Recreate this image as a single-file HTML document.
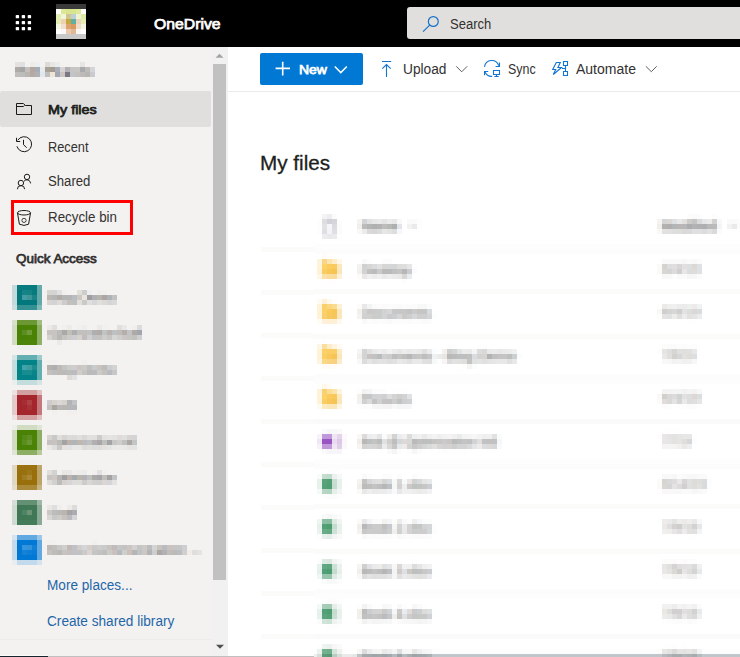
<!DOCTYPE html>
<html lang="en">
<head>
<meta charset="utf-8">
<title>My files - OneDrive</title>
<style>
html,body{margin:0;padding:0;}
body{width:740px;height:657px;overflow:hidden;background:#fff;position:relative;font-family:"Liberation Sans",sans-serif;font-size:14px;color:#323130;}
.abs{position:absolute;}
.sb{-webkit-text-stroke:.75px currentColor;}
.t{position:absolute;white-space:nowrap;line-height:16px;transform-origin:0 50%;}
#topbar{left:0;top:0;width:740px;height:47px;background:#000;}
#search{left:407px;top:7px;width:340px;height:32px;background:#e1dfdd;border-radius:3px;}
#side{left:0;top:47px;width:228px;height:610px;background:#f3f2f1;}
#track{left:211px;top:47px;width:17px;height:610px;background:#f1f1f1;}
#thumb{left:213px;top:64px;width:13px;height:516px;background:#c1c1c1;}
#sel{left:0;top:91px;width:211px;height:36px;background:#e1dfdd;border-radius:2px;}
#redbox{left:11px;top:200px;width:116px;height:29px;border:3px solid #ff0000;}
#newbtn{left:260px;top:53px;width:103px;height:32px;background:#0078d4;border-radius:2px;}
#cmdline{left:228px;top:91px;width:512px;height:1px;background:#edebe9;}
#sideline{left:0;top:639px;width:211px;height:1px;background:#edebe9;}
#botline{left:48px;top:656px;width:266px;height:1px;background:#c0c0c0;}
#botdark{left:0;top:655px;width:48px;height:1px;background:#14252e;border-top:1px solid #fbfbfa;box-sizing:content-box;}
svg{position:absolute;left:0;top:0;overflow:visible;}
</style>
</head>
<body>
<div id="topbar" class="abs"></div>
<div id="search" class="abs"></div>
<div id="side" class="abs"></div>
<div id="track" class="abs"></div>
<div id="thumb" class="abs"></div>
<div id="sel" class="abs"></div>
<div id="sideline" class="abs"></div>
<div id="cmdline" class="abs"></div>
<div id="newbtn" class="abs"></div>
<div id="redbox" class="abs"></div>

<!--TEXT-->
<div class="t sb" id="t_od" style="left:154.3px;top:15.8px;font-size:15px;color:#fff;transform:scaleX(1.05)">OneDrive</div>
<div class="t" id="t_search" style="left:450px;top:16.2px;color:#323130;transform:scaleX(.93)">Search</div>
<div class="t sb" id="t_new" style="left:298.5px;top:61.7px;font-size:13.2px;color:#fff;transform:scaleX(1.06)">New</div>
<div class="t" id="t_upload" style="left:402.5px;top:61px;transform:scaleX(.98)">Upload</div>
<div class="t" id="t_sync" style="left:507.5px;top:61px;transform:scaleX(.887)">Sync</div>
<div class="t" id="t_auto" style="left:576px;top:61px;">Automate</div>
<div class="t sb" id="t_myf" style="left:48px;top:101.7px;font-size:13.2px;color:#201f1e;transform:scaleX(1.09)">My files</div>
<div class="t" id="t_recent" style="left:47.5px;top:138.5px;transform:scaleX(.913)">Recent</div>
<div class="t" id="t_shared" style="left:47.8px;top:173px;transform:scaleX(.94)">Shared</div>
<div class="t" id="t_recycle" style="left:47.5px;top:208.5px;transform:scaleX(.953)">Recycle bin</div>
<div class="t sb" id="t_qa" style="left:16.3px;top:251.2px;font-size:13.2px;transform:scaleX(1.02)">Quick Access</div>
<div class="t" id="t_more" style="left:47px;top:577px;color:#1f66a8;transform:scaleX(.972)">More places...</div>
<div class="t" id="t_create" style="left:47.2px;top:613px;color:#1f66a8;transform:scaleX(.974)">Create shared library</div>
<div class="t" id="t_head" style="left:259.6px;top:151px;font-size:20px;line-height:24px;color:#201f1e;transform:scaleX(1.035);-webkit-text-stroke:.3px #201f1e">My files</div>
<!--/TEXT-->

<!--ICONS-->
<svg width="740" height="657" viewBox="0 0 740 657" fill="none" stroke-linecap="butt">
<g fill="#fff">
<rect x="15.7" y="14.9" width="3.4" height="3.4" rx=".9"/><rect x="21.7" y="14.9" width="3.4" height="3.4" rx=".9"/><rect x="27.7" y="14.9" width="3.4" height="3.4" rx=".9"/>
<rect x="15.7" y="20.9" width="3.4" height="3.4" rx=".9"/><rect x="21.7" y="20.9" width="3.4" height="3.4" rx=".9"/><rect x="27.7" y="20.9" width="3.4" height="3.4" rx=".9"/>
<rect x="15.7" y="26.9" width="3.4" height="3.4" rx=".9"/><rect x="21.7" y="26.9" width="3.4" height="3.4" rx=".9"/><rect x="27.7" y="26.9" width="3.4" height="3.4" rx=".9"/>
</g>
<g stroke="#1170c6" stroke-width="1.15"><circle cx="433.3" cy="21.5" r="4.95"/><path d="M429.7 25.1L423 31.6"/></g>
<g stroke="#fff" stroke-width="1.6"><path d="M275.6 68.4H290M282.7 61.7V75.5"/><path d="M334.8 66.5L340.8 72.6L346.8 66.5" stroke-width="1.5"/></g>
<g stroke="#1374d2" stroke-width="1.1">
<path d="M382 61.5H391.2M386.5 64.6V77M382.3 68.7L386.5 64.5L390.7 68.7"/>
<path d="M484.5 66.8A7.3 7.3 0 0 1 498.7 65.7M499.5 62.6V66.5H495.6M484.5 75.2V71.5H488.2M485 72A7.3 7.3 0 0 0 492.2 76.4M493.5 70.5H499.5V74.5H493.5ZM496.5 74.5V76.5M494.3 76.5H498.7"/>
<path d="M556.3 62.5H560.3L557.9 67.5H561.5L553.3 74.5L555.7 69.5H552.7ZM563.5 61.5H567.5V65.5H563.5ZM563.5 71.5H567.5V75.5H563.5ZM565.5 65.5V71.5M562 68.5H565.5"/>
</g>
<g stroke="#605e5c" stroke-width="1"><path d="M456.2 66.3L461.7 71.8L467.2 66.3"/><path d="M645.9 66.3L651.3 71.7L656.7 66.3"/></g>
<g stroke="#1b1a19" stroke-width="1">
<path d="M16.5 103.5H23.4L25.4 105.5H31.5V114.5H16.5ZM16.5 106.5H23.4L24.6 105.4"/>
<path d="M17.7 140.3A7.5 7.5 0 1 1 16.9 146.3M16.5 137.8V141.5H20.2M23.5 139.8V144.7L26.7 147.7"/>
<circle cx="27" cy="176.9" r="2.7"/><circle cx="20.9" cy="183" r="2.7"/><path d="M17.4 189.2A3.6 3.6 0 0 1 24.6 189.2M24 181.2A3.7 3.7 0 0 1 30.6 183.4"/>
<ellipse cx="24" cy="212.75" rx="6.5" ry="2.25"/><path d="M17.5 213L19.4 224.2Q24 226.6 28.6 224.2L30.5 213"/><circle cx="24" cy="220.4" r="2.1" stroke-opacity=".8"/>
</g>
<path d="M215.5 57.8L219.5 53.8L223.5 57.8Z" fill="#a3a3a3"/>
<path d="M216 644.8L220 648.8L224 644.8Z" fill="#505050"/>
</svg>
<!--/ICONS-->

<!--MOSAIC-->
<svg width="740" height="657" viewBox="0 0 740 657" shape-rendering="crispEdges">
<path fill="#c4dada" d="M12 285h5v5h-5z"/>
<path fill="#097b7f" d="M17 285h5v5h-5z"/>
<path fill="#097b7f" d="M22 285h5v5h-5z"/>
<path fill="#097b7f" d="M27 285h5v5h-5z"/>
<path fill="#097b7f" d="M32 285h5v5h-5z"/>
<path fill="#66aaac" d="M37 285h5v5h-5z"/>
<path fill="#c3dada" d="M12 290h5v5h-5z"/>
<path fill="#03787c" d="M17 290h5v5h-5z"/>
<path fill="#168387" d="M22 290h5v5h-5z"/>
<path fill="#158286" d="M27 290h5v5h-5z"/>
<path fill="#077a7d" d="M32 290h5v5h-5z"/>
<path fill="#63a9ab" d="M37 290h5v5h-5z"/>
<path fill="#d8d5d1" d="M47 290h5v5h-5z"/>
<path fill="#d3d4d4" d="M52 290h5v5h-5z"/>
<path fill="#e1e0e0" d="M57 290h5v5h-5z"/>
<path fill="#f1f0ef" d="M62 290h5v5h-5z"/>
<path fill="#e2deda" d="M77 290h5v5h-5z"/>
<path fill="#cecdcd" d="M82 290h5v5h-5z"/>
<path fill="#edeeee" d="M87 290h5v5h-5z"/>
<path fill="#f1efee" d="M97 290h5v5h-5z"/>
<path fill="#f0efee" d="M102 290h5v5h-5z"/>
<path fill="#c3dada" d="M12 295h5v5h-5z"/>
<path fill="#04787d" d="M17 295h5v5h-5z"/>
<path fill="#429ca2" d="M22 295h5v5h-5z"/>
<path fill="#3c9698" d="M27 295h5v5h-5z"/>
<path fill="#1d8485" d="M32 295h5v5h-5z"/>
<path fill="#63a9ab" d="M37 295h5v5h-5z"/>
<path fill="#bcb9b5" d="M47 295h5v5h-5z"/>
<path fill="#b6b5b5" d="M52 295h5v5h-5z"/>
<path fill="#b1aca5" d="M57 295h5v5h-5z"/>
<path fill="#b5b5b4" d="M62 295h5v5h-5z"/>
<path fill="#b3b6b7" d="M67 295h5v5h-5z"/>
<path fill="#bbbcbf" d="M72 295h5v5h-5z"/>
<path fill="#ccc7c4" d="M77 295h5v5h-5z"/>
<path fill="#e7e5de" d="M82 295h5v5h-5z"/>
<path fill="#9f9d9f" d="M87 295h5v5h-5z"/>
<path fill="#aeb0b3" d="M92 295h5v5h-5z"/>
<path fill="#b7b3ad" d="M97 295h5v5h-5z"/>
<path fill="#aba6a4" d="M102 295h5v5h-5z"/>
<path fill="#adb3b7" d="M107 295h5v5h-5z"/>
<path fill="#c0c1c1" d="M112 295h5v5h-5z"/>
<path fill="#c3dada" d="M12 300h5v5h-5z"/>
<path fill="#03787c" d="M17 300h5v5h-5z"/>
<path fill="#03787c" d="M22 300h5v5h-5z"/>
<path fill="#03787c" d="M27 300h5v5h-5z"/>
<path fill="#03787c" d="M32 300h5v5h-5z"/>
<path fill="#63a9ab" d="M37 300h5v5h-5z"/>
<path fill="#d8d5d1" d="M47 300h5v5h-5z"/>
<path fill="#d2d3d4" d="M52 300h5v5h-5z"/>
<path fill="#dddad7" d="M57 300h5v5h-5z"/>
<path fill="#cdcccd" d="M62 300h5v5h-5z"/>
<path fill="#c3bfb9" d="M67 300h5v5h-5z"/>
<path fill="#bcc0c3" d="M72 300h5v5h-5z"/>
<path fill="#e2deda" d="M77 300h5v5h-5z"/>
<path fill="#cacac9" d="M82 300h5v5h-5z"/>
<path fill="#e1dfde" d="M87 300h5v5h-5z"/>
<path fill="#d6d7d8" d="M92 300h5v5h-5z"/>
<path fill="#e0dfdc" d="M97 300h5v5h-5z"/>
<path fill="#ddd9d7" d="M102 300h5v5h-5z"/>
<path fill="#d5d5d6" d="M107 300h5v5h-5z"/>
<path fill="#d9d9da" d="M112 300h5v5h-5z"/>
<path fill="#ccdede" d="M12 305h5v5h-5z"/>
<path fill="#339093" d="M17 305h5v5h-5z"/>
<path fill="#339093" d="M22 305h5v5h-5z"/>
<path fill="#339093" d="M27 305h5v5h-5z"/>
<path fill="#339093" d="M32 305h5v5h-5z"/>
<path fill="#80b7b9" d="M37 305h5v5h-5z"/>
<path fill="#d8e0cb" d="M12 320h5v5h-5z"/>
<path fill="#6b9835" d="M17 320h5v5h-5z"/>
<path fill="#6b9834" d="M22 320h5v5h-5z"/>
<path fill="#6b9834" d="M27 320h5v5h-5z"/>
<path fill="#6b9834" d="M32 320h5v5h-5z"/>
<path fill="#a2bc80" d="M37 320h5v5h-5z"/>
<path fill="#d1dcc2" d="M12 325h5v5h-5z"/>
<path fill="#498205" d="M17 325h5v5h-5z"/>
<path fill="#498206" d="M22 325h5v5h-5z"/>
<path fill="#4a8306" d="M27 325h5v5h-5z"/>
<path fill="#498205" d="M32 325h5v5h-5z"/>
<path fill="#8daf63" d="M37 325h5v5h-5z"/>
<path fill="#ece9e6" d="M47 325h5v5h-5z"/>
<path fill="#dfdfe0" d="M52 325h5v5h-5z"/>
<path fill="#f0efee" d="M62 325h5v5h-5z"/>
<path fill="#ebebea" d="M67 325h5v5h-5z"/>
<path fill="#f2f0ee" d="M77 325h5v5h-5z"/>
<path fill="#ededed" d="M82 325h5v5h-5z"/>
<path fill="#eceae8" d="M97 325h5v5h-5z"/>
<path fill="#f0f0f0" d="M102 325h5v5h-5z"/>
<path fill="#e1dedb" d="M117 325h5v5h-5z"/>
<path fill="#e8e8e8" d="M122 325h5v5h-5z"/>
<path fill="#f1efec" d="M132 325h5v5h-5z"/>
<path fill="#dcdbdb" d="M137 325h5v5h-5z"/>
<path fill="#d1dcc2" d="M12 330h5v5h-5z"/>
<path fill="#498205" d="M17 330h5v5h-5z"/>
<path fill="#598f24" d="M22 330h5v5h-5z"/>
<path fill="#719b34" d="M27 330h5v5h-5z"/>
<path fill="#498205" d="M32 330h5v5h-5z"/>
<path fill="#8daf63" d="M37 330h5v5h-5z"/>
<path fill="#c5c4c0" d="M47 330h5v5h-5z"/>
<path fill="#cac3bf" d="M52 330h5v5h-5z"/>
<path fill="#bbbcba" d="M57 330h5v5h-5z"/>
<path fill="#aba8a8" d="M62 330h5v5h-5z"/>
<path fill="#c2bfb7" d="M67 330h5v5h-5z"/>
<path fill="#aeafb3" d="M72 330h5v5h-5z"/>
<path fill="#c2c0ba" d="M77 330h5v5h-5z"/>
<path fill="#c2bfbf" d="M82 330h5v5h-5z"/>
<path fill="#c2c3c1" d="M87 330h5v5h-5z"/>
<path fill="#aeafb0" d="M92 330h5v5h-5z"/>
<path fill="#b1aba8" d="M97 330h5v5h-5z"/>
<path fill="#bec3c4" d="M102 330h5v5h-5z"/>
<path fill="#b9b4b0" d="M107 330h5v5h-5z"/>
<path fill="#bdc1c3" d="M112 330h5v5h-5z"/>
<path fill="#c0bdb8" d="M117 330h5v5h-5z"/>
<path fill="#b5afac" d="M122 330h5v5h-5z"/>
<path fill="#c2c3c2" d="M127 330h5v5h-5z"/>
<path fill="#b0aaa5" d="M132 330h5v5h-5z"/>
<path fill="#a0a7ae" d="M137 330h5v5h-5z"/>
<path fill="#d1dcc2" d="M12 335h5v5h-5z"/>
<path fill="#498205" d="M17 335h5v5h-5z"/>
<path fill="#498206" d="M22 335h5v5h-5z"/>
<path fill="#4a8306" d="M27 335h5v5h-5z"/>
<path fill="#498205" d="M32 335h5v5h-5z"/>
<path fill="#8daf63" d="M37 335h5v5h-5z"/>
<path fill="#d5d1cd" d="M47 335h5v5h-5z"/>
<path fill="#c6c5c5" d="M52 335h5v5h-5z"/>
<path fill="#bbb8b4" d="M57 335h5v5h-5z"/>
<path fill="#c6c3c3" d="M62 335h5v5h-5z"/>
<path fill="#cdcbc5" d="M67 335h5v5h-5z"/>
<path fill="#cccdd2" d="M72 335h5v5h-5z"/>
<path fill="#d6d3cd" d="M77 335h5v5h-5z"/>
<path fill="#bfbdbf" d="M82 335h5v5h-5z"/>
<path fill="#d1cfcd" d="M87 335h5v5h-5z"/>
<path fill="#c1c2c3" d="M92 335h5v5h-5z"/>
<path fill="#c6c1bf" d="M97 335h5v5h-5z"/>
<path fill="#cbcdcc" d="M102 335h5v5h-5z"/>
<path fill="#c7c5c3" d="M107 335h5v5h-5z"/>
<path fill="#d5d6d6" d="M112 335h5v5h-5z"/>
<path fill="#d1cecc" d="M117 335h5v5h-5z"/>
<path fill="#cac6c4" d="M122 335h5v5h-5z"/>
<path fill="#c4c6c6" d="M127 335h5v5h-5z"/>
<path fill="#c4c0bc" d="M132 335h5v5h-5z"/>
<path fill="#ccd0d3" d="M137 335h5v5h-5z"/>
<path fill="#d2dcc3" d="M12 340h5v5h-5z"/>
<path fill="#4d850b" d="M17 340h5v5h-5z"/>
<path fill="#4d850a" d="M22 340h5v5h-5z"/>
<path fill="#4d850a" d="M27 340h5v5h-5z"/>
<path fill="#4d850a" d="M32 340h5v5h-5z"/>
<path fill="#8fb067" d="M37 340h5v5h-5z"/>
<path fill="#ebeae9" d="M57 340h5v5h-5z"/>
<path fill="#efefec" d="M17 345h5v5h-5z"/>
<path fill="#efefec" d="M22 345h5v5h-5z"/>
<path fill="#efefec" d="M27 345h5v5h-5z"/>
<path fill="#efefec" d="M32 345h5v5h-5z"/>
<path fill="#f1f0ee" d="M37 345h5v5h-5z"/>
<path fill="#d6e5e4" d="M12 355h5v5h-5z"/>
<path fill="#63afb1" d="M17 355h5v5h-5z"/>
<path fill="#63afb1" d="M22 355h5v5h-5z"/>
<path fill="#63afb1" d="M27 355h5v5h-5z"/>
<path fill="#63afb1" d="M32 355h5v5h-5z"/>
<path fill="#9dcacb" d="M37 355h5v5h-5z"/>
<path fill="#c3dcdc" d="M12 360h5v5h-5z"/>
<path fill="#038387" d="M17 360h5v5h-5z"/>
<path fill="#038387" d="M22 360h5v5h-5z"/>
<path fill="#038387" d="M27 360h5v5h-5z"/>
<path fill="#038387" d="M32 360h5v5h-5z"/>
<path fill="#63afb1" d="M37 360h5v5h-5z"/>
<path fill="#f1f0ee" d="M47 360h5v5h-5z"/>
<path fill="#f1f0ef" d="M52 360h5v5h-5z"/>
<path fill="#f0efee" d="M82 360h5v5h-5z"/>
<path fill="#c3dcdc" d="M12 365h5v5h-5z"/>
<path fill="#048388" d="M17 365h5v5h-5z"/>
<path fill="#42a4a9" d="M22 365h5v5h-5z"/>
<path fill="#3a9ea1" d="M27 365h5v5h-5z"/>
<path fill="#1c8d8f" d="M32 365h5v5h-5z"/>
<path fill="#63afb1" d="M37 365h5v5h-5z"/>
<path fill="#b7b2ac" d="M47 365h5v5h-5z"/>
<path fill="#aeafb1" d="M52 365h5v5h-5z"/>
<path fill="#bdbab6" d="M57 365h5v5h-5z"/>
<path fill="#c5c4c5" d="M62 365h5v5h-5z"/>
<path fill="#ccccca" d="M67 365h5v5h-5z"/>
<path fill="#cdcdd0" d="M72 365h5v5h-5z"/>
<path fill="#ccc5c1" d="M77 365h5v5h-5z"/>
<path fill="#cacac6" d="M82 365h5v5h-5z"/>
<path fill="#bfbfc1" d="M87 365h5v5h-5z"/>
<path fill="#c9cacb" d="M92 365h5v5h-5z"/>
<path fill="#c7c4bf" d="M97 365h5v5h-5z"/>
<path fill="#bebcbb" d="M102 365h5v5h-5z"/>
<path fill="#cacccd" d="M107 365h5v5h-5z"/>
<path fill="#d1d2d2" d="M112 365h5v5h-5z"/>
<path fill="#c3dcdc" d="M12 370h5v5h-5z"/>
<path fill="#038387" d="M17 370h5v5h-5z"/>
<path fill="#168d91" d="M22 370h5v5h-5z"/>
<path fill="#178d91" d="M27 370h5v5h-5z"/>
<path fill="#088588" d="M32 370h5v5h-5z"/>
<path fill="#63afb1" d="M37 370h5v5h-5z"/>
<path fill="#c5c1bd" d="M47 370h5v5h-5z"/>
<path fill="#bdbdbd" d="M52 370h5v5h-5z"/>
<path fill="#bfbab5" d="M57 370h5v5h-5z"/>
<path fill="#bbbaba" d="M62 370h5v5h-5z"/>
<path fill="#bcbdbc" d="M67 370h5v5h-5z"/>
<path fill="#bbbcbf" d="M72 370h5v5h-5z"/>
<path fill="#d2cdc9" d="M77 370h5v5h-5z"/>
<path fill="#c5c4c0" d="M82 370h5v5h-5z"/>
<path fill="#bbb9b9" d="M87 370h5v5h-5z"/>
<path fill="#b9bbbe" d="M92 370h5v5h-5z"/>
<path fill="#cdcbc7" d="M97 370h5v5h-5z"/>
<path fill="#c7c1be" d="M102 370h5v5h-5z"/>
<path fill="#b7bbbf" d="M107 370h5v5h-5z"/>
<path fill="#c6c7c8" d="M112 370h5v5h-5z"/>
<path fill="#c3dcdc" d="M12 375h5v5h-5z"/>
<path fill="#038387" d="M17 375h5v5h-5z"/>
<path fill="#038387" d="M22 375h5v5h-5z"/>
<path fill="#038387" d="M27 375h5v5h-5z"/>
<path fill="#038387" d="M32 375h5v5h-5z"/>
<path fill="#63afb1" d="M37 375h5v5h-5z"/>
<path fill="#dedbd7" d="M67 375h5v5h-5z"/>
<path fill="#e0e2e3" d="M72 375h5v5h-5z"/>
<path fill="#e9eeed" d="M12 380h5v5h-5z"/>
<path fill="#c3dcdc" d="M17 380h5v5h-5z"/>
<path fill="#c3dcdc" d="M22 380h5v5h-5z"/>
<path fill="#c3dcdc" d="M27 380h5v5h-5z"/>
<path fill="#c3dcdc" d="M32 380h5v5h-5z"/>
<path fill="#d6e5e4" d="M37 380h5v5h-5z"/>
<path fill="#ede2e1" d="M12 390h5v5h-5z"/>
<path fill="#d3a0a2" d="M17 390h5v5h-5z"/>
<path fill="#d3a0a2" d="M22 390h5v5h-5z"/>
<path fill="#d3a0a2" d="M27 390h5v5h-5z"/>
<path fill="#d3a0a2" d="M32 390h5v5h-5z"/>
<path fill="#e0c1c2" d="M37 390h5v5h-5z"/>
<path fill="#e3c9c9" d="M12 395h5v5h-5z"/>
<path fill="#a4262c" d="M17 395h5v5h-5z"/>
<path fill="#a4262c" d="M22 395h5v5h-5z"/>
<path fill="#a4262c" d="M27 395h5v5h-5z"/>
<path fill="#a4262c" d="M32 395h5v5h-5z"/>
<path fill="#c4787b" d="M37 395h5v5h-5z"/>
<path fill="#e3c9c9" d="M12 400h5v5h-5z"/>
<path fill="#a4262c" d="M17 400h5v5h-5z"/>
<path fill="#a62d35" d="M22 400h5v5h-5z"/>
<path fill="#af4042" d="M27 400h5v5h-5z"/>
<path fill="#a4262c" d="M32 400h5v5h-5z"/>
<path fill="#c4787b" d="M37 400h5v5h-5z"/>
<path fill="#cdcbcb" d="M47 400h5v5h-5z"/>
<path fill="#d6d3ce" d="M52 400h5v5h-5z"/>
<path fill="#d9d8d7" d="M57 400h5v5h-5z"/>
<path fill="#d6d2cd" d="M62 400h5v5h-5z"/>
<path fill="#b4b3b3" d="M67 400h5v5h-5z"/>
<path fill="#c0c3c7" d="M72 400h5v5h-5z"/>
<path fill="#e3c9c9" d="M12 405h5v5h-5z"/>
<path fill="#a4262c" d="M17 405h5v5h-5z"/>
<path fill="#a4272e" d="M22 405h5v5h-5z"/>
<path fill="#a93236" d="M27 405h5v5h-5z"/>
<path fill="#a4262c" d="M32 405h5v5h-5z"/>
<path fill="#c4787b" d="M37 405h5v5h-5z"/>
<path fill="#c2c1bd" d="M47 405h5v5h-5z"/>
<path fill="#aba5a0" d="M52 405h5v5h-5z"/>
<path fill="#b9b8b8" d="M57 405h5v5h-5z"/>
<path fill="#b9b6af" d="M62 405h5v5h-5z"/>
<path fill="#b5b6ba" d="M67 405h5v5h-5z"/>
<path fill="#b5b6b7" d="M72 405h5v5h-5z"/>
<path fill="#e3c9c9" d="M12 410h5v5h-5z"/>
<path fill="#a4262c" d="M17 410h5v5h-5z"/>
<path fill="#a4262c" d="M22 410h5v5h-5z"/>
<path fill="#a4262c" d="M27 410h5v5h-5z"/>
<path fill="#a4262c" d="M32 410h5v5h-5z"/>
<path fill="#c4787b" d="M37 410h5v5h-5z"/>
<path fill="#f1f0ef" d="M52 410h5v5h-5z"/>
<path fill="#f1f0ef" d="M67 410h5v5h-5z"/>
<path fill="#f1f0ef" d="M72 410h5v5h-5z"/>
<path fill="#ede2e1" d="M12 415h5v5h-5z"/>
<path fill="#d3a0a2" d="M17 415h5v5h-5z"/>
<path fill="#d3a0a2" d="M22 415h5v5h-5z"/>
<path fill="#d3a0a2" d="M27 415h5v5h-5z"/>
<path fill="#d3a0a2" d="M32 415h5v5h-5z"/>
<path fill="#e0c1c2" d="M37 415h5v5h-5z"/>
<path fill="#eceee7" d="M12 425h5v5h-5z"/>
<path fill="#d1dcc2" d="M17 425h5v5h-5z"/>
<path fill="#d1dcc2" d="M22 425h5v5h-5z"/>
<path fill="#d1dcc2" d="M27 425h5v5h-5z"/>
<path fill="#d1dcc2" d="M32 425h5v5h-5z"/>
<path fill="#dee5d5" d="M37 425h5v5h-5z"/>
<path fill="#d1dcc2" d="M12 430h5v5h-5z"/>
<path fill="#498205" d="M17 430h5v5h-5z"/>
<path fill="#498205" d="M22 430h5v5h-5z"/>
<path fill="#498205" d="M27 430h5v5h-5z"/>
<path fill="#498205" d="M32 430h5v5h-5z"/>
<path fill="#8daf64" d="M37 430h5v5h-5z"/>
<path fill="#d1dcc2" d="M12 435h5v5h-5z"/>
<path fill="#498205" d="M17 435h5v5h-5z"/>
<path fill="#548b18" d="M22 435h5v5h-5z"/>
<path fill="#5e9021" d="M27 435h5v5h-5z"/>
<path fill="#4b8306" d="M32 435h5v5h-5z"/>
<path fill="#8daf63" d="M37 435h5v5h-5z"/>
<path fill="#d7d4d0" d="M47 435h5v5h-5z"/>
<path fill="#c8c8c9" d="M52 435h5v5h-5z"/>
<path fill="#e0dedb" d="M57 435h5v5h-5z"/>
<path fill="#d5d4d3" d="M62 435h5v5h-5z"/>
<path fill="#dcdbda" d="M67 435h5v5h-5z"/>
<path fill="#dbdad9" d="M72 435h5v5h-5z"/>
<path fill="#e1dedb" d="M77 435h5v5h-5z"/>
<path fill="#d8d8d8" d="M82 435h5v5h-5z"/>
<path fill="#e0e0df" d="M87 435h5v5h-5z"/>
<path fill="#e0dfde" d="M92 435h5v5h-5z"/>
<path fill="#cdcbcc" d="M97 435h5v5h-5z"/>
<path fill="#e3e1df" d="M102 435h5v5h-5z"/>
<path fill="#e4e4e3" d="M107 435h5v5h-5z"/>
<path fill="#e2e2e2" d="M112 435h5v5h-5z"/>
<path fill="#e0dbda" d="M117 435h5v5h-5z"/>
<path fill="#dfdfde" d="M122 435h5v5h-5z"/>
<path fill="#d7d4d3" d="M127 435h5v5h-5z"/>
<path fill="#d2d4d5" d="M132 435h5v5h-5z"/>
<path fill="#d1dcc2" d="M12 440h5v5h-5z"/>
<path fill="#498205" d="M17 440h5v5h-5z"/>
<path fill="#5a8e1f" d="M22 440h5v5h-5z"/>
<path fill="#699830" d="M27 440h5v5h-5z"/>
<path fill="#4c8306" d="M32 440h5v5h-5z"/>
<path fill="#8daf63" d="M37 440h5v5h-5z"/>
<path fill="#c3c2c0" d="M47 440h5v5h-5z"/>
<path fill="#c8c3bf" d="M52 440h5v5h-5z"/>
<path fill="#babab8" d="M57 440h5v5h-5z"/>
<path fill="#a4a3a4" d="M62 440h5v5h-5z"/>
<path fill="#bab2ab" d="M67 440h5v5h-5z"/>
<path fill="#aeb5bb" d="M72 440h5v5h-5z"/>
<path fill="#bfb7ae" d="M77 440h5v5h-5z"/>
<path fill="#b9bbbf" d="M82 440h5v5h-5z"/>
<path fill="#c1c0c1" d="M87 440h5v5h-5z"/>
<path fill="#afb0af" d="M92 440h5v5h-5z"/>
<path fill="#aaa6a8" d="M97 440h5v5h-5z"/>
<path fill="#bfc1bf" d="M102 440h5v5h-5z"/>
<path fill="#a5a4a5" d="M107 440h5v5h-5z"/>
<path fill="#c6c7c7" d="M112 440h5v5h-5z"/>
<path fill="#d2ccca" d="M117 440h5v5h-5z"/>
<path fill="#bec2c1" d="M122 440h5v5h-5z"/>
<path fill="#aca6a4" d="M127 440h5v5h-5z"/>
<path fill="#c2c5c6" d="M132 440h5v5h-5z"/>
<path fill="#d1dcc2" d="M12 445h5v5h-5z"/>
<path fill="#498205" d="M17 445h5v5h-5z"/>
<path fill="#498205" d="M22 445h5v5h-5z"/>
<path fill="#498205" d="M27 445h5v5h-5z"/>
<path fill="#498205" d="M32 445h5v5h-5z"/>
<path fill="#8daf63" d="M37 445h5v5h-5z"/>
<path fill="#eae7e4" d="M47 445h5v5h-5z"/>
<path fill="#dddede" d="M52 445h5v5h-5z"/>
<path fill="#cac7c5" d="M57 445h5v5h-5z"/>
<path fill="#e3e2e0" d="M62 445h5v5h-5z"/>
<path fill="#e3e2e2" d="M67 445h5v5h-5z"/>
<path fill="#e6e7e7" d="M72 445h5v5h-5z"/>
<path fill="#e9e7e4" d="M77 445h5v5h-5z"/>
<path fill="#dddcdb" d="M82 445h5v5h-5z"/>
<path fill="#e0dfde" d="M87 445h5v5h-5z"/>
<path fill="#ddddde" d="M92 445h5v5h-5z"/>
<path fill="#dfdddc" d="M97 445h5v5h-5z"/>
<path fill="#e4e1df" d="M102 445h5v5h-5z"/>
<path fill="#e4e5e5" d="M107 445h5v5h-5z"/>
<path fill="#eaeae9" d="M112 445h5v5h-5z"/>
<path fill="#eceae9" d="M117 445h5v5h-5z"/>
<path fill="#e9e9e8" d="M122 445h5v5h-5z"/>
<path fill="#e6e3e0" d="M127 445h5v5h-5z"/>
<path fill="#e3e4e4" d="M132 445h5v5h-5z"/>
<path fill="#dee5d5" d="M12 450h5v5h-5z"/>
<path fill="#8daf64" d="M17 450h5v5h-5z"/>
<path fill="#8daf63" d="M22 450h5v5h-5z"/>
<path fill="#8daf63" d="M27 450h5v5h-5z"/>
<path fill="#8daf63" d="M32 450h5v5h-5z"/>
<path fill="#b6ca9c" d="M37 450h5v5h-5z"/>
<path fill="#f1efec" d="M17 460h5v5h-5z"/>
<path fill="#f1efec" d="M22 460h5v5h-5z"/>
<path fill="#f1efec" d="M27 460h5v5h-5z"/>
<path fill="#f1efec" d="M32 460h5v5h-5z"/>
<path fill="#f2f0ee" d="M37 460h5v5h-5z"/>
<path fill="#e1d8c4" d="M12 465h5v5h-5z"/>
<path fill="#9a7210" d="M17 465h5v5h-5z"/>
<path fill="#9a7210" d="M22 465h5v5h-5z"/>
<path fill="#9a7210" d="M27 465h5v5h-5z"/>
<path fill="#9a7210" d="M32 465h5v5h-5z"/>
<path fill="#bea56a" d="M37 465h5v5h-5z"/>
<path fill="#e1d8c3" d="M12 470h5v5h-5z"/>
<path fill="#986f0b" d="M17 470h5v5h-5z"/>
<path fill="#997110" d="M22 470h5v5h-5z"/>
<path fill="#9e7717" d="M27 470h5v5h-5z"/>
<path fill="#986f0b" d="M32 470h5v5h-5z"/>
<path fill="#bca367" d="M37 470h5v5h-5z"/>
<path fill="#e1ddda" d="M47 470h5v5h-5z"/>
<path fill="#d1d3d3" d="M52 470h5v5h-5z"/>
<path fill="#f1f0ee" d="M57 470h5v5h-5z"/>
<path fill="#e9e7e6" d="M62 470h5v5h-5z"/>
<path fill="#e9e8e7" d="M67 470h5v5h-5z"/>
<path fill="#f0efee" d="M72 470h5v5h-5z"/>
<path fill="#efedea" d="M77 470h5v5h-5z"/>
<path fill="#eaebec" d="M82 470h5v5h-5z"/>
<path fill="#f0efed" d="M92 470h5v5h-5z"/>
<path fill="#e2e0e0" d="M97 470h5v5h-5z"/>
<path fill="#f0f0ef" d="M102 470h5v5h-5z"/>
<path fill="#e1d8c3" d="M12 475h5v5h-5z"/>
<path fill="#986f0b" d="M17 475h5v5h-5z"/>
<path fill="#a07d25" d="M22 475h5v5h-5z"/>
<path fill="#aa8730" d="M27 475h5v5h-5z"/>
<path fill="#986f0b" d="M32 475h5v5h-5z"/>
<path fill="#bca367" d="M37 475h5v5h-5z"/>
<path fill="#c6c5c3" d="M47 475h5v5h-5z"/>
<path fill="#cec7c3" d="M52 475h5v5h-5z"/>
<path fill="#b6b5b3" d="M57 475h5v5h-5z"/>
<path fill="#a1a0a0" d="M62 475h5v5h-5z"/>
<path fill="#bab2ab" d="M67 475h5v5h-5z"/>
<path fill="#a6abb0" d="M72 475h5v5h-5z"/>
<path fill="#bab5ac" d="M77 475h5v5h-5z"/>
<path fill="#b3b2b4" d="M82 475h5v5h-5z"/>
<path fill="#bfbfbf" d="M87 475h5v5h-5z"/>
<path fill="#aaaaa7" d="M92 475h5v5h-5z"/>
<path fill="#a6a4a8" d="M97 475h5v5h-5z"/>
<path fill="#bebebb" d="M102 475h5v5h-5z"/>
<path fill="#a4a3a4" d="M107 475h5v5h-5z"/>
<path fill="#c1c3c5" d="M112 475h5v5h-5z"/>
<path fill="#e1d8c3" d="M12 480h5v5h-5z"/>
<path fill="#986f0b" d="M17 480h5v5h-5z"/>
<path fill="#986f0b" d="M22 480h5v5h-5z"/>
<path fill="#986f0b" d="M27 480h5v5h-5z"/>
<path fill="#986f0b" d="M32 480h5v5h-5z"/>
<path fill="#bca367" d="M37 480h5v5h-5z"/>
<path fill="#dfdbd7" d="M47 480h5v5h-5z"/>
<path fill="#cfd0d0" d="M52 480h5v5h-5z"/>
<path fill="#bfbbb8" d="M57 480h5v5h-5z"/>
<path fill="#d3d2d1" d="M62 480h5v5h-5z"/>
<path fill="#d8d5d4" d="M67 480h5v5h-5z"/>
<path fill="#dadcde" d="M72 480h5v5h-5z"/>
<path fill="#dfdcd7" d="M77 480h5v5h-5z"/>
<path fill="#cccccc" d="M82 480h5v5h-5z"/>
<path fill="#d8d7d5" d="M87 480h5v5h-5z"/>
<path fill="#d0d0cf" d="M92 480h5v5h-5z"/>
<path fill="#d0cecf" d="M97 480h5v5h-5z"/>
<path fill="#d9d6d3" d="M102 480h5v5h-5z"/>
<path fill="#d4d5d7" d="M107 480h5v5h-5z"/>
<path fill="#e3e2e1" d="M112 480h5v5h-5z"/>
<path fill="#e4ddcc" d="M12 485h5v5h-5z"/>
<path fill="#aa8939" d="M17 485h5v5h-5z"/>
<path fill="#aa8939" d="M22 485h5v5h-5z"/>
<path fill="#aa8939" d="M27 485h5v5h-5z"/>
<path fill="#aa8939" d="M32 485h5v5h-5z"/>
<path fill="#c7b383" d="M37 485h5v5h-5z"/>
<path fill="#d6ded8" d="M12 500h5v5h-5z"/>
<path fill="#649075" d="M17 500h5v5h-5z"/>
<path fill="#649074" d="M22 500h5v5h-5z"/>
<path fill="#649074" d="M27 500h5v5h-5z"/>
<path fill="#649074" d="M32 500h5v5h-5z"/>
<path fill="#9db7a6" d="M37 500h5v5h-5z"/>
<path fill="#cfdad2" d="M12 505h5v5h-5z"/>
<path fill="#407855" d="M17 505h5v5h-5z"/>
<path fill="#407855" d="M22 505h5v5h-5z"/>
<path fill="#417956" d="M27 505h5v5h-5z"/>
<path fill="#407855" d="M32 505h5v5h-5z"/>
<path fill="#88a993" d="M37 505h5v5h-5z"/>
<path fill="#e9e6e4" d="M47 505h5v5h-5z"/>
<path fill="#dddedf" d="M52 505h5v5h-5z"/>
<path fill="#efeeed" d="M57 505h5v5h-5z"/>
<path fill="#edeae7" d="M67 505h5v5h-5z"/>
<path fill="#dcdcdb" d="M72 505h5v5h-5z"/>
<path fill="#cfdad2" d="M12 510h5v5h-5z"/>
<path fill="#407855" d="M17 510h5v5h-5z"/>
<path fill="#4d8467" d="M22 510h5v5h-5z"/>
<path fill="#6c9474" d="M27 510h5v5h-5z"/>
<path fill="#407855" d="M32 510h5v5h-5z"/>
<path fill="#88a993" d="M37 510h5v5h-5z"/>
<path fill="#cbc7c3" d="M47 510h5v5h-5z"/>
<path fill="#bbbcbd" d="M52 510h5v5h-5z"/>
<path fill="#bab9b6" d="M57 510h5v5h-5z"/>
<path fill="#bcb5ae" d="M62 510h5v5h-5z"/>
<path fill="#a6a4a6" d="M67 510h5v5h-5z"/>
<path fill="#abacaf" d="M72 510h5v5h-5z"/>
<path fill="#cfdad2" d="M12 515h5v5h-5z"/>
<path fill="#407855" d="M17 515h5v5h-5z"/>
<path fill="#407855" d="M22 515h5v5h-5z"/>
<path fill="#417956" d="M27 515h5v5h-5z"/>
<path fill="#407855" d="M32 515h5v5h-5z"/>
<path fill="#88a993" d="M37 515h5v5h-5z"/>
<path fill="#d9d7d4" d="M47 515h5v5h-5z"/>
<path fill="#c9c8c8" d="M52 515h5v5h-5z"/>
<path fill="#cdccc8" d="M57 515h5v5h-5z"/>
<path fill="#c5c2bf" d="M62 515h5v5h-5z"/>
<path fill="#bcbabe" d="M67 515h5v5h-5z"/>
<path fill="#d4d3d5" d="M72 515h5v5h-5z"/>
<path fill="#d0dad2" d="M12 520h5v5h-5z"/>
<path fill="#447b59" d="M17 520h5v5h-5z"/>
<path fill="#447b59" d="M22 520h5v5h-5z"/>
<path fill="#447b59" d="M27 520h5v5h-5z"/>
<path fill="#447b59" d="M32 520h5v5h-5z"/>
<path fill="#8aaa96" d="M37 520h5v5h-5z"/>
<path fill="#efefed" d="M17 525h5v5h-5z"/>
<path fill="#efefed" d="M22 525h5v5h-5z"/>
<path fill="#efefed" d="M27 525h5v5h-5z"/>
<path fill="#efefed" d="M32 525h5v5h-5z"/>
<path fill="#f0f0ef" d="M37 525h5v5h-5z"/>
<path fill="#d6e3ee" d="M12 535h5v5h-5z"/>
<path fill="#61a9e0" d="M17 535h5v5h-5z"/>
<path fill="#61a9e0" d="M22 535h5v5h-5z"/>
<path fill="#61a9e0" d="M27 535h5v5h-5z"/>
<path fill="#61a9e0" d="M32 535h5v5h-5z"/>
<path fill="#9cc6e7" d="M37 535h5v5h-5z"/>
<path fill="#c2daeb" d="M12 540h5v5h-5z"/>
<path fill="#0078d4" d="M17 540h5v5h-5z"/>
<path fill="#0078d4" d="M22 540h5v5h-5z"/>
<path fill="#0078d4" d="M27 540h5v5h-5z"/>
<path fill="#0078d4" d="M32 540h5v5h-5z"/>
<path fill="#61a9e0" d="M37 540h5v5h-5z"/>
<path fill="#f1f0ee" d="M47 540h5v5h-5z"/>
<path fill="#f1f0ef" d="M52 540h5v5h-5z"/>
<path fill="#f0efee" d="M92 540h5v5h-5z"/>
<path fill="#c2daeb" d="M12 545h5v5h-5z"/>
<path fill="#0178d4" d="M17 545h5v5h-5z"/>
<path fill="#3395de" d="M22 545h5v5h-5z"/>
<path fill="#3392dc" d="M27 545h5v5h-5z"/>
<path fill="#1080d6" d="M32 545h5v5h-5z"/>
<path fill="#61a9e0" d="M37 545h5v5h-5z"/>
<path fill="#bdbbb8" d="M47 545h5v5h-5z"/>
<path fill="#c3bebc" d="M52 545h5v5h-5z"/>
<path fill="#c6c9c9" d="M57 545h5v5h-5z"/>
<path fill="#d0cfcb" d="M62 545h5v5h-5z"/>
<path fill="#bdbab8" d="M67 545h5v5h-5z"/>
<path fill="#c0c1c4" d="M72 545h5v5h-5z"/>
<path fill="#d0cecc" d="M77 545h5v5h-5z"/>
<path fill="#d4d5d6" d="M82 545h5v5h-5z"/>
<path fill="#d3ceca" d="M87 545h5v5h-5z"/>
<path fill="#c9c9c8" d="M92 545h5v5h-5z"/>
<path fill="#cdcdcd" d="M97 545h5v5h-5z"/>
<path fill="#c9caca" d="M102 545h5v5h-5z"/>
<path fill="#c7c4bf" d="M107 545h5v5h-5z"/>
<path fill="#c0bcbb" d="M112 545h5v5h-5z"/>
<path fill="#c5c6c7" d="M117 545h5v5h-5z"/>
<path fill="#c3c2c1" d="M122 545h5v5h-5z"/>
<path fill="#cbc6c3" d="M127 545h5v5h-5z"/>
<path fill="#d3d1d2" d="M132 545h5v5h-5z"/>
<path fill="#c3c5c6" d="M137 545h5v5h-5z"/>
<path fill="#cdcac5" d="M142 545h5v5h-5z"/>
<path fill="#bcbdbe" d="M147 545h5v5h-5z"/>
<path fill="#d3d5d5" d="M152 545h5v5h-5z"/>
<path fill="#c8c3bf" d="M157 545h5v5h-5z"/>
<path fill="#babbbc" d="M162 545h5v5h-5z"/>
<path fill="#c6c3c0" d="M167 545h5v5h-5z"/>
<path fill="#c7c5c2" d="M172 545h5v5h-5z"/>
<path fill="#c5c6c7" d="M177 545h5v5h-5z"/>
<path fill="#cdcecf" d="M182 545h5v5h-5z"/>
<path fill="#c2daeb" d="M12 550h5v5h-5z"/>
<path fill="#0078d4" d="M17 550h5v5h-5z"/>
<path fill="#1382d7" d="M22 550h5v5h-5z"/>
<path fill="#0d7fd6" d="M27 550h5v5h-5z"/>
<path fill="#077bd5" d="M32 550h5v5h-5z"/>
<path fill="#61a9e0" d="M37 550h5v5h-5z"/>
<path fill="#c5c2bf" d="M47 550h5v5h-5z"/>
<path fill="#bfbdbc" d="M52 550h5v5h-5z"/>
<path fill="#bab9b6" d="M57 550h5v5h-5z"/>
<path fill="#c4c4c0" d="M62 550h5v5h-5z"/>
<path fill="#c5bfbe" d="M67 550h5v5h-5z"/>
<path fill="#c1c2c7" d="M72 550h5v5h-5z"/>
<path fill="#c3c3c1" d="M77 550h5v5h-5z"/>
<path fill="#cacacc" d="M82 550h5v5h-5z"/>
<path fill="#dad5d1" d="M87 550h5v5h-5z"/>
<path fill="#c6c5c5" d="M92 550h5v5h-5z"/>
<path fill="#c3c2c2" d="M97 550h5v5h-5z"/>
<path fill="#bebfbf" d="M102 550h5v5h-5z"/>
<path fill="#cccbc8" d="M107 550h5v5h-5z"/>
<path fill="#cac1bf" d="M112 550h5v5h-5z"/>
<path fill="#b6bac0" d="M117 550h5v5h-5z"/>
<path fill="#cececc" d="M122 550h5v5h-5z"/>
<path fill="#c9c1ba" d="M127 550h5v5h-5z"/>
<path fill="#b7b4b4" d="M132 550h5v5h-5z"/>
<path fill="#bdc4c7" d="M137 550h5v5h-5z"/>
<path fill="#ccc8c1" d="M142 550h5v5h-5z"/>
<path fill="#b3b4b5" d="M147 550h5v5h-5z"/>
<path fill="#cecdc9" d="M152 550h5v5h-5z"/>
<path fill="#aca7a3" d="M157 550h5v5h-5z"/>
<path fill="#afb3b7" d="M162 550h5v5h-5z"/>
<path fill="#c1bdb8" d="M167 550h5v5h-5z"/>
<path fill="#bdbbb9" d="M172 550h5v5h-5z"/>
<path fill="#babec1" d="M177 550h5v5h-5z"/>
<path fill="#d0cece" d="M182 550h5v5h-5z"/>
<path fill="#f0ede9" d="M187 550h5v5h-5z"/>
<path fill="#dfdedf" d="M192 550h5v5h-5z"/>
<path fill="#e3e3e3" d="M197 550h5v5h-5z"/>
<path fill="#c2daeb" d="M12 555h5v5h-5z"/>
<path fill="#0078d4" d="M17 555h5v5h-5z"/>
<path fill="#0078d4" d="M22 555h5v5h-5z"/>
<path fill="#0078d4" d="M27 555h5v5h-5z"/>
<path fill="#0078d4" d="M32 555h5v5h-5z"/>
<path fill="#61a9e0" d="M37 555h5v5h-5z"/>
<path fill="#e9edf0" d="M12 560h5v5h-5z"/>
<path fill="#c2daeb" d="M17 560h5v5h-5z"/>
<path fill="#c2daeb" d="M22 560h5v5h-5z"/>
<path fill="#c2daeb" d="M27 560h5v5h-5z"/>
<path fill="#c2daeb" d="M32 560h5v5h-5z"/>
<path fill="#d6e3ee" d="M37 560h5v5h-5z"/>
<path fill="#f3f3f5" d="M322 214h5v5h-5z"/>
<path fill="#eeeef0" d="M327 214h5v5h-5z"/>
<path fill="#fbfbfb" d="M332 214h5v5h-5z"/>
<path fill="#fcfcfc" d="M687 214h5v5h-5z"/>
<path fill="#fbfbfb" d="M692 214h5v5h-5z"/>
<path fill="#fcfcfd" d="M697 214h5v5h-5z"/>
<path fill="#fdfdfd" d="M712 214h5v5h-5z"/>
<path fill="#fdfdfd" d="M317 219h5v5h-5z"/>
<path fill="#dedee2" d="M322 219h5v5h-5z"/>
<path fill="#d2d1d8" d="M327 219h5v5h-5z"/>
<path fill="#d6d5db" d="M332 219h5v5h-5z"/>
<path fill="#fdfdfd" d="M337 219h5v5h-5z"/>
<path fill="#f6f3f0" d="M357 219h5v5h-5z"/>
<path fill="#d2d3d5" d="M362 219h5v5h-5z"/>
<path fill="#e1e1e2" d="M367 219h5v5h-5z"/>
<path fill="#e7e7e7" d="M372 219h5v5h-5z"/>
<path fill="#ebeaea" d="M377 219h5v5h-5z"/>
<path fill="#e5e4e5" d="M382 219h5v5h-5z"/>
<path fill="#eaebeb" d="M387 219h5v5h-5z"/>
<path fill="#e7e7e7" d="M392 219h5v5h-5z"/>
<path fill="#f7f8fa" d="M397 219h5v5h-5z"/>
<path fill="#fafafa" d="M407 219h5v5h-5z"/>
<path fill="#fafafa" d="M412 219h5v5h-5z"/>
<path fill="#fdfdfd" d="M417 219h5v5h-5z"/>
<path fill="#f6f3f1" d="M657 219h5v5h-5z"/>
<path fill="#d3d4d6" d="M662 219h5v5h-5z"/>
<path fill="#d9d6d4" d="M667 219h5v5h-5z"/>
<path fill="#dfe0e2" d="M672 219h5v5h-5z"/>
<path fill="#e9e9ea" d="M677 219h5v5h-5z"/>
<path fill="#e2dfdd" d="M682 219h5v5h-5z"/>
<path fill="#cbcbcc" d="M687 219h5v5h-5z"/>
<path fill="#c5c4c3" d="M692 219h5v5h-5z"/>
<path fill="#d8dadd" d="M697 219h5v5h-5z"/>
<path fill="#e5e6e6" d="M702 219h5v5h-5z"/>
<path fill="#ebeae9" d="M707 219h5v5h-5z"/>
<path fill="#d2d1d0" d="M712 219h5v5h-5z"/>
<path fill="#f6f8fa" d="M717 219h5v5h-5z"/>
<path fill="#fafafa" d="M727 219h5v5h-5z"/>
<path fill="#fafafa" d="M732 219h5v5h-5z"/>
<path fill="#fcfcfc" d="M737 219h5v5h-5z"/>
<path fill="#fdfdfd" d="M317 224h5v5h-5z"/>
<path fill="#e2e2e5" d="M322 224h5v5h-5z"/>
<path fill="#f6f5f7" d="M327 224h5v5h-5z"/>
<path fill="#dcdce0" d="M332 224h5v5h-5z"/>
<path fill="#fbfbfc" d="M337 224h5v5h-5z"/>
<path fill="#f2eeeb" d="M357 224h5v5h-5z"/>
<path fill="#bcbabb" d="M362 224h5v5h-5z"/>
<path fill="#b3b4b5" d="M367 224h5v5h-5z"/>
<path fill="#b1b0ae" d="M372 224h5v5h-5z"/>
<path fill="#b3b3b5" d="M377 224h5v5h-5z"/>
<path fill="#bebdbd" d="M382 224h5v5h-5z"/>
<path fill="#b7b7b4" d="M387 224h5v5h-5z"/>
<path fill="#adb0b1" d="M392 224h5v5h-5z"/>
<path fill="#e2e6eb" d="M397 224h5v5h-5z"/>
<path fill="#f2f2f2" d="M407 224h5v5h-5z"/>
<path fill="#eaeaea" d="M412 224h5v5h-5z"/>
<path fill="#fdfdfd" d="M417 224h5v5h-5z"/>
<path fill="#f2eeea" d="M657 224h5v5h-5z"/>
<path fill="#b2b1b1" d="M662 224h5v5h-5z"/>
<path fill="#b0afad" d="M667 224h5v5h-5z"/>
<path fill="#b3b5b7" d="M672 224h5v5h-5z"/>
<path fill="#b9b6b5" d="M677 224h5v5h-5z"/>
<path fill="#b7b6b8" d="M682 224h5v5h-5z"/>
<path fill="#adacad" d="M687 224h5v5h-5z"/>
<path fill="#b2b1b3" d="M692 224h5v5h-5z"/>
<path fill="#b1afb0" d="M697 224h5v5h-5z"/>
<path fill="#aeafb0" d="M702 224h5v5h-5z"/>
<path fill="#b9b9b9" d="M707 224h5v5h-5z"/>
<path fill="#bababb" d="M712 224h5v5h-5z"/>
<path fill="#f2f5f8" d="M717 224h5v5h-5z"/>
<path fill="#f2f2f2" d="M727 224h5v5h-5z"/>
<path fill="#eaeaea" d="M732 224h5v5h-5z"/>
<path fill="#fbfbfb" d="M737 224h5v5h-5z"/>
<path fill="#fdfdfd" d="M317 229h5v5h-5z"/>
<path fill="#dfdfe3" d="M322 229h5v5h-5z"/>
<path fill="#f4f3f5" d="M327 229h5v5h-5z"/>
<path fill="#dfdfe3" d="M332 229h5v5h-5z"/>
<path fill="#fbfbfc" d="M337 229h5v5h-5z"/>
<path fill="#faf8f7" d="M357 229h5v5h-5z"/>
<path fill="#ebebeb" d="M362 229h5v5h-5z"/>
<path fill="#dad9d8" d="M367 229h5v5h-5z"/>
<path fill="#d6d7d6" d="M372 229h5v5h-5z"/>
<path fill="#dadbdc" d="M377 229h5v5h-5z"/>
<path fill="#e7e7e6" d="M382 229h5v5h-5z"/>
<path fill="#e3e3e2" d="M387 229h5v5h-5z"/>
<path fill="#dcdddd" d="M392 229h5v5h-5z"/>
<path fill="#f5f7f8" d="M397 229h5v5h-5z"/>
<path fill="#fefefe" d="M412 229h5v5h-5z"/>
<path fill="#faf8f7" d="M657 229h5v5h-5z"/>
<path fill="#e3e2e1" d="M662 229h5v5h-5z"/>
<path fill="#e0e1e0" d="M667 229h5v5h-5z"/>
<path fill="#dededd" d="M672 229h5v5h-5z"/>
<path fill="#dcdddd" d="M677 229h5v5h-5z"/>
<path fill="#dad8d8" d="M682 229h5v5h-5z"/>
<path fill="#d9dada" d="M687 229h5v5h-5z"/>
<path fill="#e1e0e1" d="M692 229h5v5h-5z"/>
<path fill="#e0e0e0" d="M697 229h5v5h-5z"/>
<path fill="#dbdcdd" d="M702 229h5v5h-5z"/>
<path fill="#e2e2e0" d="M707 229h5v5h-5z"/>
<path fill="#d8dadb" d="M712 229h5v5h-5z"/>
<path fill="#fafbfc" d="M717 229h5v5h-5z"/>
<path fill="#fefefe" d="M732 229h5v5h-5z"/>
<path fill="#ececef" d="M322 234h5v5h-5z"/>
<path fill="#e9e8eb" d="M327 234h5v5h-5z"/>
<path fill="#ebeaed" d="M332 234h5v5h-5z"/>
<path fill="#fefefe" d="M337 234h5v5h-5z"/>
<path fill="#fdfdfd" d="M314 244h3v5h-3z"/>
<path fill="#fdfdfd" d="M317 244h5v5h-5z"/>
<path fill="#fdfdfd" d="M322 244h5v5h-5z"/>
<path fill="#fdfdfd" d="M327 244h5v5h-5z"/>
<path fill="#fdfdfd" d="M332 244h5v5h-5z"/>
<path fill="#fdfdfd" d="M337 244h5v5h-5z"/>
<path fill="#fdfdfd" d="M342 244h5v5h-5z"/>
<path fill="#fdfdfd" d="M347 244h5v5h-5z"/>
<path fill="#fdfdfd" d="M352 244h5v5h-5z"/>
<path fill="#fdfdfd" d="M357 244h5v5h-5z"/>
<path fill="#fdfdfd" d="M362 244h5v5h-5z"/>
<path fill="#fdfdfd" d="M367 244h5v5h-5z"/>
<path fill="#fdfdfd" d="M372 244h5v5h-5z"/>
<path fill="#fdfdfd" d="M377 244h5v5h-5z"/>
<path fill="#fdfdfd" d="M382 244h5v5h-5z"/>
<path fill="#fdfdfd" d="M387 244h5v5h-5z"/>
<path fill="#fdfdfd" d="M392 244h5v5h-5z"/>
<path fill="#fdfdfd" d="M397 244h5v5h-5z"/>
<path fill="#fdfdfd" d="M402 244h5v5h-5z"/>
<path fill="#fdfdfd" d="M407 244h5v5h-5z"/>
<path fill="#fdfdfd" d="M412 244h5v5h-5z"/>
<path fill="#fdfdfd" d="M417 244h5v5h-5z"/>
<path fill="#fdfdfd" d="M422 244h5v5h-5z"/>
<path fill="#fdfdfd" d="M427 244h5v5h-5z"/>
<path fill="#fdfdfd" d="M432 244h5v5h-5z"/>
<path fill="#fdfdfd" d="M437 244h5v5h-5z"/>
<path fill="#fdfdfd" d="M442 244h5v5h-5z"/>
<path fill="#fdfdfd" d="M447 244h5v5h-5z"/>
<path fill="#fdfdfd" d="M452 244h5v5h-5z"/>
<path fill="#fdfdfd" d="M457 244h5v5h-5z"/>
<path fill="#fdfdfd" d="M462 244h5v5h-5z"/>
<path fill="#fdfdfd" d="M467 244h5v5h-5z"/>
<path fill="#fdfdfd" d="M472 244h5v5h-5z"/>
<path fill="#fdfdfd" d="M477 244h5v5h-5z"/>
<path fill="#fdfdfd" d="M482 244h5v5h-5z"/>
<path fill="#fdfdfd" d="M487 244h5v5h-5z"/>
<path fill="#fdfdfd" d="M492 244h5v5h-5z"/>
<path fill="#fdfdfd" d="M497 244h5v5h-5z"/>
<path fill="#fdfdfd" d="M502 244h5v5h-5z"/>
<path fill="#fdfdfd" d="M507 244h5v5h-5z"/>
<path fill="#fdfdfd" d="M512 244h5v5h-5z"/>
<path fill="#fdfdfd" d="M517 244h5v5h-5z"/>
<path fill="#fdfdfd" d="M522 244h5v5h-5z"/>
<path fill="#fdfdfd" d="M527 244h5v5h-5z"/>
<path fill="#fdfdfd" d="M532 244h5v5h-5z"/>
<path fill="#fdfdfd" d="M537 244h5v5h-5z"/>
<path fill="#fdfdfd" d="M542 244h5v5h-5z"/>
<path fill="#fdfdfd" d="M547 244h5v5h-5z"/>
<path fill="#fdfdfd" d="M552 244h5v5h-5z"/>
<path fill="#fdfdfd" d="M557 244h5v5h-5z"/>
<path fill="#fdfdfd" d="M562 244h5v5h-5z"/>
<path fill="#fdfdfd" d="M567 244h5v5h-5z"/>
<path fill="#fdfdfd" d="M572 244h5v5h-5z"/>
<path fill="#fdfdfd" d="M577 244h5v5h-5z"/>
<path fill="#fdfdfd" d="M582 244h5v5h-5z"/>
<path fill="#fdfdfd" d="M587 244h5v5h-5z"/>
<path fill="#fdfdfd" d="M592 244h5v5h-5z"/>
<path fill="#fdfdfd" d="M597 244h5v5h-5z"/>
<path fill="#fdfdfd" d="M602 244h5v5h-5z"/>
<path fill="#fdfdfd" d="M607 244h5v5h-5z"/>
<path fill="#fdfdfd" d="M612 244h5v5h-5z"/>
<path fill="#fdfdfd" d="M617 244h5v5h-5z"/>
<path fill="#fdfdfd" d="M622 244h5v5h-5z"/>
<path fill="#fdfdfd" d="M627 244h5v5h-5z"/>
<path fill="#fdfdfd" d="M632 244h5v5h-5z"/>
<path fill="#fdfdfd" d="M637 244h5v5h-5z"/>
<path fill="#fdfdfd" d="M642 244h5v5h-5z"/>
<path fill="#fdfdfd" d="M647 244h5v5h-5z"/>
<path fill="#fdfdfd" d="M652 244h5v5h-5z"/>
<path fill="#fdfdfd" d="M657 244h5v5h-5z"/>
<path fill="#fdfdfd" d="M662 244h5v5h-5z"/>
<path fill="#fdfdfd" d="M667 244h5v5h-5z"/>
<path fill="#fdfdfd" d="M672 244h5v5h-5z"/>
<path fill="#fdfdfd" d="M677 244h5v5h-5z"/>
<path fill="#fdfdfd" d="M682 244h5v5h-5z"/>
<path fill="#fdfdfd" d="M687 244h5v5h-5z"/>
<path fill="#fdfdfd" d="M692 244h5v5h-5z"/>
<path fill="#fdfdfd" d="M697 244h5v5h-5z"/>
<path fill="#fdfdfd" d="M702 244h5v5h-5z"/>
<path fill="#fdfdfd" d="M707 244h5v5h-5z"/>
<path fill="#fdfdfd" d="M712 244h5v5h-5z"/>
<path fill="#fdfdfd" d="M717 244h5v5h-5z"/>
<path fill="#fdfdfd" d="M722 244h5v5h-5z"/>
<path fill="#fdfdfd" d="M727 244h5v5h-5z"/>
<path fill="#fdfdfd" d="M732 244h5v5h-5z"/>
<path fill="#fdfdfd" d="M737 244h5v5h-5z"/>
<path fill="#fcfcfc" d="M314 249h3v5h-3z"/>
<path fill="#fcfcfc" d="M317 249h5v5h-5z"/>
<path fill="#fcfcfc" d="M322 249h5v5h-5z"/>
<path fill="#fcfcfc" d="M327 249h5v5h-5z"/>
<path fill="#fcfcfc" d="M332 249h5v5h-5z"/>
<path fill="#fcfcfc" d="M337 249h5v5h-5z"/>
<path fill="#fcfcfc" d="M342 249h5v5h-5z"/>
<path fill="#fcfcfc" d="M347 249h5v5h-5z"/>
<path fill="#fcfcfc" d="M352 249h5v5h-5z"/>
<path fill="#fcfcfc" d="M357 249h5v5h-5z"/>
<path fill="#fcfcfc" d="M362 249h5v5h-5z"/>
<path fill="#fcfcfc" d="M367 249h5v5h-5z"/>
<path fill="#fcfcfc" d="M372 249h5v5h-5z"/>
<path fill="#fcfcfc" d="M377 249h5v5h-5z"/>
<path fill="#fcfcfc" d="M382 249h5v5h-5z"/>
<path fill="#fcfcfc" d="M387 249h5v5h-5z"/>
<path fill="#fcfcfc" d="M392 249h5v5h-5z"/>
<path fill="#fcfcfc" d="M397 249h5v5h-5z"/>
<path fill="#fcfcfc" d="M402 249h5v5h-5z"/>
<path fill="#fcfcfc" d="M407 249h5v5h-5z"/>
<path fill="#fcfcfc" d="M412 249h5v5h-5z"/>
<path fill="#fcfcfc" d="M417 249h5v5h-5z"/>
<path fill="#fcfcfc" d="M422 249h5v5h-5z"/>
<path fill="#fcfcfc" d="M427 249h5v5h-5z"/>
<path fill="#fcfcfc" d="M432 249h5v5h-5z"/>
<path fill="#fcfcfc" d="M437 249h5v5h-5z"/>
<path fill="#fcfcfc" d="M442 249h5v5h-5z"/>
<path fill="#fcfcfc" d="M447 249h5v5h-5z"/>
<path fill="#fcfcfc" d="M452 249h5v5h-5z"/>
<path fill="#fcfcfc" d="M457 249h5v5h-5z"/>
<path fill="#fcfcfc" d="M462 249h5v5h-5z"/>
<path fill="#fcfcfc" d="M467 249h5v5h-5z"/>
<path fill="#fcfcfc" d="M472 249h5v5h-5z"/>
<path fill="#fcfcfc" d="M477 249h5v5h-5z"/>
<path fill="#fcfcfc" d="M482 249h5v5h-5z"/>
<path fill="#fcfcfc" d="M487 249h5v5h-5z"/>
<path fill="#fcfcfc" d="M492 249h5v5h-5z"/>
<path fill="#fcfcfc" d="M497 249h5v5h-5z"/>
<path fill="#fcfcfc" d="M502 249h5v5h-5z"/>
<path fill="#fcfcfc" d="M507 249h5v5h-5z"/>
<path fill="#fcfcfc" d="M512 249h5v5h-5z"/>
<path fill="#fcfcfc" d="M517 249h5v5h-5z"/>
<path fill="#fcfcfc" d="M522 249h5v5h-5z"/>
<path fill="#fcfcfc" d="M527 249h5v5h-5z"/>
<path fill="#fcfcfc" d="M532 249h5v5h-5z"/>
<path fill="#fcfcfc" d="M537 249h5v5h-5z"/>
<path fill="#fcfcfc" d="M542 249h5v5h-5z"/>
<path fill="#fcfcfc" d="M547 249h5v5h-5z"/>
<path fill="#fcfcfc" d="M552 249h5v5h-5z"/>
<path fill="#fcfcfc" d="M557 249h5v5h-5z"/>
<path fill="#fcfcfc" d="M562 249h5v5h-5z"/>
<path fill="#fcfcfc" d="M567 249h5v5h-5z"/>
<path fill="#fcfcfc" d="M572 249h5v5h-5z"/>
<path fill="#fcfcfc" d="M577 249h5v5h-5z"/>
<path fill="#fcfcfc" d="M582 249h5v5h-5z"/>
<path fill="#fcfcfc" d="M587 249h5v5h-5z"/>
<path fill="#fcfcfc" d="M592 249h5v5h-5z"/>
<path fill="#fcfcfc" d="M597 249h5v5h-5z"/>
<path fill="#fcfcfc" d="M602 249h5v5h-5z"/>
<path fill="#fcfcfc" d="M607 249h5v5h-5z"/>
<path fill="#fcfcfc" d="M612 249h5v5h-5z"/>
<path fill="#fcfcfc" d="M617 249h5v5h-5z"/>
<path fill="#fcfcfc" d="M622 249h5v5h-5z"/>
<path fill="#fcfcfc" d="M627 249h5v5h-5z"/>
<path fill="#fcfcfc" d="M632 249h5v5h-5z"/>
<path fill="#fcfcfc" d="M637 249h5v5h-5z"/>
<path fill="#fcfcfc" d="M642 249h5v5h-5z"/>
<path fill="#fcfcfc" d="M647 249h5v5h-5z"/>
<path fill="#fcfcfc" d="M652 249h5v5h-5z"/>
<path fill="#fcfcfc" d="M657 249h5v5h-5z"/>
<path fill="#fcfcfc" d="M662 249h5v5h-5z"/>
<path fill="#fcfcfc" d="M667 249h5v5h-5z"/>
<path fill="#fcfcfc" d="M672 249h5v5h-5z"/>
<path fill="#fcfcfc" d="M677 249h5v5h-5z"/>
<path fill="#fcfcfc" d="M682 249h5v5h-5z"/>
<path fill="#fcfcfc" d="M687 249h5v5h-5z"/>
<path fill="#fcfcfc" d="M692 249h5v5h-5z"/>
<path fill="#fcfcfc" d="M697 249h5v5h-5z"/>
<path fill="#fcfcfc" d="M702 249h5v5h-5z"/>
<path fill="#fcfcfc" d="M707 249h5v5h-5z"/>
<path fill="#fcfcfc" d="M712 249h5v5h-5z"/>
<path fill="#fcfcfc" d="M717 249h5v5h-5z"/>
<path fill="#fcfcfc" d="M722 249h5v5h-5z"/>
<path fill="#fcfcfc" d="M727 249h5v5h-5z"/>
<path fill="#fcfcfc" d="M732 249h5v5h-5z"/>
<path fill="#fcfcfc" d="M737 249h5v5h-5z"/>
<path fill="#fffcf7" d="M322 254h5v5h-5z"/>
<path fill="#fffefc" d="M327 254h5v5h-5z"/>
<path fill="#fdf4df" d="M317 259h5v5h-5z"/>
<path fill="#f9d687" d="M322 259h5v5h-5z"/>
<path fill="#fbe4af" d="M327 259h5v5h-5z"/>
<path fill="#fdedc8" d="M332 259h5v5h-5z"/>
<path fill="#fef7ea" d="M337 259h5v5h-5z"/>
<path fill="#faf9fa" d="M362 259h5v5h-5z"/>
<path fill="#fdfdfd" d="M367 259h5v5h-5z"/>
<path fill="#fcfcfb" d="M382 259h5v5h-5z"/>
<path fill="#fcfcfd" d="M387 259h5v5h-5z"/>
<path fill="#f9f9f8" d="M662 259h5v5h-5z"/>
<path fill="#f9f9f9" d="M667 259h5v5h-5z"/>
<path fill="#f9f9f9" d="M672 259h5v5h-5z"/>
<path fill="#faf9f9" d="M677 259h5v5h-5z"/>
<path fill="#f7f7f7" d="M682 259h5v5h-5z"/>
<path fill="#f9fafa" d="M687 259h5v5h-5z"/>
<path fill="#f9f8f8" d="M692 259h5v5h-5z"/>
<path fill="#fbfbfc" d="M697 259h5v5h-5z"/>
<path fill="#fef4d8" d="M317 264h5v5h-5z"/>
<path fill="#fcd267" d="M322 264h5v5h-5z"/>
<path fill="#facc5e" d="M327 264h5v5h-5z"/>
<path fill="#f8ca5f" d="M332 264h5v5h-5z"/>
<path fill="#fce8bd" d="M337 264h5v5h-5z"/>
<path fill="#f5f3f0" d="M357 264h5v5h-5z"/>
<path fill="#d0d1d1" d="M362 264h5v5h-5z"/>
<path fill="#d6d6d6" d="M367 264h5v5h-5z"/>
<path fill="#dbdbdc" d="M372 264h5v5h-5z"/>
<path fill="#e2e1e1" d="M377 264h5v5h-5z"/>
<path fill="#d7d6d5" d="M382 264h5v5h-5z"/>
<path fill="#d5d6d7" d="M387 264h5v5h-5z"/>
<path fill="#d4d5d5" d="M392 264h5v5h-5z"/>
<path fill="#ddddde" d="M397 264h5v5h-5z"/>
<path fill="#dededd" d="M402 264h5v5h-5z"/>
<path fill="#e4e6e8" d="M407 264h5v5h-5z"/>
<path fill="#fefefe" d="M412 264h5v5h-5z"/>
<path fill="#fcfaf8" d="M657 264h5v5h-5z"/>
<path fill="#d5d3d0" d="M662 264h5v5h-5z"/>
<path fill="#dddddd" d="M667 264h5v5h-5z"/>
<path fill="#e0dfde" d="M672 264h5v5h-5z"/>
<path fill="#d6d7d6" d="M677 264h5v5h-5z"/>
<path fill="#e1e0df" d="M682 264h5v5h-5z"/>
<path fill="#dddede" d="M687 264h5v5h-5z"/>
<path fill="#dbd8d6" d="M692 264h5v5h-5z"/>
<path fill="#dfe2e4" d="M697 264h5v5h-5z"/>
<path fill="#fef2d7" d="M317 269h5v5h-5z"/>
<path fill="#facd63" d="M322 269h5v5h-5z"/>
<path fill="#f8c757" d="M327 269h5v5h-5z"/>
<path fill="#f6c355" d="M332 269h5v5h-5z"/>
<path fill="#fbe6b9" d="M337 269h5v5h-5z"/>
<path fill="#f3f0ed" d="M357 269h5v5h-5z"/>
<path fill="#d1d3d3" d="M362 269h5v5h-5z"/>
<path fill="#c2bfbd" d="M367 269h5v5h-5z"/>
<path fill="#babcbe" d="M372 269h5v5h-5z"/>
<path fill="#cbcaca" d="M377 269h5v5h-5z"/>
<path fill="#bbbab9" d="M382 269h5v5h-5z"/>
<path fill="#b8babc" d="M387 269h5v5h-5z"/>
<path fill="#bfc0bf" d="M392 269h5v5h-5z"/>
<path fill="#c4c4c4" d="M397 269h5v5h-5z"/>
<path fill="#b8b7b8" d="M402 269h5v5h-5z"/>
<path fill="#cacdd0" d="M407 269h5v5h-5z"/>
<path fill="#fafbfd" d="M412 269h5v5h-5z"/>
<path fill="#fbfaf8" d="M657 269h5v5h-5z"/>
<path fill="#d9d7d4" d="M662 269h5v5h-5z"/>
<path fill="#d3d4d3" d="M667 269h5v5h-5z"/>
<path fill="#dedcda" d="M672 269h5v5h-5z"/>
<path fill="#cfcfcf" d="M677 269h5v5h-5z"/>
<path fill="#e6e7e6" d="M682 269h5v5h-5z"/>
<path fill="#dbdcdc" d="M687 269h5v5h-5z"/>
<path fill="#dedcd9" d="M692 269h5v5h-5z"/>
<path fill="#dfe1e3" d="M697 269h5v5h-5z"/>
<path fill="#fef7e8" d="M317 274h5v5h-5z"/>
<path fill="#fbe1a4" d="M322 274h5v5h-5z"/>
<path fill="#fadc9d" d="M327 274h5v5h-5z"/>
<path fill="#f9db9d" d="M332 274h5v5h-5z"/>
<path fill="#fdf0d8" d="M337 274h5v5h-5z"/>
<path fill="#fcfbf9" d="M357 274h5v5h-5z"/>
<path fill="#e8e8e7" d="M362 274h5v5h-5z"/>
<path fill="#eff0f0" d="M367 274h5v5h-5z"/>
<path fill="#ececec" d="M372 274h5v5h-5z"/>
<path fill="#f0efef" d="M377 274h5v5h-5z"/>
<path fill="#eaeaeb" d="M382 274h5v5h-5z"/>
<path fill="#eeeeee" d="M387 274h5v5h-5z"/>
<path fill="#ebebeb" d="M392 274h5v5h-5z"/>
<path fill="#e9e9e9" d="M397 274h5v5h-5z"/>
<path fill="#d8d7d6" d="M402 274h5v5h-5z"/>
<path fill="#e9ecee" d="M407 274h5v5h-5z"/>
<path fill="#f9f8f8" d="M662 274h5v5h-5z"/>
<path fill="#f8f9f9" d="M667 274h5v5h-5z"/>
<path fill="#fdfdfd" d="M672 274h5v5h-5z"/>
<path fill="#f9f9f9" d="M677 274h5v5h-5z"/>
<path fill="#fafafa" d="M682 274h5v5h-5z"/>
<path fill="#f6f6f6" d="M687 274h5v5h-5z"/>
<path fill="#f8f7f7" d="M692 274h5v5h-5z"/>
<path fill="#fbfbfc" d="M697 274h5v5h-5z"/>
<path fill="#fffefd" d="M327 279h5v5h-5z"/>
<path fill="#fffefd" d="M332 279h5v5h-5z"/>
<path fill="#fdfdfd" d="M402 279h5v5h-5z"/>
<path fill="#fbfbfa" d="M314 289h3v5h-3z"/>
<path fill="#fbfbfa" d="M317 289h5v5h-5z"/>
<path fill="#fbfbfa" d="M322 289h5v5h-5z"/>
<path fill="#fbfbfa" d="M327 289h5v5h-5z"/>
<path fill="#fbfbfa" d="M332 289h5v5h-5z"/>
<path fill="#fbfbfa" d="M337 289h5v5h-5z"/>
<path fill="#fbfbfa" d="M342 289h5v5h-5z"/>
<path fill="#fbfbfa" d="M347 289h5v5h-5z"/>
<path fill="#fbfbfa" d="M352 289h5v5h-5z"/>
<path fill="#fbfbfa" d="M357 289h5v5h-5z"/>
<path fill="#fbfbfa" d="M362 289h5v5h-5z"/>
<path fill="#fbfbfa" d="M367 289h5v5h-5z"/>
<path fill="#fbfbfa" d="M372 289h5v5h-5z"/>
<path fill="#fbfbfa" d="M377 289h5v5h-5z"/>
<path fill="#fbfbfa" d="M382 289h5v5h-5z"/>
<path fill="#fbfbfa" d="M387 289h5v5h-5z"/>
<path fill="#fbfbfa" d="M392 289h5v5h-5z"/>
<path fill="#fbfbfa" d="M397 289h5v5h-5z"/>
<path fill="#fbfbfa" d="M402 289h5v5h-5z"/>
<path fill="#fbfbfa" d="M407 289h5v5h-5z"/>
<path fill="#fbfbfa" d="M412 289h5v5h-5z"/>
<path fill="#fbfbfa" d="M417 289h5v5h-5z"/>
<path fill="#fbfbfa" d="M422 289h5v5h-5z"/>
<path fill="#fbfbfa" d="M427 289h5v5h-5z"/>
<path fill="#fbfbfa" d="M432 289h5v5h-5z"/>
<path fill="#fbfbfa" d="M437 289h5v5h-5z"/>
<path fill="#fbfbfa" d="M442 289h5v5h-5z"/>
<path fill="#fbfbfa" d="M447 289h5v5h-5z"/>
<path fill="#fbfbfa" d="M452 289h5v5h-5z"/>
<path fill="#fbfbfa" d="M457 289h5v5h-5z"/>
<path fill="#fbfbfa" d="M462 289h5v5h-5z"/>
<path fill="#fbfbfa" d="M467 289h5v5h-5z"/>
<path fill="#fbfbfa" d="M472 289h5v5h-5z"/>
<path fill="#fbfbfa" d="M477 289h5v5h-5z"/>
<path fill="#fbfbfa" d="M482 289h5v5h-5z"/>
<path fill="#fbfbfa" d="M487 289h5v5h-5z"/>
<path fill="#fbfbfa" d="M492 289h5v5h-5z"/>
<path fill="#fbfbfa" d="M497 289h5v5h-5z"/>
<path fill="#fbfbfa" d="M502 289h5v5h-5z"/>
<path fill="#fbfbfa" d="M507 289h5v5h-5z"/>
<path fill="#fbfbfa" d="M512 289h5v5h-5z"/>
<path fill="#fbfbfa" d="M517 289h5v5h-5z"/>
<path fill="#fbfbfa" d="M522 289h5v5h-5z"/>
<path fill="#fbfbfa" d="M527 289h5v5h-5z"/>
<path fill="#fbfbfa" d="M532 289h5v5h-5z"/>
<path fill="#fbfbfa" d="M537 289h5v5h-5z"/>
<path fill="#fbfbfa" d="M542 289h5v5h-5z"/>
<path fill="#fbfbfa" d="M547 289h5v5h-5z"/>
<path fill="#fbfbfa" d="M552 289h5v5h-5z"/>
<path fill="#fbfbfa" d="M557 289h5v5h-5z"/>
<path fill="#fbfbfa" d="M562 289h5v5h-5z"/>
<path fill="#fbfbfa" d="M567 289h5v5h-5z"/>
<path fill="#fbfbfa" d="M572 289h5v5h-5z"/>
<path fill="#fbfbfa" d="M577 289h5v5h-5z"/>
<path fill="#fbfbfa" d="M582 289h5v5h-5z"/>
<path fill="#fbfbfa" d="M587 289h5v5h-5z"/>
<path fill="#fbfbfa" d="M592 289h5v5h-5z"/>
<path fill="#fbfbfa" d="M597 289h5v5h-5z"/>
<path fill="#fbfbfa" d="M602 289h5v5h-5z"/>
<path fill="#fbfbfa" d="M607 289h5v5h-5z"/>
<path fill="#fbfbfa" d="M612 289h5v5h-5z"/>
<path fill="#fbfbfa" d="M617 289h5v5h-5z"/>
<path fill="#fbfbfa" d="M622 289h5v5h-5z"/>
<path fill="#fbfbfa" d="M627 289h5v5h-5z"/>
<path fill="#fbfbfa" d="M632 289h5v5h-5z"/>
<path fill="#fbfbfa" d="M637 289h5v5h-5z"/>
<path fill="#fbfbfa" d="M642 289h5v5h-5z"/>
<path fill="#fbfbfa" d="M647 289h5v5h-5z"/>
<path fill="#fbfbfa" d="M652 289h5v5h-5z"/>
<path fill="#fbfbfa" d="M657 289h5v5h-5z"/>
<path fill="#fbfbfa" d="M662 289h5v5h-5z"/>
<path fill="#fbfbfa" d="M667 289h5v5h-5z"/>
<path fill="#fbfbfa" d="M672 289h5v5h-5z"/>
<path fill="#fbfbfa" d="M677 289h5v5h-5z"/>
<path fill="#fbfbfa" d="M682 289h5v5h-5z"/>
<path fill="#fbfbfa" d="M687 289h5v5h-5z"/>
<path fill="#fbfbfa" d="M692 289h5v5h-5z"/>
<path fill="#fbfbfa" d="M697 289h5v5h-5z"/>
<path fill="#fbfbfa" d="M702 289h5v5h-5z"/>
<path fill="#fbfbfa" d="M707 289h5v5h-5z"/>
<path fill="#fbfbfa" d="M712 289h5v5h-5z"/>
<path fill="#fbfbfa" d="M717 289h5v5h-5z"/>
<path fill="#fbfbfa" d="M722 289h5v5h-5z"/>
<path fill="#fbfbfa" d="M727 289h5v5h-5z"/>
<path fill="#fbfbfa" d="M732 289h5v5h-5z"/>
<path fill="#fbfbfa" d="M737 289h5v5h-5z"/>
<path fill="#fefbf4" d="M317 299h5v5h-5z"/>
<path fill="#fdf0d6" d="M322 299h5v5h-5z"/>
<path fill="#fef9ee" d="M327 299h5v5h-5z"/>
<path fill="#fffdfa" d="M332 299h5v5h-5z"/>
<path fill="#fef3d8" d="M317 304h5v5h-5z"/>
<path fill="#fad06b" d="M322 304h5v5h-5z"/>
<path fill="#fad680" d="M327 304h5v5h-5z"/>
<path fill="#fbdb91" d="M332 304h5v5h-5z"/>
<path fill="#fdf0d3" d="M337 304h5v5h-5z"/>
<path fill="#fcfbf9" d="M357 304h5v5h-5z"/>
<path fill="#e8e8e8" d="M362 304h5v5h-5z"/>
<path fill="#f2f3f4" d="M367 304h5v5h-5z"/>
<path fill="#fafafa" d="M372 304h5v5h-5z"/>
<path fill="#fcfcfc" d="M377 304h5v5h-5z"/>
<path fill="#fbfbfb" d="M382 304h5v5h-5z"/>
<path fill="#fcfcfc" d="M387 304h5v5h-5z"/>
<path fill="#fbfbfb" d="M392 304h5v5h-5z"/>
<path fill="#fafafa" d="M397 304h5v5h-5z"/>
<path fill="#fcfcfc" d="M402 304h5v5h-5z"/>
<path fill="#fafbfb" d="M407 304h5v5h-5z"/>
<path fill="#fbfbfb" d="M412 304h5v5h-5z"/>
<path fill="#f8f8f8" d="M417 304h5v5h-5z"/>
<path fill="#f7f8f8" d="M422 304h5v5h-5z"/>
<path fill="#fcfcfc" d="M427 304h5v5h-5z"/>
<path fill="#fefefd" d="M657 304h5v5h-5z"/>
<path fill="#eceae9" d="M662 304h5v5h-5z"/>
<path fill="#efefee" d="M667 304h5v5h-5z"/>
<path fill="#f0f0ef" d="M672 304h5v5h-5z"/>
<path fill="#ececec" d="M677 304h5v5h-5z"/>
<path fill="#ecebea" d="M682 304h5v5h-5z"/>
<path fill="#edeeee" d="M687 304h5v5h-5z"/>
<path fill="#ecebe9" d="M692 304h5v5h-5z"/>
<path fill="#f1f2f4" d="M697 304h5v5h-5z"/>
<path fill="#fef3d7" d="M317 309h5v5h-5z"/>
<path fill="#fbd166" d="M322 309h5v5h-5z"/>
<path fill="#f9ca5a" d="M327 309h5v5h-5z"/>
<path fill="#f8c658" d="M332 309h5v5h-5z"/>
<path fill="#fce7bb" d="M337 309h5v5h-5z"/>
<path fill="#f3f0ec" d="M357 309h5v5h-5z"/>
<path fill="#d1d3d3" d="M362 309h5v5h-5z"/>
<path fill="#c9c8c7" d="M367 309h5v5h-5z"/>
<path fill="#cacacb" d="M372 309h5v5h-5z"/>
<path fill="#cacbcb" d="M377 309h5v5h-5z"/>
<path fill="#d3d2d3" d="M382 309h5v5h-5z"/>
<path fill="#d7d7d7" d="M387 309h5v5h-5z"/>
<path fill="#c6c7c8" d="M392 309h5v5h-5z"/>
<path fill="#c7c7c7" d="M397 309h5v5h-5z"/>
<path fill="#c9c7c6" d="M402 309h5v5h-5z"/>
<path fill="#c2c3c4" d="M407 309h5v5h-5z"/>
<path fill="#cacaca" d="M412 309h5v5h-5z"/>
<path fill="#c6c5c4" d="M417 309h5v5h-5z"/>
<path fill="#c4c5c6" d="M422 309h5v5h-5z"/>
<path fill="#d9dcdf" d="M427 309h5v5h-5z"/>
<path fill="#fdfefe" d="M432 309h5v5h-5z"/>
<path fill="#faf8f6" d="M657 309h5v5h-5z"/>
<path fill="#d1cfcc" d="M662 309h5v5h-5z"/>
<path fill="#d4d4d4" d="M667 309h5v5h-5z"/>
<path fill="#d9d7d5" d="M672 309h5v5h-5z"/>
<path fill="#cecfcf" d="M677 309h5v5h-5z"/>
<path fill="#e2e2e2" d="M682 309h5v5h-5z"/>
<path fill="#dcdede" d="M687 309h5v5h-5z"/>
<path fill="#dad7d4" d="M692 309h5v5h-5z"/>
<path fill="#d9dcde" d="M697 309h5v5h-5z"/>
<path fill="#fef3d9" d="M317 314h5v5h-5z"/>
<path fill="#f9ce6a" d="M322 314h5v5h-5z"/>
<path fill="#f7c85e" d="M327 314h5v5h-5z"/>
<path fill="#f6c55d" d="M332 314h5v5h-5z"/>
<path fill="#fbe7bd" d="M337 314h5v5h-5z"/>
<path fill="#f5f3ef" d="M357 314h5v5h-5z"/>
<path fill="#cfd0cf" d="M362 314h5v5h-5z"/>
<path fill="#d0d0cf" d="M367 314h5v5h-5z"/>
<path fill="#cccccb" d="M372 314h5v5h-5z"/>
<path fill="#cacbcb" d="M377 314h5v5h-5z"/>
<path fill="#d3d3d3" d="M382 314h5v5h-5z"/>
<path fill="#cbcaca" d="M387 314h5v5h-5z"/>
<path fill="#cbced0" d="M392 314h5v5h-5z"/>
<path fill="#d7d6d7" d="M397 314h5v5h-5z"/>
<path fill="#cbc9c8" d="M402 314h5v5h-5z"/>
<path fill="#cdcecf" d="M407 314h5v5h-5z"/>
<path fill="#d7d7d8" d="M412 314h5v5h-5z"/>
<path fill="#cfcece" d="M417 314h5v5h-5z"/>
<path fill="#cecece" d="M422 314h5v5h-5z"/>
<path fill="#d3d5d8" d="M427 314h5v5h-5z"/>
<path fill="#fcfdfe" d="M432 314h5v5h-5z"/>
<path fill="#fdfdfb" d="M657 314h5v5h-5z"/>
<path fill="#e5e3e1" d="M662 314h5v5h-5z"/>
<path fill="#e0e1e1" d="M667 314h5v5h-5z"/>
<path fill="#edeceb" d="M672 314h5v5h-5z"/>
<path fill="#dfdfde" d="M677 314h5v5h-5z"/>
<path fill="#edecec" d="M682 314h5v5h-5z"/>
<path fill="#e0e1e0" d="M687 314h5v5h-5z"/>
<path fill="#e5e4e2" d="M692 314h5v5h-5z"/>
<path fill="#ebecee" d="M697 314h5v5h-5z"/>
<path fill="#fffcf6" d="M317 319h5v5h-5z"/>
<path fill="#fdf2d9" d="M322 319h5v5h-5z"/>
<path fill="#fdf0d6" d="M327 319h5v5h-5z"/>
<path fill="#fdf0d6" d="M332 319h5v5h-5z"/>
<path fill="#fef9ef" d="M337 319h5v5h-5z"/>
<path fill="#f9f9f9" d="M362 319h5v5h-5z"/>
<path fill="#fcfcfc" d="M367 319h5v5h-5z"/>
<path fill="#fbfbfb" d="M372 319h5v5h-5z"/>
<path fill="#fcfcfc" d="M377 319h5v5h-5z"/>
<path fill="#fbfbfb" d="M382 319h5v5h-5z"/>
<path fill="#fafafa" d="M387 319h5v5h-5z"/>
<path fill="#fbfcfc" d="M392 319h5v5h-5z"/>
<path fill="#fcfcfc" d="M397 319h5v5h-5z"/>
<path fill="#fcfcfc" d="M402 319h5v5h-5z"/>
<path fill="#fbfbfb" d="M407 319h5v5h-5z"/>
<path fill="#fcfcfc" d="M412 319h5v5h-5z"/>
<path fill="#fcfcfc" d="M417 319h5v5h-5z"/>
<path fill="#fafafa" d="M422 319h5v5h-5z"/>
<path fill="#fbfbfc" d="M427 319h5v5h-5z"/>
<path fill="#fefefe" d="M687 319h5v5h-5z"/>
<path fill="#fefefe" d="M692 319h5v5h-5z"/>
<path fill="#fbfbfa" d="M314 334h3v5h-3z"/>
<path fill="#fbfbfa" d="M317 334h5v5h-5z"/>
<path fill="#fbfbfa" d="M322 334h5v5h-5z"/>
<path fill="#fbfbfa" d="M327 334h5v5h-5z"/>
<path fill="#fbfbfa" d="M332 334h5v5h-5z"/>
<path fill="#fbfbfa" d="M337 334h5v5h-5z"/>
<path fill="#fbfbfa" d="M342 334h5v5h-5z"/>
<path fill="#fbfbfa" d="M347 334h5v5h-5z"/>
<path fill="#fbfbfa" d="M352 334h5v5h-5z"/>
<path fill="#fbfbfa" d="M357 334h5v5h-5z"/>
<path fill="#fbfbfa" d="M362 334h5v5h-5z"/>
<path fill="#fbfbfa" d="M367 334h5v5h-5z"/>
<path fill="#fbfbfa" d="M372 334h5v5h-5z"/>
<path fill="#fbfbfa" d="M377 334h5v5h-5z"/>
<path fill="#fbfbfa" d="M382 334h5v5h-5z"/>
<path fill="#fbfbfa" d="M387 334h5v5h-5z"/>
<path fill="#fbfbfa" d="M392 334h5v5h-5z"/>
<path fill="#fbfbfa" d="M397 334h5v5h-5z"/>
<path fill="#fbfbfa" d="M402 334h5v5h-5z"/>
<path fill="#fbfbfa" d="M407 334h5v5h-5z"/>
<path fill="#fbfbfa" d="M412 334h5v5h-5z"/>
<path fill="#fbfbfa" d="M417 334h5v5h-5z"/>
<path fill="#fbfbfa" d="M422 334h5v5h-5z"/>
<path fill="#fbfbfa" d="M427 334h5v5h-5z"/>
<path fill="#fbfbfa" d="M432 334h5v5h-5z"/>
<path fill="#fbfbfa" d="M437 334h5v5h-5z"/>
<path fill="#fbfbfa" d="M442 334h5v5h-5z"/>
<path fill="#fbfbfa" d="M447 334h5v5h-5z"/>
<path fill="#fbfbfa" d="M452 334h5v5h-5z"/>
<path fill="#fbfbfa" d="M457 334h5v5h-5z"/>
<path fill="#fbfbfa" d="M462 334h5v5h-5z"/>
<path fill="#fbfbfa" d="M467 334h5v5h-5z"/>
<path fill="#fbfbfa" d="M472 334h5v5h-5z"/>
<path fill="#fbfbfa" d="M477 334h5v5h-5z"/>
<path fill="#fbfbfa" d="M482 334h5v5h-5z"/>
<path fill="#fbfbfa" d="M487 334h5v5h-5z"/>
<path fill="#fbfbfa" d="M492 334h5v5h-5z"/>
<path fill="#fbfbfa" d="M497 334h5v5h-5z"/>
<path fill="#fbfbfa" d="M502 334h5v5h-5z"/>
<path fill="#fbfbfa" d="M507 334h5v5h-5z"/>
<path fill="#fbfbfa" d="M512 334h5v5h-5z"/>
<path fill="#fbfbfa" d="M517 334h5v5h-5z"/>
<path fill="#fbfbfa" d="M522 334h5v5h-5z"/>
<path fill="#fbfbfa" d="M527 334h5v5h-5z"/>
<path fill="#fbfbfa" d="M532 334h5v5h-5z"/>
<path fill="#fbfbfa" d="M537 334h5v5h-5z"/>
<path fill="#fbfbfa" d="M542 334h5v5h-5z"/>
<path fill="#fbfbfa" d="M547 334h5v5h-5z"/>
<path fill="#fbfbfa" d="M552 334h5v5h-5z"/>
<path fill="#fbfbfa" d="M557 334h5v5h-5z"/>
<path fill="#fbfbfa" d="M562 334h5v5h-5z"/>
<path fill="#fbfbfa" d="M567 334h5v5h-5z"/>
<path fill="#fbfbfa" d="M572 334h5v5h-5z"/>
<path fill="#fbfbfa" d="M577 334h5v5h-5z"/>
<path fill="#fbfbfa" d="M582 334h5v5h-5z"/>
<path fill="#fbfbfa" d="M587 334h5v5h-5z"/>
<path fill="#fbfbfa" d="M592 334h5v5h-5z"/>
<path fill="#fbfbfa" d="M597 334h5v5h-5z"/>
<path fill="#fbfbfa" d="M602 334h5v5h-5z"/>
<path fill="#fbfbfa" d="M607 334h5v5h-5z"/>
<path fill="#fbfbfa" d="M612 334h5v5h-5z"/>
<path fill="#fbfbfa" d="M617 334h5v5h-5z"/>
<path fill="#fbfbfa" d="M622 334h5v5h-5z"/>
<path fill="#fbfbfa" d="M627 334h5v5h-5z"/>
<path fill="#fbfbfa" d="M632 334h5v5h-5z"/>
<path fill="#fbfbfa" d="M637 334h5v5h-5z"/>
<path fill="#fbfbfa" d="M642 334h5v5h-5z"/>
<path fill="#fbfbfa" d="M647 334h5v5h-5z"/>
<path fill="#fbfbfa" d="M652 334h5v5h-5z"/>
<path fill="#fbfbfa" d="M657 334h5v5h-5z"/>
<path fill="#fbfbfa" d="M662 334h5v5h-5z"/>
<path fill="#fbfbfa" d="M667 334h5v5h-5z"/>
<path fill="#fbfbfa" d="M672 334h5v5h-5z"/>
<path fill="#fbfbfa" d="M677 334h5v5h-5z"/>
<path fill="#fbfbfa" d="M682 334h5v5h-5z"/>
<path fill="#fbfbfa" d="M687 334h5v5h-5z"/>
<path fill="#fbfbfa" d="M692 334h5v5h-5z"/>
<path fill="#fbfbfa" d="M697 334h5v5h-5z"/>
<path fill="#fbfbfa" d="M702 334h5v5h-5z"/>
<path fill="#fbfbfa" d="M707 334h5v5h-5z"/>
<path fill="#fbfbfa" d="M712 334h5v5h-5z"/>
<path fill="#fbfbfa" d="M717 334h5v5h-5z"/>
<path fill="#fbfbfa" d="M722 334h5v5h-5z"/>
<path fill="#fbfbfa" d="M727 334h5v5h-5z"/>
<path fill="#fbfbfa" d="M732 334h5v5h-5z"/>
<path fill="#fbfbfa" d="M737 334h5v5h-5z"/>
<path fill="#fffefd" d="M322 339h5v5h-5z"/>
<path fill="#fef6e5" d="M317 344h5v5h-5z"/>
<path fill="#fadea0" d="M322 344h5v5h-5z"/>
<path fill="#fcecc9" d="M327 344h5v5h-5z"/>
<path fill="#fef5e0" d="M332 344h5v5h-5z"/>
<path fill="#fffbf3" d="M337 344h5v5h-5z"/>
<path fill="#fdfdfd" d="M362 344h5v5h-5z"/>
<path fill="#fdfdfd" d="M447 344h5v5h-5z"/>
<path fill="#fdfdfd" d="M452 344h5v5h-5z"/>
<path fill="#fefefe" d="M477 344h5v5h-5z"/>
<path fill="#fefefe" d="M482 344h5v5h-5z"/>
<path fill="#fcfcfb" d="M662 344h5v5h-5z"/>
<path fill="#fbfbfb" d="M667 344h5v5h-5z"/>
<path fill="#fbfbfb" d="M672 344h5v5h-5z"/>
<path fill="#fcfcfc" d="M677 344h5v5h-5z"/>
<path fill="#fcfcfc" d="M682 344h5v5h-5z"/>
<path fill="#fdfdfc" d="M687 344h5v5h-5z"/>
<path fill="#fdfdfe" d="M692 344h5v5h-5z"/>
<path fill="#fef3d7" d="M317 349h5v5h-5z"/>
<path fill="#fbd167" d="M322 349h5v5h-5z"/>
<path fill="#face64" d="M327 349h5v5h-5z"/>
<path fill="#f9ce69" d="M332 349h5v5h-5z"/>
<path fill="#fceac2" d="M337 349h5v5h-5z"/>
<path fill="#f7f5f2" d="M357 349h5v5h-5z"/>
<path fill="#d5d4d5" d="M362 349h5v5h-5z"/>
<path fill="#dfe0e1" d="M367 349h5v5h-5z"/>
<path fill="#eae9e9" d="M372 349h5v5h-5z"/>
<path fill="#eeeeee" d="M377 349h5v5h-5z"/>
<path fill="#ebebec" d="M382 349h5v5h-5z"/>
<path fill="#f1f2f2" d="M387 349h5v5h-5z"/>
<path fill="#ececeb" d="M392 349h5v5h-5z"/>
<path fill="#e7e7e7" d="M397 349h5v5h-5z"/>
<path fill="#eceded" d="M402 349h5v5h-5z"/>
<path fill="#e9e9e9" d="M407 349h5v5h-5z"/>
<path fill="#ececec" d="M412 349h5v5h-5z"/>
<path fill="#e9e9e9" d="M417 349h5v5h-5z"/>
<path fill="#e0e0e0" d="M422 349h5v5h-5z"/>
<path fill="#eaebeb" d="M427 349h5v5h-5z"/>
<path fill="#fbfcfd" d="M432 349h5v5h-5z"/>
<path fill="#fefefe" d="M437 349h5v5h-5z"/>
<path fill="#f3f1ee" d="M442 349h5v5h-5z"/>
<path fill="#cececd" d="M447 349h5v5h-5z"/>
<path fill="#d3d4d4" d="M452 349h5v5h-5z"/>
<path fill="#e1e3e4" d="M457 349h5v5h-5z"/>
<path fill="#ebecec" d="M462 349h5v5h-5z"/>
<path fill="#eaeae9" d="M467 349h5v5h-5z"/>
<path fill="#f3f4f5" d="M472 349h5v5h-5z"/>
<path fill="#dedbda" d="M477 349h5v5h-5z"/>
<path fill="#d9d9da" d="M482 349h5v5h-5z"/>
<path fill="#e8e9e9" d="M487 349h5v5h-5z"/>
<path fill="#ebebeb" d="M492 349h5v5h-5z"/>
<path fill="#e9e8e8" d="M497 349h5v5h-5z"/>
<path fill="#e9eaea" d="M502 349h5v5h-5z"/>
<path fill="#edecec" d="M507 349h5v5h-5z"/>
<path fill="#eff0f1" d="M512 349h5v5h-5z"/>
<path fill="#fefdfd" d="M657 349h5v5h-5z"/>
<path fill="#e7e5e2" d="M662 349h5v5h-5z"/>
<path fill="#dfdedd" d="M667 349h5v5h-5z"/>
<path fill="#d7d6d5" d="M672 349h5v5h-5z"/>
<path fill="#e0e0df" d="M677 349h5v5h-5z"/>
<path fill="#e0dfde" d="M682 349h5v5h-5z"/>
<path fill="#e1e0de" d="M687 349h5v5h-5z"/>
<path fill="#e5e7e9" d="M692 349h5v5h-5z"/>
<path fill="#fef3d7" d="M317 354h5v5h-5z"/>
<path fill="#face64" d="M322 354h5v5h-5z"/>
<path fill="#f8c858" d="M327 354h5v5h-5z"/>
<path fill="#f6c456" d="M332 354h5v5h-5z"/>
<path fill="#fbe6ba" d="M337 354h5v5h-5z"/>
<path fill="#f2efec" d="M357 354h5v5h-5z"/>
<path fill="#d2d3d5" d="M362 354h5v5h-5z"/>
<path fill="#c6c3c1" d="M367 354h5v5h-5z"/>
<path fill="#c1c3c3" d="M372 354h5v5h-5z"/>
<path fill="#b9bbbc" d="M377 354h5v5h-5z"/>
<path fill="#cfcfcf" d="M382 354h5v5h-5z"/>
<path fill="#cacbcb" d="M387 354h5v5h-5z"/>
<path fill="#bebebe" d="M392 354h5v5h-5z"/>
<path fill="#c4c4c3" d="M397 354h5v5h-5z"/>
<path fill="#bebebb" d="M402 354h5v5h-5z"/>
<path fill="#b6b7b8" d="M407 354h5v5h-5z"/>
<path fill="#c2c3c4" d="M412 354h5v5h-5z"/>
<path fill="#c7c6c4" d="M417 354h5v5h-5z"/>
<path fill="#bcbebf" d="M422 354h5v5h-5z"/>
<path fill="#c5c5c7" d="M427 354h5v5h-5z"/>
<path fill="#eef0f2" d="M432 354h5v5h-5z"/>
<path fill="#ebebeb" d="M437 354h5v5h-5z"/>
<path fill="#e9e6e1" d="M442 354h5v5h-5z"/>
<path fill="#b9b9b8" d="M447 354h5v5h-5z"/>
<path fill="#babbba" d="M452 354h5v5h-5z"/>
<path fill="#bcbfbf" d="M457 354h5v5h-5z"/>
<path fill="#bebebd" d="M462 354h5v5h-5z"/>
<path fill="#bfc0c1" d="M467 354h5v5h-5z"/>
<path fill="#d8dcdf" d="M472 354h5v5h-5z"/>
<path fill="#d3d1d1" d="M477 354h5v5h-5z"/>
<path fill="#d6d4d1" d="M482 354h5v5h-5z"/>
<path fill="#b4b3b4" d="M487 354h5v5h-5z"/>
<path fill="#c0c0c1" d="M492 354h5v5h-5z"/>
<path fill="#c4c3c2" d="M497 354h5v5h-5z"/>
<path fill="#c4c4c2" d="M502 354h5v5h-5z"/>
<path fill="#bdbfbf" d="M507 354h5v5h-5z"/>
<path fill="#cccfd2" d="M512 354h5v5h-5z"/>
<path fill="#fbfcfd" d="M517 354h5v5h-5z"/>
<path fill="#eae8e6" d="M662 354h5v5h-5z"/>
<path fill="#e1dfde" d="M667 354h5v5h-5z"/>
<path fill="#d2d1ce" d="M672 354h5v5h-5z"/>
<path fill="#d6d8d8" d="M677 354h5v5h-5z"/>
<path fill="#e0e0dd" d="M682 354h5v5h-5z"/>
<path fill="#deddda" d="M687 354h5v5h-5z"/>
<path fill="#dcdee0" d="M692 354h5v5h-5z"/>
<path fill="#fef5e1" d="M317 359h5v5h-5z"/>
<path fill="#fad88a" d="M322 359h5v5h-5z"/>
<path fill="#f8d381" d="M327 359h5v5h-5z"/>
<path fill="#f7d180" d="M332 359h5v5h-5z"/>
<path fill="#fceccc" d="M337 359h5v5h-5z"/>
<path fill="#f9f8f6" d="M357 359h5v5h-5z"/>
<path fill="#dddcdc" d="M362 359h5v5h-5z"/>
<path fill="#e4e5e5" d="M367 359h5v5h-5z"/>
<path fill="#e0dfdf" d="M372 359h5v5h-5z"/>
<path fill="#e3e3e3" d="M377 359h5v5h-5z"/>
<path fill="#e2e2e3" d="M382 359h5v5h-5z"/>
<path fill="#dfdede" d="M387 359h5v5h-5z"/>
<path fill="#e0e1e2" d="M392 359h5v5h-5z"/>
<path fill="#eae9e9" d="M397 359h5v5h-5z"/>
<path fill="#e6e6e4" d="M402 359h5v5h-5z"/>
<path fill="#dfe0e0" d="M407 359h5v5h-5z"/>
<path fill="#e8e9e9" d="M412 359h5v5h-5z"/>
<path fill="#e9e9e8" d="M417 359h5v5h-5z"/>
<path fill="#e0e0e0" d="M422 359h5v5h-5z"/>
<path fill="#dfdfdf" d="M427 359h5v5h-5z"/>
<path fill="#f6f8f9" d="M432 359h5v5h-5z"/>
<path fill="#fdfdfd" d="M437 359h5v5h-5z"/>
<path fill="#f7f5f3" d="M442 359h5v5h-5z"/>
<path fill="#dcdcdc" d="M447 359h5v5h-5z"/>
<path fill="#e1e2e2" d="M452 359h5v5h-5z"/>
<path fill="#e1e1e0" d="M457 359h5v5h-5z"/>
<path fill="#dededd" d="M462 359h5v5h-5z"/>
<path fill="#c4c3c1" d="M467 359h5v5h-5z"/>
<path fill="#dee2e5" d="M472 359h5v5h-5z"/>
<path fill="#e6e4e2" d="M477 359h5v5h-5z"/>
<path fill="#dfe0e1" d="M482 359h5v5h-5z"/>
<path fill="#e5e4e3" d="M487 359h5v5h-5z"/>
<path fill="#e5e6e6" d="M492 359h5v5h-5z"/>
<path fill="#e9e8e8" d="M497 359h5v5h-5z"/>
<path fill="#e8e8e7" d="M502 359h5v5h-5z"/>
<path fill="#e0e0df" d="M507 359h5v5h-5z"/>
<path fill="#e6e8ea" d="M512 359h5v5h-5z"/>
<path fill="#f9f8f8" d="M662 359h5v5h-5z"/>
<path fill="#f8f7f7" d="M667 359h5v5h-5z"/>
<path fill="#f2f2f0" d="M672 359h5v5h-5z"/>
<path fill="#f4f4f4" d="M677 359h5v5h-5z"/>
<path fill="#f1f0ef" d="M682 359h5v5h-5z"/>
<path fill="#f2f1f1" d="M687 359h5v5h-5z"/>
<path fill="#f6f7f8" d="M692 359h5v5h-5z"/>
<path fill="#fffcf8" d="M322 364h5v5h-5z"/>
<path fill="#fffcf7" d="M327 364h5v5h-5z"/>
<path fill="#fffcf7" d="M332 364h5v5h-5z"/>
<path fill="#fffefc" d="M337 364h5v5h-5z"/>
<path fill="#fefefd" d="M462 364h5v5h-5z"/>
<path fill="#f5f5f4" d="M467 364h5v5h-5z"/>
<path fill="#fbfcfc" d="M472 364h5v5h-5z"/>
<path fill="#fcfcfc" d="M314 374h3v5h-3z"/>
<path fill="#fcfcfc" d="M317 374h5v5h-5z"/>
<path fill="#fcfcfc" d="M322 374h5v5h-5z"/>
<path fill="#fcfcfc" d="M327 374h5v5h-5z"/>
<path fill="#fcfcfc" d="M332 374h5v5h-5z"/>
<path fill="#fcfcfc" d="M337 374h5v5h-5z"/>
<path fill="#fcfcfc" d="M342 374h5v5h-5z"/>
<path fill="#fcfcfc" d="M347 374h5v5h-5z"/>
<path fill="#fcfcfc" d="M352 374h5v5h-5z"/>
<path fill="#fcfcfc" d="M357 374h5v5h-5z"/>
<path fill="#fcfcfc" d="M362 374h5v5h-5z"/>
<path fill="#fcfcfc" d="M367 374h5v5h-5z"/>
<path fill="#fcfcfc" d="M372 374h5v5h-5z"/>
<path fill="#fcfcfc" d="M377 374h5v5h-5z"/>
<path fill="#fcfcfc" d="M382 374h5v5h-5z"/>
<path fill="#fcfcfc" d="M387 374h5v5h-5z"/>
<path fill="#fcfcfc" d="M392 374h5v5h-5z"/>
<path fill="#fcfcfc" d="M397 374h5v5h-5z"/>
<path fill="#fcfcfc" d="M402 374h5v5h-5z"/>
<path fill="#fcfcfc" d="M407 374h5v5h-5z"/>
<path fill="#fcfcfc" d="M412 374h5v5h-5z"/>
<path fill="#fcfcfc" d="M417 374h5v5h-5z"/>
<path fill="#fcfcfc" d="M422 374h5v5h-5z"/>
<path fill="#fcfcfc" d="M427 374h5v5h-5z"/>
<path fill="#fcfcfc" d="M432 374h5v5h-5z"/>
<path fill="#fcfcfc" d="M437 374h5v5h-5z"/>
<path fill="#fcfcfc" d="M442 374h5v5h-5z"/>
<path fill="#fcfcfc" d="M447 374h5v5h-5z"/>
<path fill="#fcfcfc" d="M452 374h5v5h-5z"/>
<path fill="#fcfcfc" d="M457 374h5v5h-5z"/>
<path fill="#fcfcfc" d="M462 374h5v5h-5z"/>
<path fill="#fcfcfc" d="M467 374h5v5h-5z"/>
<path fill="#fcfcfc" d="M472 374h5v5h-5z"/>
<path fill="#fcfcfc" d="M477 374h5v5h-5z"/>
<path fill="#fcfcfc" d="M482 374h5v5h-5z"/>
<path fill="#fcfcfc" d="M487 374h5v5h-5z"/>
<path fill="#fcfcfc" d="M492 374h5v5h-5z"/>
<path fill="#fcfcfc" d="M497 374h5v5h-5z"/>
<path fill="#fcfcfc" d="M502 374h5v5h-5z"/>
<path fill="#fcfcfc" d="M507 374h5v5h-5z"/>
<path fill="#fcfcfc" d="M512 374h5v5h-5z"/>
<path fill="#fcfcfc" d="M517 374h5v5h-5z"/>
<path fill="#fcfcfc" d="M522 374h5v5h-5z"/>
<path fill="#fcfcfc" d="M527 374h5v5h-5z"/>
<path fill="#fcfcfc" d="M532 374h5v5h-5z"/>
<path fill="#fcfcfc" d="M537 374h5v5h-5z"/>
<path fill="#fcfcfc" d="M542 374h5v5h-5z"/>
<path fill="#fcfcfc" d="M547 374h5v5h-5z"/>
<path fill="#fcfcfc" d="M552 374h5v5h-5z"/>
<path fill="#fcfcfc" d="M557 374h5v5h-5z"/>
<path fill="#fcfcfc" d="M562 374h5v5h-5z"/>
<path fill="#fcfcfc" d="M567 374h5v5h-5z"/>
<path fill="#fcfcfc" d="M572 374h5v5h-5z"/>
<path fill="#fcfcfc" d="M577 374h5v5h-5z"/>
<path fill="#fcfcfc" d="M582 374h5v5h-5z"/>
<path fill="#fcfcfc" d="M587 374h5v5h-5z"/>
<path fill="#fcfcfc" d="M592 374h5v5h-5z"/>
<path fill="#fcfcfc" d="M597 374h5v5h-5z"/>
<path fill="#fcfcfc" d="M602 374h5v5h-5z"/>
<path fill="#fcfcfc" d="M607 374h5v5h-5z"/>
<path fill="#fcfcfc" d="M612 374h5v5h-5z"/>
<path fill="#fcfcfc" d="M617 374h5v5h-5z"/>
<path fill="#fcfcfc" d="M622 374h5v5h-5z"/>
<path fill="#fcfcfc" d="M627 374h5v5h-5z"/>
<path fill="#fcfcfc" d="M632 374h5v5h-5z"/>
<path fill="#fcfcfc" d="M637 374h5v5h-5z"/>
<path fill="#fcfcfc" d="M642 374h5v5h-5z"/>
<path fill="#fcfcfc" d="M647 374h5v5h-5z"/>
<path fill="#fcfcfc" d="M652 374h5v5h-5z"/>
<path fill="#fcfcfc" d="M657 374h5v5h-5z"/>
<path fill="#fcfcfc" d="M662 374h5v5h-5z"/>
<path fill="#fcfcfc" d="M667 374h5v5h-5z"/>
<path fill="#fcfcfc" d="M672 374h5v5h-5z"/>
<path fill="#fcfcfc" d="M677 374h5v5h-5z"/>
<path fill="#fcfcfc" d="M682 374h5v5h-5z"/>
<path fill="#fcfcfc" d="M687 374h5v5h-5z"/>
<path fill="#fcfcfc" d="M692 374h5v5h-5z"/>
<path fill="#fcfcfc" d="M697 374h5v5h-5z"/>
<path fill="#fcfcfc" d="M702 374h5v5h-5z"/>
<path fill="#fcfcfc" d="M707 374h5v5h-5z"/>
<path fill="#fcfcfc" d="M712 374h5v5h-5z"/>
<path fill="#fcfcfc" d="M717 374h5v5h-5z"/>
<path fill="#fcfcfc" d="M722 374h5v5h-5z"/>
<path fill="#fcfcfc" d="M727 374h5v5h-5z"/>
<path fill="#fcfcfc" d="M732 374h5v5h-5z"/>
<path fill="#fcfcfc" d="M737 374h5v5h-5z"/>
<path fill="#fdfdfd" d="M314 379h3v5h-3z"/>
<path fill="#fdfdfd" d="M317 379h5v5h-5z"/>
<path fill="#fdfdfd" d="M322 379h5v5h-5z"/>
<path fill="#fdfdfd" d="M327 379h5v5h-5z"/>
<path fill="#fdfdfd" d="M332 379h5v5h-5z"/>
<path fill="#fdfdfd" d="M337 379h5v5h-5z"/>
<path fill="#fdfdfd" d="M342 379h5v5h-5z"/>
<path fill="#fdfdfd" d="M347 379h5v5h-5z"/>
<path fill="#fdfdfd" d="M352 379h5v5h-5z"/>
<path fill="#fdfdfd" d="M357 379h5v5h-5z"/>
<path fill="#fdfdfd" d="M362 379h5v5h-5z"/>
<path fill="#fdfdfd" d="M367 379h5v5h-5z"/>
<path fill="#fdfdfd" d="M372 379h5v5h-5z"/>
<path fill="#fdfdfd" d="M377 379h5v5h-5z"/>
<path fill="#fdfdfd" d="M382 379h5v5h-5z"/>
<path fill="#fdfdfd" d="M387 379h5v5h-5z"/>
<path fill="#fdfdfd" d="M392 379h5v5h-5z"/>
<path fill="#fdfdfd" d="M397 379h5v5h-5z"/>
<path fill="#fdfdfd" d="M402 379h5v5h-5z"/>
<path fill="#fdfdfd" d="M407 379h5v5h-5z"/>
<path fill="#fdfdfd" d="M412 379h5v5h-5z"/>
<path fill="#fdfdfd" d="M417 379h5v5h-5z"/>
<path fill="#fdfdfd" d="M422 379h5v5h-5z"/>
<path fill="#fdfdfd" d="M427 379h5v5h-5z"/>
<path fill="#fdfdfd" d="M432 379h5v5h-5z"/>
<path fill="#fdfdfd" d="M437 379h5v5h-5z"/>
<path fill="#fdfdfd" d="M442 379h5v5h-5z"/>
<path fill="#fdfdfd" d="M447 379h5v5h-5z"/>
<path fill="#fdfdfd" d="M452 379h5v5h-5z"/>
<path fill="#fdfdfd" d="M457 379h5v5h-5z"/>
<path fill="#fdfdfd" d="M462 379h5v5h-5z"/>
<path fill="#fdfdfd" d="M467 379h5v5h-5z"/>
<path fill="#fdfdfd" d="M472 379h5v5h-5z"/>
<path fill="#fdfdfd" d="M477 379h5v5h-5z"/>
<path fill="#fdfdfd" d="M482 379h5v5h-5z"/>
<path fill="#fdfdfd" d="M487 379h5v5h-5z"/>
<path fill="#fdfdfd" d="M492 379h5v5h-5z"/>
<path fill="#fdfdfd" d="M497 379h5v5h-5z"/>
<path fill="#fdfdfd" d="M502 379h5v5h-5z"/>
<path fill="#fdfdfd" d="M507 379h5v5h-5z"/>
<path fill="#fdfdfd" d="M512 379h5v5h-5z"/>
<path fill="#fdfdfd" d="M517 379h5v5h-5z"/>
<path fill="#fdfdfd" d="M522 379h5v5h-5z"/>
<path fill="#fdfdfd" d="M527 379h5v5h-5z"/>
<path fill="#fdfdfd" d="M532 379h5v5h-5z"/>
<path fill="#fdfdfd" d="M537 379h5v5h-5z"/>
<path fill="#fdfdfd" d="M542 379h5v5h-5z"/>
<path fill="#fdfdfd" d="M547 379h5v5h-5z"/>
<path fill="#fdfdfd" d="M552 379h5v5h-5z"/>
<path fill="#fdfdfd" d="M557 379h5v5h-5z"/>
<path fill="#fdfdfd" d="M562 379h5v5h-5z"/>
<path fill="#fdfdfd" d="M567 379h5v5h-5z"/>
<path fill="#fdfdfd" d="M572 379h5v5h-5z"/>
<path fill="#fdfdfd" d="M577 379h5v5h-5z"/>
<path fill="#fdfdfd" d="M582 379h5v5h-5z"/>
<path fill="#fdfdfd" d="M587 379h5v5h-5z"/>
<path fill="#fdfdfd" d="M592 379h5v5h-5z"/>
<path fill="#fdfdfd" d="M597 379h5v5h-5z"/>
<path fill="#fdfdfd" d="M602 379h5v5h-5z"/>
<path fill="#fdfdfd" d="M607 379h5v5h-5z"/>
<path fill="#fdfdfd" d="M612 379h5v5h-5z"/>
<path fill="#fdfdfd" d="M617 379h5v5h-5z"/>
<path fill="#fdfdfd" d="M622 379h5v5h-5z"/>
<path fill="#fdfdfd" d="M627 379h5v5h-5z"/>
<path fill="#fdfdfd" d="M632 379h5v5h-5z"/>
<path fill="#fdfdfd" d="M637 379h5v5h-5z"/>
<path fill="#fdfdfd" d="M642 379h5v5h-5z"/>
<path fill="#fdfdfd" d="M647 379h5v5h-5z"/>
<path fill="#fdfdfd" d="M652 379h5v5h-5z"/>
<path fill="#fdfdfd" d="M657 379h5v5h-5z"/>
<path fill="#fdfdfd" d="M662 379h5v5h-5z"/>
<path fill="#fdfdfd" d="M667 379h5v5h-5z"/>
<path fill="#fdfdfd" d="M672 379h5v5h-5z"/>
<path fill="#fdfdfd" d="M677 379h5v5h-5z"/>
<path fill="#fdfdfd" d="M682 379h5v5h-5z"/>
<path fill="#fdfdfd" d="M687 379h5v5h-5z"/>
<path fill="#fdfdfd" d="M692 379h5v5h-5z"/>
<path fill="#fdfdfd" d="M697 379h5v5h-5z"/>
<path fill="#fdfdfd" d="M702 379h5v5h-5z"/>
<path fill="#fdfdfd" d="M707 379h5v5h-5z"/>
<path fill="#fdfdfd" d="M712 379h5v5h-5z"/>
<path fill="#fdfdfd" d="M717 379h5v5h-5z"/>
<path fill="#fdfdfd" d="M722 379h5v5h-5z"/>
<path fill="#fdfdfd" d="M727 379h5v5h-5z"/>
<path fill="#fdfdfd" d="M732 379h5v5h-5z"/>
<path fill="#fdfdfd" d="M737 379h5v5h-5z"/>
<path fill="#fffdf9" d="M317 384h5v5h-5z"/>
<path fill="#fef7ea" d="M322 384h5v5h-5z"/>
<path fill="#fffcf8" d="M327 384h5v5h-5z"/>
<path fill="#fef3da" d="M317 389h5v5h-5z"/>
<path fill="#f9d175" d="M322 389h5v5h-5z"/>
<path fill="#fbdd96" d="M327 389h5v5h-5z"/>
<path fill="#fce4ad" d="M332 389h5v5h-5z"/>
<path fill="#fdf4de" d="M337 389h5v5h-5z"/>
<path fill="#fdfdfc" d="M357 389h5v5h-5z"/>
<path fill="#f2f2f2" d="M362 389h5v5h-5z"/>
<path fill="#f5f5f5" d="M367 389h5v5h-5z"/>
<path fill="#fafbfc" d="M372 389h5v5h-5z"/>
<path fill="#fdfcfc" d="M377 389h5v5h-5z"/>
<path fill="#fcfcfd" d="M382 389h5v5h-5z"/>
<path fill="#fefefe" d="M392 389h5v5h-5z"/>
<path fill="#fefefe" d="M397 389h5v5h-5z"/>
<path fill="#fefefe" d="M402 389h5v5h-5z"/>
<path fill="#f3f3f1" d="M662 389h5v5h-5z"/>
<path fill="#f5f4f4" d="M667 389h5v5h-5z"/>
<path fill="#f5f5f5" d="M672 389h5v5h-5z"/>
<path fill="#f4f4f4" d="M677 389h5v5h-5z"/>
<path fill="#f2f1f1" d="M682 389h5v5h-5z"/>
<path fill="#f4f4f4" d="M687 389h5v5h-5z"/>
<path fill="#f3f2f1" d="M692 389h5v5h-5z"/>
<path fill="#f7f8f8" d="M697 389h5v5h-5z"/>
<path fill="#fef4d8" d="M317 394h5v5h-5z"/>
<path fill="#fcd167" d="M322 394h5v5h-5z"/>
<path fill="#facb5c" d="M327 394h5v5h-5z"/>
<path fill="#f8c85b" d="M332 394h5v5h-5z"/>
<path fill="#fce8bb" d="M337 394h5v5h-5z"/>
<path fill="#f3f0ec" d="M357 394h5v5h-5z"/>
<path fill="#c5c6c5" d="M362 394h5v5h-5z"/>
<path fill="#c6c8c8" d="M367 394h5v5h-5z"/>
<path fill="#d1d2d3" d="M372 394h5v5h-5z"/>
<path fill="#d3d1d1" d="M377 394h5v5h-5z"/>
<path fill="#ced0d3" d="M382 394h5v5h-5z"/>
<path fill="#dedddc" d="M387 394h5v5h-5z"/>
<path fill="#d3d3d3" d="M392 394h5v5h-5z"/>
<path fill="#cececd" d="M397 394h5v5h-5z"/>
<path fill="#d3d3d3" d="M402 394h5v5h-5z"/>
<path fill="#e0e3e5" d="M407 394h5v5h-5z"/>
<path fill="#fbf9f7" d="M657 394h5v5h-5z"/>
<path fill="#d2d0cd" d="M662 394h5v5h-5z"/>
<path fill="#d8d8d8" d="M667 394h5v5h-5z"/>
<path fill="#dcdbd9" d="M672 394h5v5h-5z"/>
<path fill="#d1d2d2" d="M677 394h5v5h-5z"/>
<path fill="#e1e1e0" d="M682 394h5v5h-5z"/>
<path fill="#dcdddd" d="M687 394h5v5h-5z"/>
<path fill="#dad7d4" d="M692 394h5v5h-5z"/>
<path fill="#dbdee0" d="M697 394h5v5h-5z"/>
<path fill="#fef2d7" d="M317 399h5v5h-5z"/>
<path fill="#f9cd65" d="M322 399h5v5h-5z"/>
<path fill="#f7c659" d="M327 399h5v5h-5z"/>
<path fill="#f6c357" d="M332 399h5v5h-5z"/>
<path fill="#fbe6ba" d="M337 399h5v5h-5z"/>
<path fill="#f3f0ed" d="M357 399h5v5h-5z"/>
<path fill="#ced0d2" d="M362 399h5v5h-5z"/>
<path fill="#dcdad9" d="M367 399h5v5h-5z"/>
<path fill="#c2c3c5" d="M372 399h5v5h-5z"/>
<path fill="#d1d0d0" d="M377 399h5v5h-5z"/>
<path fill="#c4c4c5" d="M382 399h5v5h-5z"/>
<path fill="#c4c2c2" d="M387 399h5v5h-5z"/>
<path fill="#cccdcd" d="M392 399h5v5h-5z"/>
<path fill="#c3c2c3" d="M397 399h5v5h-5z"/>
<path fill="#cfcece" d="M402 399h5v5h-5z"/>
<path fill="#cfd2d5" d="M407 399h5v5h-5z"/>
<path fill="#fcfdfd" d="M412 399h5v5h-5z"/>
<path fill="#fcfbfa" d="M657 399h5v5h-5z"/>
<path fill="#dfdcd9" d="M662 399h5v5h-5z"/>
<path fill="#d9d9d9" d="M667 399h5v5h-5z"/>
<path fill="#e5e3e2" d="M672 399h5v5h-5z"/>
<path fill="#d6d5d5" d="M677 399h5v5h-5z"/>
<path fill="#e9e9e8" d="M682 399h5v5h-5z"/>
<path fill="#dcdddd" d="M687 399h5v5h-5z"/>
<path fill="#e1dfdc" d="M692 399h5v5h-5z"/>
<path fill="#e4e6e8" d="M697 399h5v5h-5z"/>
<path fill="#fefaef" d="M317 404h5v5h-5z"/>
<path fill="#fceac0" d="M322 404h5v5h-5z"/>
<path fill="#fce7bb" d="M327 404h5v5h-5z"/>
<path fill="#fbe6bb" d="M332 404h5v5h-5z"/>
<path fill="#fdf5e4" d="M337 404h5v5h-5z"/>
<path fill="#fdfdfd" d="M357 404h5v5h-5z"/>
<path fill="#fbfbfb" d="M362 404h5v5h-5z"/>
<path fill="#fcfcfb" d="M367 404h5v5h-5z"/>
<path fill="#f6f5f5" d="M372 404h5v5h-5z"/>
<path fill="#f5f5f6" d="M377 404h5v5h-5z"/>
<path fill="#f4f4f4" d="M382 404h5v5h-5z"/>
<path fill="#f3f3f4" d="M387 404h5v5h-5z"/>
<path fill="#f8f9f9" d="M392 404h5v5h-5z"/>
<path fill="#f5f5f5" d="M397 404h5v5h-5z"/>
<path fill="#f6f6f6" d="M402 404h5v5h-5z"/>
<path fill="#f6f6f7" d="M407 404h5v5h-5z"/>
<path fill="#fdfcfc" d="M662 404h5v5h-5z"/>
<path fill="#fcfdfd" d="M667 404h5v5h-5z"/>
<path fill="#fdfdfd" d="M677 404h5v5h-5z"/>
<path fill="#fdfdfd" d="M682 404h5v5h-5z"/>
<path fill="#fbfbfb" d="M687 404h5v5h-5z"/>
<path fill="#fcfcfc" d="M692 404h5v5h-5z"/>
<path fill="#fdfefe" d="M697 404h5v5h-5z"/>
<path fill="#fbfafa" d="M314 419h3v5h-3z"/>
<path fill="#fbfafa" d="M317 419h5v5h-5z"/>
<path fill="#fbfafa" d="M322 419h5v5h-5z"/>
<path fill="#fbfafa" d="M327 419h5v5h-5z"/>
<path fill="#fbfafa" d="M332 419h5v5h-5z"/>
<path fill="#fbfafa" d="M337 419h5v5h-5z"/>
<path fill="#fbfafa" d="M342 419h5v5h-5z"/>
<path fill="#fbfafa" d="M347 419h5v5h-5z"/>
<path fill="#fbfafa" d="M352 419h5v5h-5z"/>
<path fill="#fbfafa" d="M357 419h5v5h-5z"/>
<path fill="#fbfafa" d="M362 419h5v5h-5z"/>
<path fill="#fbfafa" d="M367 419h5v5h-5z"/>
<path fill="#fbfafa" d="M372 419h5v5h-5z"/>
<path fill="#fbfafa" d="M377 419h5v5h-5z"/>
<path fill="#fbfafa" d="M382 419h5v5h-5z"/>
<path fill="#fbfafa" d="M387 419h5v5h-5z"/>
<path fill="#fbfafa" d="M392 419h5v5h-5z"/>
<path fill="#fbfafa" d="M397 419h5v5h-5z"/>
<path fill="#fbfafa" d="M402 419h5v5h-5z"/>
<path fill="#fbfafa" d="M407 419h5v5h-5z"/>
<path fill="#fbfafa" d="M412 419h5v5h-5z"/>
<path fill="#fbfafa" d="M417 419h5v5h-5z"/>
<path fill="#fbfafa" d="M422 419h5v5h-5z"/>
<path fill="#fbfafa" d="M427 419h5v5h-5z"/>
<path fill="#fbfafa" d="M432 419h5v5h-5z"/>
<path fill="#fbfafa" d="M437 419h5v5h-5z"/>
<path fill="#fbfafa" d="M442 419h5v5h-5z"/>
<path fill="#fbfafa" d="M447 419h5v5h-5z"/>
<path fill="#fbfafa" d="M452 419h5v5h-5z"/>
<path fill="#fbfafa" d="M457 419h5v5h-5z"/>
<path fill="#fbfafa" d="M462 419h5v5h-5z"/>
<path fill="#fbfafa" d="M467 419h5v5h-5z"/>
<path fill="#fbfafa" d="M472 419h5v5h-5z"/>
<path fill="#fbfafa" d="M477 419h5v5h-5z"/>
<path fill="#fbfafa" d="M482 419h5v5h-5z"/>
<path fill="#fbfafa" d="M487 419h5v5h-5z"/>
<path fill="#fbfafa" d="M492 419h5v5h-5z"/>
<path fill="#fbfafa" d="M497 419h5v5h-5z"/>
<path fill="#fbfafa" d="M502 419h5v5h-5z"/>
<path fill="#fbfafa" d="M507 419h5v5h-5z"/>
<path fill="#fbfafa" d="M512 419h5v5h-5z"/>
<path fill="#fbfafa" d="M517 419h5v5h-5z"/>
<path fill="#fbfafa" d="M522 419h5v5h-5z"/>
<path fill="#fbfafa" d="M527 419h5v5h-5z"/>
<path fill="#fbfafa" d="M532 419h5v5h-5z"/>
<path fill="#fbfafa" d="M537 419h5v5h-5z"/>
<path fill="#fbfafa" d="M542 419h5v5h-5z"/>
<path fill="#fbfafa" d="M547 419h5v5h-5z"/>
<path fill="#fbfafa" d="M552 419h5v5h-5z"/>
<path fill="#fbfafa" d="M557 419h5v5h-5z"/>
<path fill="#fbfafa" d="M562 419h5v5h-5z"/>
<path fill="#fbfafa" d="M567 419h5v5h-5z"/>
<path fill="#fbfafa" d="M572 419h5v5h-5z"/>
<path fill="#fbfafa" d="M577 419h5v5h-5z"/>
<path fill="#fbfafa" d="M582 419h5v5h-5z"/>
<path fill="#fbfafa" d="M587 419h5v5h-5z"/>
<path fill="#fbfafa" d="M592 419h5v5h-5z"/>
<path fill="#fbfafa" d="M597 419h5v5h-5z"/>
<path fill="#fbfafa" d="M602 419h5v5h-5z"/>
<path fill="#fbfafa" d="M607 419h5v5h-5z"/>
<path fill="#fbfafa" d="M612 419h5v5h-5z"/>
<path fill="#fbfafa" d="M617 419h5v5h-5z"/>
<path fill="#fbfafa" d="M622 419h5v5h-5z"/>
<path fill="#fbfafa" d="M627 419h5v5h-5z"/>
<path fill="#fbfafa" d="M632 419h5v5h-5z"/>
<path fill="#fbfafa" d="M637 419h5v5h-5z"/>
<path fill="#fbfafa" d="M642 419h5v5h-5z"/>
<path fill="#fbfafa" d="M647 419h5v5h-5z"/>
<path fill="#fbfafa" d="M652 419h5v5h-5z"/>
<path fill="#fbfafa" d="M657 419h5v5h-5z"/>
<path fill="#fbfafa" d="M662 419h5v5h-5z"/>
<path fill="#fbfafa" d="M667 419h5v5h-5z"/>
<path fill="#fbfafa" d="M672 419h5v5h-5z"/>
<path fill="#fbfafa" d="M677 419h5v5h-5z"/>
<path fill="#fbfafa" d="M682 419h5v5h-5z"/>
<path fill="#fbfafa" d="M687 419h5v5h-5z"/>
<path fill="#fbfafa" d="M692 419h5v5h-5z"/>
<path fill="#fbfafa" d="M697 419h5v5h-5z"/>
<path fill="#fbfafa" d="M702 419h5v5h-5z"/>
<path fill="#fbfafa" d="M707 419h5v5h-5z"/>
<path fill="#fbfafa" d="M712 419h5v5h-5z"/>
<path fill="#fbfafa" d="M717 419h5v5h-5z"/>
<path fill="#fbfafa" d="M722 419h5v5h-5z"/>
<path fill="#fbfafa" d="M727 419h5v5h-5z"/>
<path fill="#fbfafa" d="M732 419h5v5h-5z"/>
<path fill="#fbfafa" d="M737 419h5v5h-5z"/>
<path fill="#faf9fb" d="M322 429h5v5h-5z"/>
<path fill="#f6f5f7" d="M327 429h5v5h-5z"/>
<path fill="#f7f6f8" d="M332 429h5v5h-5z"/>
<path fill="#f9f8fa" d="M337 429h5v5h-5z"/>
<path fill="#fefefe" d="M392 429h5v5h-5z"/>
<path fill="#fefefe" d="M662 429h5v5h-5z"/>
<path fill="#fefefd" d="M667 429h5v5h-5z"/>
<path fill="#fefefe" d="M672 429h5v5h-5z"/>
<path fill="#fefefe" d="M677 429h5v5h-5z"/>
<path fill="#f7f1fa" d="M317 434h5v5h-5z"/>
<path fill="#c199da" d="M322 434h5v5h-5z"/>
<path fill="#c097d8" d="M327 434h5v5h-5z"/>
<path fill="#eee6f2" d="M332 434h5v5h-5z"/>
<path fill="#e4d5eb" d="M337 434h5v5h-5z"/>
<path fill="#fbf9fc" d="M342 434h5v5h-5z"/>
<path fill="#f9f7f6" d="M357 434h5v5h-5z"/>
<path fill="#dcdbdb" d="M362 434h5v5h-5z"/>
<path fill="#ebedee" d="M367 434h5v5h-5z"/>
<path fill="#f0efee" d="M372 434h5v5h-5z"/>
<path fill="#e3e4e5" d="M377 434h5v5h-5z"/>
<path fill="#fafbfc" d="M382 434h5v5h-5z"/>
<path fill="#efecea" d="M387 434h5v5h-5z"/>
<path fill="#d4d3d3" d="M392 434h5v5h-5z"/>
<path fill="#eaecef" d="M397 434h5v5h-5z"/>
<path fill="#f3f1ef" d="M402 434h5v5h-5z"/>
<path fill="#dbdcdc" d="M407 434h5v5h-5z"/>
<path fill="#eceeef" d="M412 434h5v5h-5z"/>
<path fill="#f2f1f1" d="M417 434h5v5h-5z"/>
<path fill="#e9e9e8" d="M422 434h5v5h-5z"/>
<path fill="#eff0f0" d="M427 434h5v5h-5z"/>
<path fill="#f3f3f3" d="M432 434h5v5h-5z"/>
<path fill="#efefef" d="M437 434h5v5h-5z"/>
<path fill="#f1f2f2" d="M442 434h5v5h-5z"/>
<path fill="#f4f4f4" d="M447 434h5v5h-5z"/>
<path fill="#f1f0ef" d="M452 434h5v5h-5z"/>
<path fill="#e9eaea" d="M457 434h5v5h-5z"/>
<path fill="#f2f3f3" d="M462 434h5v5h-5z"/>
<path fill="#f5f5f5" d="M467 434h5v5h-5z"/>
<path fill="#f6f7f8" d="M472 434h5v5h-5z"/>
<path fill="#f5f3f2" d="M477 434h5v5h-5z"/>
<path fill="#eef0f0" d="M482 434h5v5h-5z"/>
<path fill="#f1f0f0" d="M487 434h5v5h-5z"/>
<path fill="#e1e1e1" d="M492 434h5v5h-5z"/>
<path fill="#f9fbfc" d="M497 434h5v5h-5z"/>
<path fill="#fefdfc" d="M657 434h5v5h-5z"/>
<path fill="#e9e7e5" d="M662 434h5v5h-5z"/>
<path fill="#e5e4e4" d="M667 434h5v5h-5z"/>
<path fill="#e3e2e1" d="M672 434h5v5h-5z"/>
<path fill="#e5e5e4" d="M677 434h5v5h-5z"/>
<path fill="#e7e7e5" d="M682 434h5v5h-5z"/>
<path fill="#e7e7e8" d="M687 434h5v5h-5z"/>
<path fill="#fdfefe" d="M692 434h5v5h-5z"/>
<path fill="#f0e7f6" d="M317 439h5v5h-5z"/>
<path fill="#9955c3" d="M322 439h5v5h-5z"/>
<path fill="#9854c2" d="M327 439h5v5h-5z"/>
<path fill="#e8dbef" d="M332 439h5v5h-5z"/>
<path fill="#ddc9e7" d="M337 439h5v5h-5z"/>
<path fill="#faf7fb" d="M342 439h5v5h-5z"/>
<path fill="#f1eeea" d="M357 439h5v5h-5z"/>
<path fill="#b9b8b7" d="M362 439h5v5h-5z"/>
<path fill="#bdc0c0" d="M367 439h5v5h-5z"/>
<path fill="#c3c3c1" d="M372 439h5v5h-5z"/>
<path fill="#bbbcbc" d="M377 439h5v5h-5z"/>
<path fill="#dfe2e5" d="M382 439h5v5h-5z"/>
<path fill="#d1cfcc" d="M387 439h5v5h-5z"/>
<path fill="#bfbebe" d="M392 439h5v5h-5z"/>
<path fill="#d3d7da" d="M397 439h5v5h-5z"/>
<path fill="#dcd9d7" d="M402 439h5v5h-5z"/>
<path fill="#d8d8d7" d="M407 439h5v5h-5z"/>
<path fill="#bababa" d="M412 439h5v5h-5z"/>
<path fill="#c1c0bf" d="M417 439h5v5h-5z"/>
<path fill="#bdbebd" d="M422 439h5v5h-5z"/>
<path fill="#bec0c0" d="M427 439h5v5h-5z"/>
<path fill="#c4c4c3" d="M432 439h5v5h-5z"/>
<path fill="#c6c6c7" d="M437 439h5v5h-5z"/>
<path fill="#cbcaca" d="M442 439h5v5h-5z"/>
<path fill="#c7c6c4" d="M447 439h5v5h-5z"/>
<path fill="#b9baba" d="M452 439h5v5h-5z"/>
<path fill="#bebfbe" d="M457 439h5v5h-5z"/>
<path fill="#c3c4c5" d="M462 439h5v5h-5z"/>
<path fill="#c0c2c1" d="M467 439h5v5h-5z"/>
<path fill="#d1d4d6" d="M472 439h5v5h-5z"/>
<path fill="#e1dfdc" d="M477 439h5v5h-5z"/>
<path fill="#c0c2c3" d="M482 439h5v5h-5z"/>
<path fill="#c2c1c0" d="M487 439h5v5h-5z"/>
<path fill="#c0c1c3" d="M492 439h5v5h-5z"/>
<path fill="#f5f8fa" d="M497 439h5v5h-5z"/>
<path fill="#e9e7e5" d="M662 439h5v5h-5z"/>
<path fill="#e5e5e4" d="M667 439h5v5h-5z"/>
<path fill="#e3e2e1" d="M672 439h5v5h-5z"/>
<path fill="#e4e4e2" d="M677 439h5v5h-5z"/>
<path fill="#dededb" d="M682 439h5v5h-5z"/>
<path fill="#d6d7d8" d="M687 439h5v5h-5z"/>
<path fill="#fbfcfd" d="M692 439h5v5h-5z"/>
<path fill="#f7f1fa" d="M317 444h5v5h-5z"/>
<path fill="#c199da" d="M322 444h5v5h-5z"/>
<path fill="#c097d8" d="M327 444h5v5h-5z"/>
<path fill="#eee6f2" d="M332 444h5v5h-5z"/>
<path fill="#e0cfe9" d="M337 444h5v5h-5z"/>
<path fill="#fbf8fc" d="M342 444h5v5h-5z"/>
<path fill="#f7f4f2" d="M357 444h5v5h-5z"/>
<path fill="#d3d2d2" d="M362 444h5v5h-5z"/>
<path fill="#d5d5d5" d="M367 444h5v5h-5z"/>
<path fill="#d4d4d3" d="M372 444h5v5h-5z"/>
<path fill="#cfcfcf" d="M377 444h5v5h-5z"/>
<path fill="#eaecee" d="M382 444h5v5h-5z"/>
<path fill="#dad7d4" d="M387 444h5v5h-5z"/>
<path fill="#c5c6c5" d="M392 444h5v5h-5z"/>
<path fill="#e6e9ec" d="M397 444h5v5h-5z"/>
<path fill="#edeae8" d="M402 444h5v5h-5z"/>
<path fill="#d3d3d3" d="M407 444h5v5h-5z"/>
<path fill="#c8c7c5" d="M412 444h5v5h-5z"/>
<path fill="#cdced0" d="M417 444h5v5h-5z"/>
<path fill="#d4d4d3" d="M422 444h5v5h-5z"/>
<path fill="#d8d9da" d="M427 444h5v5h-5z"/>
<path fill="#dfdfde" d="M432 444h5v5h-5z"/>
<path fill="#d6d5d4" d="M437 444h5v5h-5z"/>
<path fill="#d1d1d2" d="M442 444h5v5h-5z"/>
<path fill="#d3d2d0" d="M447 444h5v5h-5z"/>
<path fill="#cdcece" d="M452 444h5v5h-5z"/>
<path fill="#d3d3d3" d="M457 444h5v5h-5z"/>
<path fill="#d3d3d3" d="M462 444h5v5h-5z"/>
<path fill="#d8dada" d="M467 444h5v5h-5z"/>
<path fill="#e4e5e6" d="M472 444h5v5h-5z"/>
<path fill="#edecea" d="M477 444h5v5h-5z"/>
<path fill="#dbdcdd" d="M482 444h5v5h-5z"/>
<path fill="#dbdad9" d="M487 444h5v5h-5z"/>
<path fill="#d6d7d8" d="M492 444h5v5h-5z"/>
<path fill="#f9fafc" d="M497 444h5v5h-5z"/>
<path fill="#f5f4f3" d="M662 444h5v5h-5z"/>
<path fill="#f4f4f4" d="M667 444h5v5h-5z"/>
<path fill="#f3f3f2" d="M672 444h5v5h-5z"/>
<path fill="#f1f0ee" d="M677 444h5v5h-5z"/>
<path fill="#e9e9e8" d="M682 444h5v5h-5z"/>
<path fill="#edeeee" d="M687 444h5v5h-5z"/>
<path fill="#faf9fb" d="M322 449h5v5h-5z"/>
<path fill="#f6f5f7" d="M327 449h5v5h-5z"/>
<path fill="#f7f6f8" d="M332 449h5v5h-5z"/>
<path fill="#f7f4f9" d="M337 449h5v5h-5z"/>
<path fill="#fdfdfd" d="M362 449h5v5h-5z"/>
<path fill="#fefefe" d="M367 449h5v5h-5z"/>
<path fill="#fefefe" d="M372 449h5v5h-5z"/>
<path fill="#fefefe" d="M377 449h5v5h-5z"/>
<path fill="#fbfafa" d="M387 449h5v5h-5z"/>
<path fill="#f5f5f5" d="M392 449h5v5h-5z"/>
<path fill="#fdfdfe" d="M397 449h5v5h-5z"/>
<path fill="#fdfdfd" d="M407 449h5v5h-5z"/>
<path fill="#f7f7f6" d="M412 449h5v5h-5z"/>
<path fill="#fbfcfc" d="M417 449h5v5h-5z"/>
<path fill="#fefefe" d="M422 449h5v5h-5z"/>
<path fill="#fefefe" d="M437 449h5v5h-5z"/>
<path fill="#fdfdfd" d="M442 449h5v5h-5z"/>
<path fill="#fefefe" d="M447 449h5v5h-5z"/>
<path fill="#fefefe" d="M452 449h5v5h-5z"/>
<path fill="#fefefe" d="M457 449h5v5h-5z"/>
<path fill="#fefefe" d="M462 449h5v5h-5z"/>
<path fill="#fefefe" d="M492 449h5v5h-5z"/>
<path fill="#fdfdfd" d="M314 459h3v5h-3z"/>
<path fill="#fdfdfd" d="M317 459h5v5h-5z"/>
<path fill="#fdfdfd" d="M322 459h5v5h-5z"/>
<path fill="#fdfdfd" d="M327 459h5v5h-5z"/>
<path fill="#fdfdfd" d="M332 459h5v5h-5z"/>
<path fill="#fdfdfd" d="M337 459h5v5h-5z"/>
<path fill="#fdfdfd" d="M342 459h5v5h-5z"/>
<path fill="#fdfdfd" d="M347 459h5v5h-5z"/>
<path fill="#fdfdfd" d="M352 459h5v5h-5z"/>
<path fill="#fdfdfd" d="M357 459h5v5h-5z"/>
<path fill="#fdfdfd" d="M362 459h5v5h-5z"/>
<path fill="#fdfdfd" d="M367 459h5v5h-5z"/>
<path fill="#fdfdfd" d="M372 459h5v5h-5z"/>
<path fill="#fdfdfd" d="M377 459h5v5h-5z"/>
<path fill="#fdfdfd" d="M382 459h5v5h-5z"/>
<path fill="#fdfdfd" d="M387 459h5v5h-5z"/>
<path fill="#fdfdfd" d="M392 459h5v5h-5z"/>
<path fill="#fdfdfd" d="M397 459h5v5h-5z"/>
<path fill="#fdfdfd" d="M402 459h5v5h-5z"/>
<path fill="#fdfdfd" d="M407 459h5v5h-5z"/>
<path fill="#fdfdfd" d="M412 459h5v5h-5z"/>
<path fill="#fdfdfd" d="M417 459h5v5h-5z"/>
<path fill="#fdfdfd" d="M422 459h5v5h-5z"/>
<path fill="#fdfdfd" d="M427 459h5v5h-5z"/>
<path fill="#fdfdfd" d="M432 459h5v5h-5z"/>
<path fill="#fdfdfd" d="M437 459h5v5h-5z"/>
<path fill="#fdfdfd" d="M442 459h5v5h-5z"/>
<path fill="#fdfdfd" d="M447 459h5v5h-5z"/>
<path fill="#fdfdfd" d="M452 459h5v5h-5z"/>
<path fill="#fdfdfd" d="M457 459h5v5h-5z"/>
<path fill="#fdfdfd" d="M462 459h5v5h-5z"/>
<path fill="#fdfdfd" d="M467 459h5v5h-5z"/>
<path fill="#fdfdfd" d="M472 459h5v5h-5z"/>
<path fill="#fdfdfd" d="M477 459h5v5h-5z"/>
<path fill="#fdfdfd" d="M482 459h5v5h-5z"/>
<path fill="#fdfdfd" d="M487 459h5v5h-5z"/>
<path fill="#fdfdfd" d="M492 459h5v5h-5z"/>
<path fill="#fdfdfd" d="M497 459h5v5h-5z"/>
<path fill="#fdfdfd" d="M502 459h5v5h-5z"/>
<path fill="#fdfdfd" d="M507 459h5v5h-5z"/>
<path fill="#fdfdfd" d="M512 459h5v5h-5z"/>
<path fill="#fdfdfd" d="M517 459h5v5h-5z"/>
<path fill="#fdfdfd" d="M522 459h5v5h-5z"/>
<path fill="#fdfdfd" d="M527 459h5v5h-5z"/>
<path fill="#fdfdfd" d="M532 459h5v5h-5z"/>
<path fill="#fdfdfd" d="M537 459h5v5h-5z"/>
<path fill="#fdfdfd" d="M542 459h5v5h-5z"/>
<path fill="#fdfdfd" d="M547 459h5v5h-5z"/>
<path fill="#fdfdfd" d="M552 459h5v5h-5z"/>
<path fill="#fdfdfd" d="M557 459h5v5h-5z"/>
<path fill="#fdfdfd" d="M562 459h5v5h-5z"/>
<path fill="#fdfdfd" d="M567 459h5v5h-5z"/>
<path fill="#fdfdfd" d="M572 459h5v5h-5z"/>
<path fill="#fdfdfd" d="M577 459h5v5h-5z"/>
<path fill="#fdfdfd" d="M582 459h5v5h-5z"/>
<path fill="#fdfdfd" d="M587 459h5v5h-5z"/>
<path fill="#fdfdfd" d="M592 459h5v5h-5z"/>
<path fill="#fdfdfd" d="M597 459h5v5h-5z"/>
<path fill="#fdfdfd" d="M602 459h5v5h-5z"/>
<path fill="#fdfdfd" d="M607 459h5v5h-5z"/>
<path fill="#fdfdfd" d="M612 459h5v5h-5z"/>
<path fill="#fdfdfd" d="M617 459h5v5h-5z"/>
<path fill="#fdfdfd" d="M622 459h5v5h-5z"/>
<path fill="#fdfdfd" d="M627 459h5v5h-5z"/>
<path fill="#fdfdfd" d="M632 459h5v5h-5z"/>
<path fill="#fdfdfd" d="M637 459h5v5h-5z"/>
<path fill="#fdfdfd" d="M642 459h5v5h-5z"/>
<path fill="#fdfdfd" d="M647 459h5v5h-5z"/>
<path fill="#fdfdfd" d="M652 459h5v5h-5z"/>
<path fill="#fdfdfd" d="M657 459h5v5h-5z"/>
<path fill="#fdfdfd" d="M662 459h5v5h-5z"/>
<path fill="#fdfdfd" d="M667 459h5v5h-5z"/>
<path fill="#fdfdfd" d="M672 459h5v5h-5z"/>
<path fill="#fdfdfd" d="M677 459h5v5h-5z"/>
<path fill="#fdfdfd" d="M682 459h5v5h-5z"/>
<path fill="#fdfdfd" d="M687 459h5v5h-5z"/>
<path fill="#fdfdfd" d="M692 459h5v5h-5z"/>
<path fill="#fdfdfd" d="M697 459h5v5h-5z"/>
<path fill="#fdfdfd" d="M702 459h5v5h-5z"/>
<path fill="#fdfdfd" d="M707 459h5v5h-5z"/>
<path fill="#fdfdfd" d="M712 459h5v5h-5z"/>
<path fill="#fdfdfd" d="M717 459h5v5h-5z"/>
<path fill="#fdfdfd" d="M722 459h5v5h-5z"/>
<path fill="#fdfdfd" d="M727 459h5v5h-5z"/>
<path fill="#fdfdfd" d="M732 459h5v5h-5z"/>
<path fill="#fdfdfd" d="M737 459h5v5h-5z"/>
<path fill="#fcfcfc" d="M314 464h3v5h-3z"/>
<path fill="#fcfcfc" d="M317 464h5v5h-5z"/>
<path fill="#fcfcfc" d="M322 464h5v5h-5z"/>
<path fill="#fcfcfc" d="M327 464h5v5h-5z"/>
<path fill="#fcfcfc" d="M332 464h5v5h-5z"/>
<path fill="#fcfcfc" d="M337 464h5v5h-5z"/>
<path fill="#fcfcfc" d="M342 464h5v5h-5z"/>
<path fill="#fcfcfc" d="M347 464h5v5h-5z"/>
<path fill="#fcfcfc" d="M352 464h5v5h-5z"/>
<path fill="#fcfcfc" d="M357 464h5v5h-5z"/>
<path fill="#fcfcfc" d="M362 464h5v5h-5z"/>
<path fill="#fcfcfc" d="M367 464h5v5h-5z"/>
<path fill="#fcfcfc" d="M372 464h5v5h-5z"/>
<path fill="#fcfcfc" d="M377 464h5v5h-5z"/>
<path fill="#fcfcfc" d="M382 464h5v5h-5z"/>
<path fill="#fcfcfc" d="M387 464h5v5h-5z"/>
<path fill="#fcfcfc" d="M392 464h5v5h-5z"/>
<path fill="#fcfcfc" d="M397 464h5v5h-5z"/>
<path fill="#fcfcfc" d="M402 464h5v5h-5z"/>
<path fill="#fcfcfc" d="M407 464h5v5h-5z"/>
<path fill="#fcfcfc" d="M412 464h5v5h-5z"/>
<path fill="#fcfcfc" d="M417 464h5v5h-5z"/>
<path fill="#fcfcfc" d="M422 464h5v5h-5z"/>
<path fill="#fcfcfc" d="M427 464h5v5h-5z"/>
<path fill="#fcfcfc" d="M432 464h5v5h-5z"/>
<path fill="#fcfcfc" d="M437 464h5v5h-5z"/>
<path fill="#fcfcfc" d="M442 464h5v5h-5z"/>
<path fill="#fcfcfc" d="M447 464h5v5h-5z"/>
<path fill="#fcfcfc" d="M452 464h5v5h-5z"/>
<path fill="#fcfcfc" d="M457 464h5v5h-5z"/>
<path fill="#fcfcfc" d="M462 464h5v5h-5z"/>
<path fill="#fcfcfc" d="M467 464h5v5h-5z"/>
<path fill="#fcfcfc" d="M472 464h5v5h-5z"/>
<path fill="#fcfcfc" d="M477 464h5v5h-5z"/>
<path fill="#fcfcfc" d="M482 464h5v5h-5z"/>
<path fill="#fcfcfc" d="M487 464h5v5h-5z"/>
<path fill="#fcfcfc" d="M492 464h5v5h-5z"/>
<path fill="#fcfcfc" d="M497 464h5v5h-5z"/>
<path fill="#fcfcfc" d="M502 464h5v5h-5z"/>
<path fill="#fcfcfc" d="M507 464h5v5h-5z"/>
<path fill="#fcfcfc" d="M512 464h5v5h-5z"/>
<path fill="#fcfcfc" d="M517 464h5v5h-5z"/>
<path fill="#fcfcfc" d="M522 464h5v5h-5z"/>
<path fill="#fcfcfc" d="M527 464h5v5h-5z"/>
<path fill="#fcfcfc" d="M532 464h5v5h-5z"/>
<path fill="#fcfcfc" d="M537 464h5v5h-5z"/>
<path fill="#fcfcfc" d="M542 464h5v5h-5z"/>
<path fill="#fcfcfc" d="M547 464h5v5h-5z"/>
<path fill="#fcfcfc" d="M552 464h5v5h-5z"/>
<path fill="#fcfcfc" d="M557 464h5v5h-5z"/>
<path fill="#fcfcfc" d="M562 464h5v5h-5z"/>
<path fill="#fcfcfc" d="M567 464h5v5h-5z"/>
<path fill="#fcfcfc" d="M572 464h5v5h-5z"/>
<path fill="#fcfcfc" d="M577 464h5v5h-5z"/>
<path fill="#fcfcfc" d="M582 464h5v5h-5z"/>
<path fill="#fcfcfc" d="M587 464h5v5h-5z"/>
<path fill="#fcfcfc" d="M592 464h5v5h-5z"/>
<path fill="#fcfcfc" d="M597 464h5v5h-5z"/>
<path fill="#fcfcfc" d="M602 464h5v5h-5z"/>
<path fill="#fcfcfc" d="M607 464h5v5h-5z"/>
<path fill="#fcfcfc" d="M612 464h5v5h-5z"/>
<path fill="#fcfcfc" d="M617 464h5v5h-5z"/>
<path fill="#fcfcfc" d="M622 464h5v5h-5z"/>
<path fill="#fcfcfc" d="M627 464h5v5h-5z"/>
<path fill="#fcfcfc" d="M632 464h5v5h-5z"/>
<path fill="#fcfcfc" d="M637 464h5v5h-5z"/>
<path fill="#fcfcfc" d="M642 464h5v5h-5z"/>
<path fill="#fcfcfc" d="M647 464h5v5h-5z"/>
<path fill="#fcfcfc" d="M652 464h5v5h-5z"/>
<path fill="#fcfcfc" d="M657 464h5v5h-5z"/>
<path fill="#fcfcfc" d="M662 464h5v5h-5z"/>
<path fill="#fcfcfc" d="M667 464h5v5h-5z"/>
<path fill="#fcfcfc" d="M672 464h5v5h-5z"/>
<path fill="#fcfcfc" d="M677 464h5v5h-5z"/>
<path fill="#fcfcfc" d="M682 464h5v5h-5z"/>
<path fill="#fcfcfc" d="M687 464h5v5h-5z"/>
<path fill="#fcfcfc" d="M692 464h5v5h-5z"/>
<path fill="#fcfcfc" d="M697 464h5v5h-5z"/>
<path fill="#fcfcfc" d="M702 464h5v5h-5z"/>
<path fill="#fcfcfc" d="M707 464h5v5h-5z"/>
<path fill="#fcfcfc" d="M712 464h5v5h-5z"/>
<path fill="#fcfcfc" d="M717 464h5v5h-5z"/>
<path fill="#fcfcfc" d="M722 464h5v5h-5z"/>
<path fill="#fcfcfc" d="M727 464h5v5h-5z"/>
<path fill="#fcfcfc" d="M732 464h5v5h-5z"/>
<path fill="#fcfcfc" d="M737 464h5v5h-5z"/>
<path fill="#fdfdfd" d="M327 469h5v5h-5z"/>
<path fill="#fdfdfd" d="M332 469h5v5h-5z"/>
<path fill="#fefefe" d="M337 469h5v5h-5z"/>
<path fill="#f8fbf9" d="M317 474h5v5h-5z"/>
<path fill="#c4ddcf" d="M322 474h5v5h-5z"/>
<path fill="#c1dacc" d="M327 474h5v5h-5z"/>
<path fill="#ecf1ef" d="M332 474h5v5h-5z"/>
<path fill="#f6f7f7" d="M337 474h5v5h-5z"/>
<path fill="#f9f9f9" d="M362 474h5v5h-5z"/>
<path fill="#fdfdfd" d="M367 474h5v5h-5z"/>
<path fill="#fcfcfb" d="M382 474h5v5h-5z"/>
<path fill="#fcfcfd" d="M387 474h5v5h-5z"/>
<path fill="#fcfcfc" d="M397 474h5v5h-5z"/>
<path fill="#fbfbfa" d="M412 474h5v5h-5z"/>
<path fill="#fdfefe" d="M417 474h5v5h-5z"/>
<path fill="#f9f8f8" d="M662 474h5v5h-5z"/>
<path fill="#f9f9f8" d="M667 474h5v5h-5z"/>
<path fill="#f7f7f7" d="M672 474h5v5h-5z"/>
<path fill="#fcfcfd" d="M677 474h5v5h-5z"/>
<path fill="#fafafa" d="M682 474h5v5h-5z"/>
<path fill="#f9f8f8" d="M687 474h5v5h-5z"/>
<path fill="#f8f8f8" d="M692 474h5v5h-5z"/>
<path fill="#fafaf9" d="M697 474h5v5h-5z"/>
<path fill="#f9fafa" d="M702 474h5v5h-5z"/>
<path fill="#e7f2ec" d="M317 479h5v5h-5z"/>
<path fill="#58a37a" d="M322 479h5v5h-5z"/>
<path fill="#54a076" d="M327 479h5v5h-5z"/>
<path fill="#c7ded1" d="M332 479h5v5h-5z"/>
<path fill="#e9f1ec" d="M337 479h5v5h-5z"/>
<path fill="#f5f2ef" d="M357 479h5v5h-5z"/>
<path fill="#c5c4c4" d="M362 479h5v5h-5z"/>
<path fill="#d5d7d9" d="M367 479h5v5h-5z"/>
<path fill="#dededf" d="M372 479h5v5h-5z"/>
<path fill="#e1e0e0" d="M377 479h5v5h-5z"/>
<path fill="#d4d4d3" d="M382 479h5v5h-5z"/>
<path fill="#d9dcdf" d="M387 479h5v5h-5z"/>
<path fill="#f8f8f7" d="M392 479h5v5h-5z"/>
<path fill="#d7d7d7" d="M397 479h5v5h-5z"/>
<path fill="#f7f9f9" d="M402 479h5v5h-5z"/>
<path fill="#e8e7e5" d="M407 479h5v5h-5z"/>
<path fill="#d2d2d1" d="M412 479h5v5h-5z"/>
<path fill="#d7dadb" d="M417 479h5v5h-5z"/>
<path fill="#e5e5e5" d="M422 479h5v5h-5z"/>
<path fill="#e7e9ea" d="M427 479h5v5h-5z"/>
<path fill="#fdfefe" d="M432 479h5v5h-5z"/>
<path fill="#fcfbf9" d="M657 479h5v5h-5z"/>
<path fill="#d7d5d2" d="M662 479h5v5h-5z"/>
<path fill="#dad9da" d="M667 479h5v5h-5z"/>
<path fill="#dfdddc" d="M672 479h5v5h-5z"/>
<path fill="#e9e9e9" d="M677 479h5v5h-5z"/>
<path fill="#d7d6d4" d="M682 479h5v5h-5z"/>
<path fill="#e1e1e0" d="M687 479h5v5h-5z"/>
<path fill="#dcdcdb" d="M692 479h5v5h-5z"/>
<path fill="#e0dedc" d="M697 479h5v5h-5z"/>
<path fill="#d9dbdc" d="M702 479h5v5h-5z"/>
<path fill="#fcfdfe" d="M707 479h5v5h-5z"/>
<path fill="#e7f2ec" d="M317 484h5v5h-5z"/>
<path fill="#55a178" d="M322 484h5v5h-5z"/>
<path fill="#509e73" d="M327 484h5v5h-5z"/>
<path fill="#c4ddcf" d="M332 484h5v5h-5z"/>
<path fill="#e8f1eb" d="M337 484h5v5h-5z"/>
<path fill="#f2efeb" d="M357 484h5v5h-5z"/>
<path fill="#bdbcbc" d="M362 484h5v5h-5z"/>
<path fill="#bdbebe" d="M367 484h5v5h-5z"/>
<path fill="#c3c3c2" d="M372 484h5v5h-5z"/>
<path fill="#bdbec0" d="M377 484h5v5h-5z"/>
<path fill="#b9b7b6" d="M382 484h5v5h-5z"/>
<path fill="#bcc1c6" d="M387 484h5v5h-5z"/>
<path fill="#f6f7f7" d="M392 484h5v5h-5z"/>
<path fill="#d3d1d1" d="M397 484h5v5h-5z"/>
<path fill="#edeeef" d="M402 484h5v5h-5z"/>
<path fill="#cbc8c5" d="M407 484h5v5h-5z"/>
<path fill="#bfc2c2" d="M412 484h5v5h-5z"/>
<path fill="#c2c3c3" d="M417 484h5v5h-5z"/>
<path fill="#c7c6c5" d="M422 484h5v5h-5z"/>
<path fill="#caced2" d="M427 484h5v5h-5z"/>
<path fill="#fdfefe" d="M432 484h5v5h-5z"/>
<path fill="#fbfaf8" d="M657 484h5v5h-5z"/>
<path fill="#d9d7d4" d="M662 484h5v5h-5z"/>
<path fill="#d5d5d6" d="M667 484h5v5h-5z"/>
<path fill="#e5e3e2" d="M672 484h5v5h-5z"/>
<path fill="#dddcdc" d="M677 484h5v5h-5z"/>
<path fill="#d2d0ce" d="M682 484h5v5h-5z"/>
<path fill="#dfe1e1" d="M687 484h5v5h-5z"/>
<path fill="#dfdddb" d="M692 484h5v5h-5z"/>
<path fill="#e2e1de" d="M697 484h5v5h-5z"/>
<path fill="#d8dadb" d="M702 484h5v5h-5z"/>
<path fill="#fcfdfe" d="M707 484h5v5h-5z"/>
<path fill="#f5faf7" d="M317 489h5v5h-5z"/>
<path fill="#b6d5c4" d="M322 489h5v5h-5z"/>
<path fill="#b3d3c1" d="M327 489h5v5h-5z"/>
<path fill="#e7efeb" d="M332 489h5v5h-5z"/>
<path fill="#f4f6f5" d="M337 489h5v5h-5z"/>
<path fill="#fcfaf9" d="M357 489h5v5h-5z"/>
<path fill="#e9e8e8" d="M362 489h5v5h-5z"/>
<path fill="#eeeeef" d="M367 489h5v5h-5z"/>
<path fill="#ebeaeb" d="M372 489h5v5h-5z"/>
<path fill="#edecec" d="M377 489h5v5h-5z"/>
<path fill="#ebeced" d="M382 489h5v5h-5z"/>
<path fill="#eff0f0" d="M387 489h5v5h-5z"/>
<path fill="#f9f9f9" d="M392 489h5v5h-5z"/>
<path fill="#e9e8e8" d="M397 489h5v5h-5z"/>
<path fill="#f0f1f1" d="M402 489h5v5h-5z"/>
<path fill="#f0f0f0" d="M407 489h5v5h-5z"/>
<path fill="#ededed" d="M412 489h5v5h-5z"/>
<path fill="#ebebea" d="M417 489h5v5h-5z"/>
<path fill="#eceded" d="M422 489h5v5h-5z"/>
<path fill="#f1f2f3" d="M427 489h5v5h-5z"/>
<path fill="#f9f8f7" d="M662 489h5v5h-5z"/>
<path fill="#f9f9f9" d="M667 489h5v5h-5z"/>
<path fill="#f9f8f7" d="M672 489h5v5h-5z"/>
<path fill="#f8f8f9" d="M677 489h5v5h-5z"/>
<path fill="#fbfafa" d="M682 489h5v5h-5z"/>
<path fill="#fafafa" d="M687 489h5v5h-5z"/>
<path fill="#f6f6f5" d="M692 489h5v5h-5z"/>
<path fill="#f8f8f7" d="M697 489h5v5h-5z"/>
<path fill="#f9fafa" d="M702 489h5v5h-5z"/>
<path fill="#fdfdfd" d="M322 494h5v5h-5z"/>
<path fill="#fbfbfb" d="M327 494h5v5h-5z"/>
<path fill="#fbfbfb" d="M332 494h5v5h-5z"/>
<path fill="#fdfdfd" d="M337 494h5v5h-5z"/>
<path fill="#fbfbfa" d="M314 504h3v5h-3z"/>
<path fill="#fbfbfa" d="M317 504h5v5h-5z"/>
<path fill="#fbfbfa" d="M322 504h5v5h-5z"/>
<path fill="#fbfbfa" d="M327 504h5v5h-5z"/>
<path fill="#fbfbfa" d="M332 504h5v5h-5z"/>
<path fill="#fbfbfa" d="M337 504h5v5h-5z"/>
<path fill="#fbfbfa" d="M342 504h5v5h-5z"/>
<path fill="#fbfbfa" d="M347 504h5v5h-5z"/>
<path fill="#fbfbfa" d="M352 504h5v5h-5z"/>
<path fill="#fbfbfa" d="M357 504h5v5h-5z"/>
<path fill="#fbfbfa" d="M362 504h5v5h-5z"/>
<path fill="#fbfbfa" d="M367 504h5v5h-5z"/>
<path fill="#fbfbfa" d="M372 504h5v5h-5z"/>
<path fill="#fbfbfa" d="M377 504h5v5h-5z"/>
<path fill="#fbfbfa" d="M382 504h5v5h-5z"/>
<path fill="#fbfbfa" d="M387 504h5v5h-5z"/>
<path fill="#fbfbfa" d="M392 504h5v5h-5z"/>
<path fill="#fbfbfa" d="M397 504h5v5h-5z"/>
<path fill="#fbfbfa" d="M402 504h5v5h-5z"/>
<path fill="#fbfbfa" d="M407 504h5v5h-5z"/>
<path fill="#fbfbfa" d="M412 504h5v5h-5z"/>
<path fill="#fbfbfa" d="M417 504h5v5h-5z"/>
<path fill="#fbfbfa" d="M422 504h5v5h-5z"/>
<path fill="#fbfbfa" d="M427 504h5v5h-5z"/>
<path fill="#fbfbfa" d="M432 504h5v5h-5z"/>
<path fill="#fbfbfa" d="M437 504h5v5h-5z"/>
<path fill="#fbfbfa" d="M442 504h5v5h-5z"/>
<path fill="#fbfbfa" d="M447 504h5v5h-5z"/>
<path fill="#fbfbfa" d="M452 504h5v5h-5z"/>
<path fill="#fbfbfa" d="M457 504h5v5h-5z"/>
<path fill="#fbfbfa" d="M462 504h5v5h-5z"/>
<path fill="#fbfbfa" d="M467 504h5v5h-5z"/>
<path fill="#fbfbfa" d="M472 504h5v5h-5z"/>
<path fill="#fbfbfa" d="M477 504h5v5h-5z"/>
<path fill="#fbfbfa" d="M482 504h5v5h-5z"/>
<path fill="#fbfbfa" d="M487 504h5v5h-5z"/>
<path fill="#fbfbfa" d="M492 504h5v5h-5z"/>
<path fill="#fbfbfa" d="M497 504h5v5h-5z"/>
<path fill="#fbfbfa" d="M502 504h5v5h-5z"/>
<path fill="#fbfbfa" d="M507 504h5v5h-5z"/>
<path fill="#fbfbfa" d="M512 504h5v5h-5z"/>
<path fill="#fbfbfa" d="M517 504h5v5h-5z"/>
<path fill="#fbfbfa" d="M522 504h5v5h-5z"/>
<path fill="#fbfbfa" d="M527 504h5v5h-5z"/>
<path fill="#fbfbfa" d="M532 504h5v5h-5z"/>
<path fill="#fbfbfa" d="M537 504h5v5h-5z"/>
<path fill="#fbfbfa" d="M542 504h5v5h-5z"/>
<path fill="#fbfbfa" d="M547 504h5v5h-5z"/>
<path fill="#fbfbfa" d="M552 504h5v5h-5z"/>
<path fill="#fbfbfa" d="M557 504h5v5h-5z"/>
<path fill="#fbfbfa" d="M562 504h5v5h-5z"/>
<path fill="#fbfbfa" d="M567 504h5v5h-5z"/>
<path fill="#fbfbfa" d="M572 504h5v5h-5z"/>
<path fill="#fbfbfa" d="M577 504h5v5h-5z"/>
<path fill="#fbfbfa" d="M582 504h5v5h-5z"/>
<path fill="#fbfbfa" d="M587 504h5v5h-5z"/>
<path fill="#fbfbfa" d="M592 504h5v5h-5z"/>
<path fill="#fbfbfa" d="M597 504h5v5h-5z"/>
<path fill="#fbfbfa" d="M602 504h5v5h-5z"/>
<path fill="#fbfbfa" d="M607 504h5v5h-5z"/>
<path fill="#fbfbfa" d="M612 504h5v5h-5z"/>
<path fill="#fbfbfa" d="M617 504h5v5h-5z"/>
<path fill="#fbfbfa" d="M622 504h5v5h-5z"/>
<path fill="#fbfbfa" d="M627 504h5v5h-5z"/>
<path fill="#fbfbfa" d="M632 504h5v5h-5z"/>
<path fill="#fbfbfa" d="M637 504h5v5h-5z"/>
<path fill="#fbfbfa" d="M642 504h5v5h-5z"/>
<path fill="#fbfbfa" d="M647 504h5v5h-5z"/>
<path fill="#fbfbfa" d="M652 504h5v5h-5z"/>
<path fill="#fbfbfa" d="M657 504h5v5h-5z"/>
<path fill="#fbfbfa" d="M662 504h5v5h-5z"/>
<path fill="#fbfbfa" d="M667 504h5v5h-5z"/>
<path fill="#fbfbfa" d="M672 504h5v5h-5z"/>
<path fill="#fbfbfa" d="M677 504h5v5h-5z"/>
<path fill="#fbfbfa" d="M682 504h5v5h-5z"/>
<path fill="#fbfbfa" d="M687 504h5v5h-5z"/>
<path fill="#fbfbfa" d="M692 504h5v5h-5z"/>
<path fill="#fbfbfa" d="M697 504h5v5h-5z"/>
<path fill="#fbfbfa" d="M702 504h5v5h-5z"/>
<path fill="#fbfbfa" d="M707 504h5v5h-5z"/>
<path fill="#fbfbfa" d="M712 504h5v5h-5z"/>
<path fill="#fbfbfa" d="M717 504h5v5h-5z"/>
<path fill="#fbfbfa" d="M722 504h5v5h-5z"/>
<path fill="#fbfbfa" d="M727 504h5v5h-5z"/>
<path fill="#fbfbfa" d="M732 504h5v5h-5z"/>
<path fill="#fbfbfa" d="M737 504h5v5h-5z"/>
<path fill="#f7faf9" d="M322 514h5v5h-5z"/>
<path fill="#f4f7f5" d="M327 514h5v5h-5z"/>
<path fill="#f8f9f9" d="M332 514h5v5h-5z"/>
<path fill="#fcfcfc" d="M337 514h5v5h-5z"/>
<path fill="#eff6f2" d="M317 519h5v5h-5z"/>
<path fill="#8bbea2" d="M322 519h5v5h-5z"/>
<path fill="#88bc9f" d="M327 519h5v5h-5z"/>
<path fill="#ddeae2" d="M332 519h5v5h-5z"/>
<path fill="#f1f5f2" d="M337 519h5v5h-5z"/>
<path fill="#fcfaf9" d="M357 519h5v5h-5z"/>
<path fill="#e8e7e7" d="M362 519h5v5h-5z"/>
<path fill="#f3f4f5" d="M367 519h5v5h-5z"/>
<path fill="#fafafb" d="M372 519h5v5h-5z"/>
<path fill="#fbfbfb" d="M377 519h5v5h-5z"/>
<path fill="#f3f2f1" d="M382 519h5v5h-5z"/>
<path fill="#f3f5f6" d="M387 519h5v5h-5z"/>
<path fill="#fcfcfb" d="M392 519h5v5h-5z"/>
<path fill="#ececec" d="M397 519h5v5h-5z"/>
<path fill="#f9f9fb" d="M402 519h5v5h-5z"/>
<path fill="#fcfcfc" d="M407 519h5v5h-5z"/>
<path fill="#efefee" d="M412 519h5v5h-5z"/>
<path fill="#f5f7f8" d="M417 519h5v5h-5z"/>
<path fill="#fbfcfc" d="M422 519h5v5h-5z"/>
<path fill="#fcfcfd" d="M427 519h5v5h-5z"/>
<path fill="#fefdfd" d="M657 519h5v5h-5z"/>
<path fill="#edecea" d="M662 519h5v5h-5z"/>
<path fill="#eaeaea" d="M667 519h5v5h-5z"/>
<path fill="#e4e4e3" d="M672 519h5v5h-5z"/>
<path fill="#ededed" d="M677 519h5v5h-5z"/>
<path fill="#ebeae9" d="M682 519h5v5h-5z"/>
<path fill="#eeeeee" d="M687 519h5v5h-5z"/>
<path fill="#eae9e8" d="M692 519h5v5h-5z"/>
<path fill="#f7f8f9" d="M697 519h5v5h-5z"/>
<path fill="#e6f1eb" d="M317 524h5v5h-5z"/>
<path fill="#53a076" d="M322 524h5v5h-5z"/>
<path fill="#4e9d71" d="M327 524h5v5h-5z"/>
<path fill="#c3dccd" d="M332 524h5v5h-5z"/>
<path fill="#e7f0eb" d="M337 524h5v5h-5z"/>
<path fill="#f2efea" d="M357 524h5v5h-5z"/>
<path fill="#b9b8b8" d="M362 524h5v5h-5z"/>
<path fill="#c4c5c7" d="M367 524h5v5h-5z"/>
<path fill="#cbcacb" d="M372 524h5v5h-5z"/>
<path fill="#c9caca" d="M377 524h5v5h-5z"/>
<path fill="#c0c0be" d="M382 524h5v5h-5z"/>
<path fill="#c6cace" d="M387 524h5v5h-5z"/>
<path fill="#f5f5f5" d="M392 524h5v5h-5z"/>
<path fill="#d5d3d1" d="M397 524h5v5h-5z"/>
<path fill="#e8ebed" d="M402 524h5v5h-5z"/>
<path fill="#d5d2d0" d="M407 524h5v5h-5z"/>
<path fill="#c3c4c3" d="M412 524h5v5h-5z"/>
<path fill="#c4c7c8" d="M417 524h5v5h-5z"/>
<path fill="#d3d3d2" d="M422 524h5v5h-5z"/>
<path fill="#d3d7da" d="M427 524h5v5h-5z"/>
<path fill="#fdfefe" d="M432 524h5v5h-5z"/>
<path fill="#ebe8e5" d="M662 524h5v5h-5z"/>
<path fill="#e0dfdd" d="M667 524h5v5h-5z"/>
<path fill="#d3d2d0" d="M672 524h5v5h-5z"/>
<path fill="#cececd" d="M677 524h5v5h-5z"/>
<path fill="#e2e2e1" d="M682 524h5v5h-5z"/>
<path fill="#dddddc" d="M687 524h5v5h-5z"/>
<path fill="#d4d2d0" d="M692 524h5v5h-5z"/>
<path fill="#e5e8eb" d="M697 524h5v5h-5z"/>
<path fill="#eaf3ee" d="M317 529h5v5h-5z"/>
<path fill="#68ab87" d="M322 529h5v5h-5z"/>
<path fill="#65a983" d="M327 529h5v5h-5z"/>
<path fill="#cde2d6" d="M332 529h5v5h-5z"/>
<path fill="#ebf2ee" d="M337 529h5v5h-5z"/>
<path fill="#f5f2ef" d="M357 529h5v5h-5z"/>
<path fill="#c9c8c8" d="M362 529h5v5h-5z"/>
<path fill="#cbcbcb" d="M367 529h5v5h-5z"/>
<path fill="#cbcbcb" d="M372 529h5v5h-5z"/>
<path fill="#cacaca" d="M377 529h5v5h-5z"/>
<path fill="#c6c6c6" d="M382 529h5v5h-5z"/>
<path fill="#cbced1" d="M387 529h5v5h-5z"/>
<path fill="#f0efee" d="M392 529h5v5h-5z"/>
<path fill="#cfd0d0" d="M397 529h5v5h-5z"/>
<path fill="#e8e8e9" d="M402 529h5v5h-5z"/>
<path fill="#d4d3d1" d="M407 529h5v5h-5z"/>
<path fill="#cbcdcd" d="M412 529h5v5h-5z"/>
<path fill="#cdcdcd" d="M417 529h5v5h-5z"/>
<path fill="#cdcdcd" d="M422 529h5v5h-5z"/>
<path fill="#d5d8db" d="M427 529h5v5h-5z"/>
<path fill="#fdfdfe" d="M432 529h5v5h-5z"/>
<path fill="#f1efee" d="M662 529h5v5h-5z"/>
<path fill="#efeeed" d="M667 529h5v5h-5z"/>
<path fill="#e8e6e4" d="M672 529h5v5h-5z"/>
<path fill="#e0e0e0" d="M677 529h5v5h-5z"/>
<path fill="#edeceb" d="M682 529h5v5h-5z"/>
<path fill="#e1e1e1" d="M687 529h5v5h-5z"/>
<path fill="#e2e0df" d="M692 529h5v5h-5z"/>
<path fill="#f2f4f6" d="M697 529h5v5h-5z"/>
<path fill="#fcfdfd" d="M317 534h5v5h-5z"/>
<path fill="#e6f0eb" d="M322 534h5v5h-5z"/>
<path fill="#e3ece7" d="M327 534h5v5h-5z"/>
<path fill="#f3f5f4" d="M332 534h5v5h-5z"/>
<path fill="#f8f9f8" d="M337 534h5v5h-5z"/>
<path fill="#faf9f9" d="M362 534h5v5h-5z"/>
<path fill="#fcfcfc" d="M367 534h5v5h-5z"/>
<path fill="#fbfbfb" d="M372 534h5v5h-5z"/>
<path fill="#fbfbfb" d="M377 534h5v5h-5z"/>
<path fill="#fbfbfc" d="M382 534h5v5h-5z"/>
<path fill="#fcfcfc" d="M387 534h5v5h-5z"/>
<path fill="#fdfdfd" d="M392 534h5v5h-5z"/>
<path fill="#f9f9f9" d="M397 534h5v5h-5z"/>
<path fill="#fbfbfc" d="M402 534h5v5h-5z"/>
<path fill="#fcfcfc" d="M407 534h5v5h-5z"/>
<path fill="#fbfbfb" d="M412 534h5v5h-5z"/>
<path fill="#fafafa" d="M417 534h5v5h-5z"/>
<path fill="#fbfbfb" d="M422 534h5v5h-5z"/>
<path fill="#fcfcfd" d="M427 534h5v5h-5z"/>
<path fill="#fefefe" d="M687 534h5v5h-5z"/>
<path fill="#fefefe" d="M692 534h5v5h-5z"/>
<path fill="#fbfbfa" d="M314 549h3v5h-3z"/>
<path fill="#fbfbfa" d="M317 549h5v5h-5z"/>
<path fill="#fbfbfa" d="M322 549h5v5h-5z"/>
<path fill="#fbfbfa" d="M327 549h5v5h-5z"/>
<path fill="#fbfbfa" d="M332 549h5v5h-5z"/>
<path fill="#fbfbfa" d="M337 549h5v5h-5z"/>
<path fill="#fbfbfa" d="M342 549h5v5h-5z"/>
<path fill="#fbfbfa" d="M347 549h5v5h-5z"/>
<path fill="#fbfbfa" d="M352 549h5v5h-5z"/>
<path fill="#fbfbfa" d="M357 549h5v5h-5z"/>
<path fill="#fbfbfa" d="M362 549h5v5h-5z"/>
<path fill="#fbfbfa" d="M367 549h5v5h-5z"/>
<path fill="#fbfbfa" d="M372 549h5v5h-5z"/>
<path fill="#fbfbfa" d="M377 549h5v5h-5z"/>
<path fill="#fbfbfa" d="M382 549h5v5h-5z"/>
<path fill="#fbfbfa" d="M387 549h5v5h-5z"/>
<path fill="#fbfbfa" d="M392 549h5v5h-5z"/>
<path fill="#fbfbfa" d="M397 549h5v5h-5z"/>
<path fill="#fbfbfa" d="M402 549h5v5h-5z"/>
<path fill="#fbfbfa" d="M407 549h5v5h-5z"/>
<path fill="#fbfbfa" d="M412 549h5v5h-5z"/>
<path fill="#fbfbfa" d="M417 549h5v5h-5z"/>
<path fill="#fbfbfa" d="M422 549h5v5h-5z"/>
<path fill="#fbfbfa" d="M427 549h5v5h-5z"/>
<path fill="#fbfbfa" d="M432 549h5v5h-5z"/>
<path fill="#fbfbfa" d="M437 549h5v5h-5z"/>
<path fill="#fbfbfa" d="M442 549h5v5h-5z"/>
<path fill="#fbfbfa" d="M447 549h5v5h-5z"/>
<path fill="#fbfbfa" d="M452 549h5v5h-5z"/>
<path fill="#fbfbfa" d="M457 549h5v5h-5z"/>
<path fill="#fbfbfa" d="M462 549h5v5h-5z"/>
<path fill="#fbfbfa" d="M467 549h5v5h-5z"/>
<path fill="#fbfbfa" d="M472 549h5v5h-5z"/>
<path fill="#fbfbfa" d="M477 549h5v5h-5z"/>
<path fill="#fbfbfa" d="M482 549h5v5h-5z"/>
<path fill="#fbfbfa" d="M487 549h5v5h-5z"/>
<path fill="#fbfbfa" d="M492 549h5v5h-5z"/>
<path fill="#fbfbfa" d="M497 549h5v5h-5z"/>
<path fill="#fbfbfa" d="M502 549h5v5h-5z"/>
<path fill="#fbfbfa" d="M507 549h5v5h-5z"/>
<path fill="#fbfbfa" d="M512 549h5v5h-5z"/>
<path fill="#fbfbfa" d="M517 549h5v5h-5z"/>
<path fill="#fbfbfa" d="M522 549h5v5h-5z"/>
<path fill="#fbfbfa" d="M527 549h5v5h-5z"/>
<path fill="#fbfbfa" d="M532 549h5v5h-5z"/>
<path fill="#fbfbfa" d="M537 549h5v5h-5z"/>
<path fill="#fbfbfa" d="M542 549h5v5h-5z"/>
<path fill="#fbfbfa" d="M547 549h5v5h-5z"/>
<path fill="#fbfbfa" d="M552 549h5v5h-5z"/>
<path fill="#fbfbfa" d="M557 549h5v5h-5z"/>
<path fill="#fbfbfa" d="M562 549h5v5h-5z"/>
<path fill="#fbfbfa" d="M567 549h5v5h-5z"/>
<path fill="#fbfbfa" d="M572 549h5v5h-5z"/>
<path fill="#fbfbfa" d="M577 549h5v5h-5z"/>
<path fill="#fbfbfa" d="M582 549h5v5h-5z"/>
<path fill="#fbfbfa" d="M587 549h5v5h-5z"/>
<path fill="#fbfbfa" d="M592 549h5v5h-5z"/>
<path fill="#fbfbfa" d="M597 549h5v5h-5z"/>
<path fill="#fbfbfa" d="M602 549h5v5h-5z"/>
<path fill="#fbfbfa" d="M607 549h5v5h-5z"/>
<path fill="#fbfbfa" d="M612 549h5v5h-5z"/>
<path fill="#fbfbfa" d="M617 549h5v5h-5z"/>
<path fill="#fbfbfa" d="M622 549h5v5h-5z"/>
<path fill="#fbfbfa" d="M627 549h5v5h-5z"/>
<path fill="#fbfbfa" d="M632 549h5v5h-5z"/>
<path fill="#fbfbfa" d="M637 549h5v5h-5z"/>
<path fill="#fbfbfa" d="M642 549h5v5h-5z"/>
<path fill="#fbfbfa" d="M647 549h5v5h-5z"/>
<path fill="#fbfbfa" d="M652 549h5v5h-5z"/>
<path fill="#fbfbfa" d="M657 549h5v5h-5z"/>
<path fill="#fbfbfa" d="M662 549h5v5h-5z"/>
<path fill="#fbfbfa" d="M667 549h5v5h-5z"/>
<path fill="#fbfbfa" d="M672 549h5v5h-5z"/>
<path fill="#fbfbfa" d="M677 549h5v5h-5z"/>
<path fill="#fbfbfa" d="M682 549h5v5h-5z"/>
<path fill="#fbfbfa" d="M687 549h5v5h-5z"/>
<path fill="#fbfbfa" d="M692 549h5v5h-5z"/>
<path fill="#fbfbfa" d="M697 549h5v5h-5z"/>
<path fill="#fbfbfa" d="M702 549h5v5h-5z"/>
<path fill="#fbfbfa" d="M707 549h5v5h-5z"/>
<path fill="#fbfbfa" d="M712 549h5v5h-5z"/>
<path fill="#fbfbfa" d="M717 549h5v5h-5z"/>
<path fill="#fbfbfa" d="M722 549h5v5h-5z"/>
<path fill="#fbfbfa" d="M727 549h5v5h-5z"/>
<path fill="#fbfbfa" d="M732 549h5v5h-5z"/>
<path fill="#fbfbfa" d="M737 549h5v5h-5z"/>
<path fill="#fbfdfc" d="M317 559h5v5h-5z"/>
<path fill="#dceae3" d="M322 559h5v5h-5z"/>
<path fill="#d9e7df" d="M327 559h5v5h-5z"/>
<path fill="#f2f4f3" d="M332 559h5v5h-5z"/>
<path fill="#f8f9f8" d="M337 559h5v5h-5z"/>
<path fill="#fdfdfd" d="M362 559h5v5h-5z"/>
<path fill="#fefefe" d="M382 559h5v5h-5z"/>
<path fill="#fefefe" d="M397 559h5v5h-5z"/>
<path fill="#fdfdfd" d="M412 559h5v5h-5z"/>
<path fill="#fcfbfb" d="M662 559h5v5h-5z"/>
<path fill="#fcfcfb" d="M667 559h5v5h-5z"/>
<path fill="#fbfbfa" d="M672 559h5v5h-5z"/>
<path fill="#fdfdfc" d="M677 559h5v5h-5z"/>
<path fill="#fbfbfb" d="M682 559h5v5h-5z"/>
<path fill="#fdfdfd" d="M687 559h5v5h-5z"/>
<path fill="#fcfcfc" d="M692 559h5v5h-5z"/>
<path fill="#e9f3ed" d="M317 564h5v5h-5z"/>
<path fill="#62a882" d="M322 564h5v5h-5z"/>
<path fill="#5ea57e" d="M327 564h5v5h-5z"/>
<path fill="#cce1d5" d="M332 564h5v5h-5z"/>
<path fill="#ebf2ee" d="M337 564h5v5h-5z"/>
<path fill="#f7f5f2" d="M357 564h5v5h-5z"/>
<path fill="#cfcfcf" d="M362 564h5v5h-5z"/>
<path fill="#e0e1e4" d="M367 564h5v5h-5z"/>
<path fill="#eaeaea" d="M372 564h5v5h-5z"/>
<path fill="#ececec" d="M377 564h5v5h-5z"/>
<path fill="#e0e0de" d="M382 564h5v5h-5z"/>
<path fill="#e3e6e8" d="M387 564h5v5h-5z"/>
<path fill="#f8f7f6" d="M392 564h5v5h-5z"/>
<path fill="#d9d8d7" d="M397 564h5v5h-5z"/>
<path fill="#eff1f3" d="M402 564h5v5h-5z"/>
<path fill="#f1f0ef" d="M407 564h5v5h-5z"/>
<path fill="#dcdcdb" d="M412 564h5v5h-5z"/>
<path fill="#e3e5e6" d="M417 564h5v5h-5z"/>
<path fill="#efefef" d="M422 564h5v5h-5z"/>
<path fill="#f1f2f2" d="M427 564h5v5h-5z"/>
<path fill="#fefdfd" d="M657 564h5v5h-5z"/>
<path fill="#e8e6e3" d="M662 564h5v5h-5z"/>
<path fill="#e0e0de" d="M667 564h5v5h-5z"/>
<path fill="#d5d4d2" d="M672 564h5v5h-5z"/>
<path fill="#dddedd" d="M677 564h5v5h-5z"/>
<path fill="#e2e1df" d="M682 564h5v5h-5z"/>
<path fill="#e1e2e1" d="M687 564h5v5h-5z"/>
<path fill="#dbdad8" d="M692 564h5v5h-5z"/>
<path fill="#eef0f2" d="M697 564h5v5h-5z"/>
<path fill="#e6f1eb" d="M317 569h5v5h-5z"/>
<path fill="#53a076" d="M322 569h5v5h-5z"/>
<path fill="#4e9d71" d="M327 569h5v5h-5z"/>
<path fill="#c3dccd" d="M332 569h5v5h-5z"/>
<path fill="#e7f0eb" d="M337 569h5v5h-5z"/>
<path fill="#f2eeea" d="M357 569h5v5h-5z"/>
<path fill="#bab9b9" d="M362 569h5v5h-5z"/>
<path fill="#bcbdbe" d="M367 569h5v5h-5z"/>
<path fill="#c3c3c2" d="M372 569h5v5h-5z"/>
<path fill="#bdbec0" d="M377 569h5v5h-5z"/>
<path fill="#b8b6b5" d="M382 569h5v5h-5z"/>
<path fill="#bcc0c5" d="M387 569h5v5h-5z"/>
<path fill="#f4f4f4" d="M392 569h5v5h-5z"/>
<path fill="#cecbc9" d="M397 569h5v5h-5z"/>
<path fill="#dee1e4" d="M402 569h5v5h-5z"/>
<path fill="#cbc8c4" d="M407 569h5v5h-5z"/>
<path fill="#bec0c0" d="M412 569h5v5h-5z"/>
<path fill="#c0c2c2" d="M417 569h5v5h-5z"/>
<path fill="#c9c8c6" d="M422 569h5v5h-5z"/>
<path fill="#c9cdd1" d="M427 569h5v5h-5z"/>
<path fill="#fdfefe" d="M432 569h5v5h-5z"/>
<path fill="#eae8e6" d="M662 569h5v5h-5z"/>
<path fill="#e4e3e1" d="M667 569h5v5h-5z"/>
<path fill="#dad9d6" d="M672 569h5v5h-5z"/>
<path fill="#cdcdcc" d="M677 569h5v5h-5z"/>
<path fill="#e6e6e4" d="M682 569h5v5h-5z"/>
<path fill="#dddddc" d="M687 569h5v5h-5z"/>
<path fill="#d6d4d1" d="M692 569h5v5h-5z"/>
<path fill="#e6e9ec" d="M697 569h5v5h-5z"/>
<path fill="#f1f7f4" d="M317 574h5v5h-5z"/>
<path fill="#98c5ad" d="M322 574h5v5h-5z"/>
<path fill="#96c3aa" d="M327 574h5v5h-5z"/>
<path fill="#dfebe4" d="M332 574h5v5h-5z"/>
<path fill="#f1f5f2" d="M337 574h5v5h-5z"/>
<path fill="#f9f8f6" d="M357 574h5v5h-5z"/>
<path fill="#dddcdc" d="M362 574h5v5h-5z"/>
<path fill="#e3e3e3" d="M367 574h5v5h-5z"/>
<path fill="#dfdfdf" d="M372 574h5v5h-5z"/>
<path fill="#e1e0e0" d="M377 574h5v5h-5z"/>
<path fill="#dfe0e1" d="M382 574h5v5h-5z"/>
<path fill="#e4e5e7" d="M387 574h5v5h-5z"/>
<path fill="#f5f5f5" d="M392 574h5v5h-5z"/>
<path fill="#e1e0e0" d="M397 574h5v5h-5z"/>
<path fill="#e9eaea" d="M402 574h5v5h-5z"/>
<path fill="#e7e6e6" d="M407 574h5v5h-5z"/>
<path fill="#e1e2e2" d="M412 574h5v5h-5z"/>
<path fill="#e0e0df" d="M417 574h5v5h-5z"/>
<path fill="#e1e1e2" d="M422 574h5v5h-5z"/>
<path fill="#e8eaeb" d="M427 574h5v5h-5z"/>
<path fill="#fdfefe" d="M432 574h5v5h-5z"/>
<path fill="#f9f8f8" d="M662 574h5v5h-5z"/>
<path fill="#f8f8f7" d="M667 574h5v5h-5z"/>
<path fill="#f4f3f2" d="M672 574h5v5h-5z"/>
<path fill="#f2f2f2" d="M677 574h5v5h-5z"/>
<path fill="#f6f5f4" d="M682 574h5v5h-5z"/>
<path fill="#efefef" d="M687 574h5v5h-5z"/>
<path fill="#f0f0ef" d="M692 574h5v5h-5z"/>
<path fill="#fafbfc" d="M697 574h5v5h-5z"/>
<path fill="#fafbfb" d="M322 579h5v5h-5z"/>
<path fill="#f7f8f8" d="M327 579h5v5h-5z"/>
<path fill="#f9f9f9" d="M332 579h5v5h-5z"/>
<path fill="#fcfcfc" d="M337 579h5v5h-5z"/>
<path fill="#fcfcfc" d="M314 589h3v5h-3z"/>
<path fill="#fcfcfc" d="M317 589h5v5h-5z"/>
<path fill="#fcfcfc" d="M322 589h5v5h-5z"/>
<path fill="#fcfcfc" d="M327 589h5v5h-5z"/>
<path fill="#fcfcfc" d="M332 589h5v5h-5z"/>
<path fill="#fcfcfc" d="M337 589h5v5h-5z"/>
<path fill="#fcfcfc" d="M342 589h5v5h-5z"/>
<path fill="#fcfcfc" d="M347 589h5v5h-5z"/>
<path fill="#fcfcfc" d="M352 589h5v5h-5z"/>
<path fill="#fcfcfc" d="M357 589h5v5h-5z"/>
<path fill="#fcfcfc" d="M362 589h5v5h-5z"/>
<path fill="#fcfcfc" d="M367 589h5v5h-5z"/>
<path fill="#fcfcfc" d="M372 589h5v5h-5z"/>
<path fill="#fcfcfc" d="M377 589h5v5h-5z"/>
<path fill="#fcfcfc" d="M382 589h5v5h-5z"/>
<path fill="#fcfcfc" d="M387 589h5v5h-5z"/>
<path fill="#fcfcfc" d="M392 589h5v5h-5z"/>
<path fill="#fcfcfc" d="M397 589h5v5h-5z"/>
<path fill="#fcfcfc" d="M402 589h5v5h-5z"/>
<path fill="#fcfcfc" d="M407 589h5v5h-5z"/>
<path fill="#fcfcfc" d="M412 589h5v5h-5z"/>
<path fill="#fcfcfc" d="M417 589h5v5h-5z"/>
<path fill="#fcfcfc" d="M422 589h5v5h-5z"/>
<path fill="#fcfcfc" d="M427 589h5v5h-5z"/>
<path fill="#fcfcfc" d="M432 589h5v5h-5z"/>
<path fill="#fcfcfc" d="M437 589h5v5h-5z"/>
<path fill="#fcfcfc" d="M442 589h5v5h-5z"/>
<path fill="#fcfcfc" d="M447 589h5v5h-5z"/>
<path fill="#fcfcfc" d="M452 589h5v5h-5z"/>
<path fill="#fcfcfc" d="M457 589h5v5h-5z"/>
<path fill="#fcfcfc" d="M462 589h5v5h-5z"/>
<path fill="#fcfcfc" d="M467 589h5v5h-5z"/>
<path fill="#fcfcfc" d="M472 589h5v5h-5z"/>
<path fill="#fcfcfc" d="M477 589h5v5h-5z"/>
<path fill="#fcfcfc" d="M482 589h5v5h-5z"/>
<path fill="#fcfcfc" d="M487 589h5v5h-5z"/>
<path fill="#fcfcfc" d="M492 589h5v5h-5z"/>
<path fill="#fcfcfc" d="M497 589h5v5h-5z"/>
<path fill="#fcfcfc" d="M502 589h5v5h-5z"/>
<path fill="#fcfcfc" d="M507 589h5v5h-5z"/>
<path fill="#fcfcfc" d="M512 589h5v5h-5z"/>
<path fill="#fcfcfc" d="M517 589h5v5h-5z"/>
<path fill="#fcfcfc" d="M522 589h5v5h-5z"/>
<path fill="#fcfcfc" d="M527 589h5v5h-5z"/>
<path fill="#fcfcfc" d="M532 589h5v5h-5z"/>
<path fill="#fcfcfc" d="M537 589h5v5h-5z"/>
<path fill="#fcfcfc" d="M542 589h5v5h-5z"/>
<path fill="#fcfcfc" d="M547 589h5v5h-5z"/>
<path fill="#fcfcfc" d="M552 589h5v5h-5z"/>
<path fill="#fcfcfc" d="M557 589h5v5h-5z"/>
<path fill="#fcfcfc" d="M562 589h5v5h-5z"/>
<path fill="#fcfcfc" d="M567 589h5v5h-5z"/>
<path fill="#fcfcfc" d="M572 589h5v5h-5z"/>
<path fill="#fcfcfc" d="M577 589h5v5h-5z"/>
<path fill="#fcfcfc" d="M582 589h5v5h-5z"/>
<path fill="#fcfcfc" d="M587 589h5v5h-5z"/>
<path fill="#fcfcfc" d="M592 589h5v5h-5z"/>
<path fill="#fcfcfc" d="M597 589h5v5h-5z"/>
<path fill="#fcfcfc" d="M602 589h5v5h-5z"/>
<path fill="#fcfcfc" d="M607 589h5v5h-5z"/>
<path fill="#fcfcfc" d="M612 589h5v5h-5z"/>
<path fill="#fcfcfc" d="M617 589h5v5h-5z"/>
<path fill="#fcfcfc" d="M622 589h5v5h-5z"/>
<path fill="#fcfcfc" d="M627 589h5v5h-5z"/>
<path fill="#fcfcfc" d="M632 589h5v5h-5z"/>
<path fill="#fcfcfc" d="M637 589h5v5h-5z"/>
<path fill="#fcfcfc" d="M642 589h5v5h-5z"/>
<path fill="#fcfcfc" d="M647 589h5v5h-5z"/>
<path fill="#fcfcfc" d="M652 589h5v5h-5z"/>
<path fill="#fcfcfc" d="M657 589h5v5h-5z"/>
<path fill="#fcfcfc" d="M662 589h5v5h-5z"/>
<path fill="#fcfcfc" d="M667 589h5v5h-5z"/>
<path fill="#fcfcfc" d="M672 589h5v5h-5z"/>
<path fill="#fcfcfc" d="M677 589h5v5h-5z"/>
<path fill="#fcfcfc" d="M682 589h5v5h-5z"/>
<path fill="#fcfcfc" d="M687 589h5v5h-5z"/>
<path fill="#fcfcfc" d="M692 589h5v5h-5z"/>
<path fill="#fcfcfc" d="M697 589h5v5h-5z"/>
<path fill="#fcfcfc" d="M702 589h5v5h-5z"/>
<path fill="#fcfcfc" d="M707 589h5v5h-5z"/>
<path fill="#fcfcfc" d="M712 589h5v5h-5z"/>
<path fill="#fcfcfc" d="M717 589h5v5h-5z"/>
<path fill="#fcfcfc" d="M722 589h5v5h-5z"/>
<path fill="#fcfcfc" d="M727 589h5v5h-5z"/>
<path fill="#fcfcfc" d="M732 589h5v5h-5z"/>
<path fill="#fcfcfc" d="M737 589h5v5h-5z"/>
<path fill="#fdfdfd" d="M314 594h3v5h-3z"/>
<path fill="#fdfdfd" d="M317 594h5v5h-5z"/>
<path fill="#fdfdfd" d="M322 594h5v5h-5z"/>
<path fill="#fdfdfd" d="M327 594h5v5h-5z"/>
<path fill="#fdfdfd" d="M332 594h5v5h-5z"/>
<path fill="#fdfdfd" d="M337 594h5v5h-5z"/>
<path fill="#fdfdfd" d="M342 594h5v5h-5z"/>
<path fill="#fdfdfd" d="M347 594h5v5h-5z"/>
<path fill="#fdfdfd" d="M352 594h5v5h-5z"/>
<path fill="#fdfdfd" d="M357 594h5v5h-5z"/>
<path fill="#fdfdfd" d="M362 594h5v5h-5z"/>
<path fill="#fdfdfd" d="M367 594h5v5h-5z"/>
<path fill="#fdfdfd" d="M372 594h5v5h-5z"/>
<path fill="#fdfdfd" d="M377 594h5v5h-5z"/>
<path fill="#fdfdfd" d="M382 594h5v5h-5z"/>
<path fill="#fdfdfd" d="M387 594h5v5h-5z"/>
<path fill="#fdfdfd" d="M392 594h5v5h-5z"/>
<path fill="#fdfdfd" d="M397 594h5v5h-5z"/>
<path fill="#fdfdfd" d="M402 594h5v5h-5z"/>
<path fill="#fdfdfd" d="M407 594h5v5h-5z"/>
<path fill="#fdfdfd" d="M412 594h5v5h-5z"/>
<path fill="#fdfdfd" d="M417 594h5v5h-5z"/>
<path fill="#fdfdfd" d="M422 594h5v5h-5z"/>
<path fill="#fdfdfd" d="M427 594h5v5h-5z"/>
<path fill="#fdfdfd" d="M432 594h5v5h-5z"/>
<path fill="#fdfdfd" d="M437 594h5v5h-5z"/>
<path fill="#fdfdfd" d="M442 594h5v5h-5z"/>
<path fill="#fdfdfd" d="M447 594h5v5h-5z"/>
<path fill="#fdfdfd" d="M452 594h5v5h-5z"/>
<path fill="#fdfdfd" d="M457 594h5v5h-5z"/>
<path fill="#fdfdfd" d="M462 594h5v5h-5z"/>
<path fill="#fdfdfd" d="M467 594h5v5h-5z"/>
<path fill="#fdfdfd" d="M472 594h5v5h-5z"/>
<path fill="#fdfdfd" d="M477 594h5v5h-5z"/>
<path fill="#fdfdfd" d="M482 594h5v5h-5z"/>
<path fill="#fdfdfd" d="M487 594h5v5h-5z"/>
<path fill="#fdfdfd" d="M492 594h5v5h-5z"/>
<path fill="#fdfdfd" d="M497 594h5v5h-5z"/>
<path fill="#fdfdfd" d="M502 594h5v5h-5z"/>
<path fill="#fdfdfd" d="M507 594h5v5h-5z"/>
<path fill="#fdfdfd" d="M512 594h5v5h-5z"/>
<path fill="#fdfdfd" d="M517 594h5v5h-5z"/>
<path fill="#fdfdfd" d="M522 594h5v5h-5z"/>
<path fill="#fdfdfd" d="M527 594h5v5h-5z"/>
<path fill="#fdfdfd" d="M532 594h5v5h-5z"/>
<path fill="#fdfdfd" d="M537 594h5v5h-5z"/>
<path fill="#fdfdfd" d="M542 594h5v5h-5z"/>
<path fill="#fdfdfd" d="M547 594h5v5h-5z"/>
<path fill="#fdfdfd" d="M552 594h5v5h-5z"/>
<path fill="#fdfdfd" d="M557 594h5v5h-5z"/>
<path fill="#fdfdfd" d="M562 594h5v5h-5z"/>
<path fill="#fdfdfd" d="M567 594h5v5h-5z"/>
<path fill="#fdfdfd" d="M572 594h5v5h-5z"/>
<path fill="#fdfdfd" d="M577 594h5v5h-5z"/>
<path fill="#fdfdfd" d="M582 594h5v5h-5z"/>
<path fill="#fdfdfd" d="M587 594h5v5h-5z"/>
<path fill="#fdfdfd" d="M592 594h5v5h-5z"/>
<path fill="#fdfdfd" d="M597 594h5v5h-5z"/>
<path fill="#fdfdfd" d="M602 594h5v5h-5z"/>
<path fill="#fdfdfd" d="M607 594h5v5h-5z"/>
<path fill="#fdfdfd" d="M612 594h5v5h-5z"/>
<path fill="#fdfdfd" d="M617 594h5v5h-5z"/>
<path fill="#fdfdfd" d="M622 594h5v5h-5z"/>
<path fill="#fdfdfd" d="M627 594h5v5h-5z"/>
<path fill="#fdfdfd" d="M632 594h5v5h-5z"/>
<path fill="#fdfdfd" d="M637 594h5v5h-5z"/>
<path fill="#fdfdfd" d="M642 594h5v5h-5z"/>
<path fill="#fdfdfd" d="M647 594h5v5h-5z"/>
<path fill="#fdfdfd" d="M652 594h5v5h-5z"/>
<path fill="#fdfdfd" d="M657 594h5v5h-5z"/>
<path fill="#fdfdfd" d="M662 594h5v5h-5z"/>
<path fill="#fdfdfd" d="M667 594h5v5h-5z"/>
<path fill="#fdfdfd" d="M672 594h5v5h-5z"/>
<path fill="#fdfdfd" d="M677 594h5v5h-5z"/>
<path fill="#fdfdfd" d="M682 594h5v5h-5z"/>
<path fill="#fdfdfd" d="M687 594h5v5h-5z"/>
<path fill="#fdfdfd" d="M692 594h5v5h-5z"/>
<path fill="#fdfdfd" d="M697 594h5v5h-5z"/>
<path fill="#fdfdfd" d="M702 594h5v5h-5z"/>
<path fill="#fdfdfd" d="M707 594h5v5h-5z"/>
<path fill="#fdfdfd" d="M712 594h5v5h-5z"/>
<path fill="#fdfdfd" d="M717 594h5v5h-5z"/>
<path fill="#fdfdfd" d="M722 594h5v5h-5z"/>
<path fill="#fdfdfd" d="M727 594h5v5h-5z"/>
<path fill="#fdfdfd" d="M732 594h5v5h-5z"/>
<path fill="#fdfdfd" d="M737 594h5v5h-5z"/>
<path fill="#fcfdfd" d="M322 599h5v5h-5z"/>
<path fill="#fafbfa" d="M327 599h5v5h-5z"/>
<path fill="#fbfbfb" d="M332 599h5v5h-5z"/>
<path fill="#fdfdfd" d="M337 599h5v5h-5z"/>
<path fill="#f3f9f6" d="M317 604h5v5h-5z"/>
<path fill="#a7cdb9" d="M322 604h5v5h-5z"/>
<path fill="#a5cbb6" d="M327 604h5v5h-5z"/>
<path fill="#e5eee9" d="M332 604h5v5h-5z"/>
<path fill="#f4f6f5" d="M337 604h5v5h-5z"/>
<path fill="#fdfdfc" d="M357 604h5v5h-5z"/>
<path fill="#f2f2f2" d="M362 604h5v5h-5z"/>
<path fill="#f9fafa" d="M367 604h5v5h-5z"/>
<path fill="#fefefe" d="M372 604h5v5h-5z"/>
<path fill="#fefefe" d="M377 604h5v5h-5z"/>
<path fill="#f9f8f7" d="M382 604h5v5h-5z"/>
<path fill="#f8fafa" d="M387 604h5v5h-5z"/>
<path fill="#faf9f9" d="M397 604h5v5h-5z"/>
<path fill="#fcfdfd" d="M402 604h5v5h-5z"/>
<path fill="#f6f6f5" d="M412 604h5v5h-5z"/>
<path fill="#fafbfc" d="M417 604h5v5h-5z"/>
<path fill="#fefefe" d="M422 604h5v5h-5z"/>
<path fill="#fefefd" d="M657 604h5v5h-5z"/>
<path fill="#f3f1f0" d="M662 604h5v5h-5z"/>
<path fill="#f1f1f1" d="M667 604h5v5h-5z"/>
<path fill="#ededed" d="M672 604h5v5h-5z"/>
<path fill="#f4f4f4" d="M677 604h5v5h-5z"/>
<path fill="#f2f1f0" d="M682 604h5v5h-5z"/>
<path fill="#f4f5f5" d="M687 604h5v5h-5z"/>
<path fill="#f2f1f0" d="M692 604h5v5h-5z"/>
<path fill="#fafbfc" d="M697 604h5v5h-5z"/>
<path fill="#e6f2eb" d="M317 609h5v5h-5z"/>
<path fill="#54a077" d="M322 609h5v5h-5z"/>
<path fill="#4f9d72" d="M327 609h5v5h-5z"/>
<path fill="#c4ddcf" d="M332 609h5v5h-5z"/>
<path fill="#e8f1eb" d="M337 609h5v5h-5z"/>
<path fill="#f3f0ec" d="M357 609h5v5h-5z"/>
<path fill="#bdbcbc" d="M362 609h5v5h-5z"/>
<path fill="#cccdcf" d="M367 609h5v5h-5z"/>
<path fill="#d3d3d4" d="M372 609h5v5h-5z"/>
<path fill="#d4d4d4" d="M377 609h5v5h-5z"/>
<path fill="#c9c9c8" d="M382 609h5v5h-5z"/>
<path fill="#cfd3d6" d="M387 609h5v5h-5z"/>
<path fill="#f7f6f6" d="M392 609h5v5h-5z"/>
<path fill="#cccac8" d="M397 609h5v5h-5z"/>
<path fill="#eaedef" d="M402 609h5v5h-5z"/>
<path fill="#dedcda" d="M407 609h5v5h-5z"/>
<path fill="#c9cac9" d="M412 609h5v5h-5z"/>
<path fill="#cccfd0" d="M417 609h5v5h-5z"/>
<path fill="#dcdcdb" d="M422 609h5v5h-5z"/>
<path fill="#dddfe1" d="M427 609h5v5h-5z"/>
<path fill="#fdfefe" d="M432 609h5v5h-5z"/>
<path fill="#eae7e4" d="M662 609h5v5h-5z"/>
<path fill="#dededc" d="M667 609h5v5h-5z"/>
<path fill="#d1d0ce" d="M672 609h5v5h-5z"/>
<path fill="#d1d1d1" d="M677 609h5v5h-5z"/>
<path fill="#e0e0df" d="M682 609h5v5h-5z"/>
<path fill="#dddddc" d="M687 609h5v5h-5z"/>
<path fill="#d4d2d0" d="M692 609h5v5h-5z"/>
<path fill="#e7eaec" d="M697 609h5v5h-5z"/>
<path fill="#e8f2ec" d="M317 614h5v5h-5z"/>
<path fill="#5ba47d" d="M322 614h5v5h-5z"/>
<path fill="#57a178" d="M327 614h5v5h-5z"/>
<path fill="#c8dfd1" d="M332 614h5v5h-5z"/>
<path fill="#e9f1ec" d="M337 614h5v5h-5z"/>
<path fill="#f3f0ec" d="M357 614h5v5h-5z"/>
<path fill="#c2c1c1" d="M362 614h5v5h-5z"/>
<path fill="#c2c3c3" d="M367 614h5v5h-5z"/>
<path fill="#c6c6c5" d="M372 614h5v5h-5z"/>
<path fill="#c2c2c3" d="M377 614h5v5h-5z"/>
<path fill="#bdbcbc" d="M382 614h5v5h-5z"/>
<path fill="#c2c6ca" d="M387 614h5v5h-5z"/>
<path fill="#eeedec" d="M392 614h5v5h-5z"/>
<path fill="#c5c4c2" d="M397 614h5v5h-5z"/>
<path fill="#dee1e2" d="M402 614h5v5h-5z"/>
<path fill="#cecbc9" d="M407 614h5v5h-5z"/>
<path fill="#c4c6c6" d="M412 614h5v5h-5z"/>
<path fill="#c6c7c7" d="M417 614h5v5h-5z"/>
<path fill="#c8c8c7" d="M422 614h5v5h-5z"/>
<path fill="#ced1d5" d="M427 614h5v5h-5z"/>
<path fill="#fdfefe" d="M432 614h5v5h-5z"/>
<path fill="#edecea" d="M662 614h5v5h-5z"/>
<path fill="#eae9e8" d="M667 614h5v5h-5z"/>
<path fill="#e2e0de" d="M672 614h5v5h-5z"/>
<path fill="#d7d7d7" d="M677 614h5v5h-5z"/>
<path fill="#eae9e7" d="M682 614h5v5h-5z"/>
<path fill="#dededd" d="M687 614h5v5h-5z"/>
<path fill="#dcdad8" d="M692 614h5v5h-5z"/>
<path fill="#eef0f2" d="M697 614h5v5h-5z"/>
<path fill="#f9fcfa" d="M317 619h5v5h-5z"/>
<path fill="#d1e4da" d="M322 619h5v5h-5z"/>
<path fill="#cee1d7" d="M327 619h5v5h-5z"/>
<path fill="#eef2f0" d="M332 619h5v5h-5z"/>
<path fill="#f6f7f7" d="M337 619h5v5h-5z"/>
<path fill="#fdfdfc" d="M357 619h5v5h-5z"/>
<path fill="#f2f2f2" d="M362 619h5v5h-5z"/>
<path fill="#f7f7f7" d="M367 619h5v5h-5z"/>
<path fill="#f4f4f4" d="M372 619h5v5h-5z"/>
<path fill="#f6f5f5" d="M377 619h5v5h-5z"/>
<path fill="#f5f6f6" d="M382 619h5v5h-5z"/>
<path fill="#f7f7f8" d="M387 619h5v5h-5z"/>
<path fill="#fdfdfd" d="M392 619h5v5h-5z"/>
<path fill="#fafafa" d="M397 619h5v5h-5z"/>
<path fill="#f8f8f8" d="M402 619h5v5h-5z"/>
<path fill="#f7f7f7" d="M407 619h5v5h-5z"/>
<path fill="#f6f6f6" d="M412 619h5v5h-5z"/>
<path fill="#f4f4f4" d="M417 619h5v5h-5z"/>
<path fill="#f5f5f6" d="M422 619h5v5h-5z"/>
<path fill="#f8f8f9" d="M427 619h5v5h-5z"/>
<path fill="#fefefe" d="M662 619h5v5h-5z"/>
<path fill="#fefdfe" d="M667 619h5v5h-5z"/>
<path fill="#fdfcfc" d="M672 619h5v5h-5z"/>
<path fill="#fcfcfc" d="M677 619h5v5h-5z"/>
<path fill="#fdfdfc" d="M682 619h5v5h-5z"/>
<path fill="#fbfbfb" d="M687 619h5v5h-5z"/>
<path fill="#fcfcfc" d="M692 619h5v5h-5z"/>
<path fill="#fdfdfd" d="M327 624h5v5h-5z"/>
<path fill="#fdfdfd" d="M332 624h5v5h-5z"/>
<path fill="#fefefe" d="M337 624h5v5h-5z"/>
<path fill="#fbfafa" d="M314 634h3v5h-3z"/>
<path fill="#fbfafa" d="M317 634h5v5h-5z"/>
<path fill="#fbfafa" d="M322 634h5v5h-5z"/>
<path fill="#fbfafa" d="M327 634h5v5h-5z"/>
<path fill="#fbfafa" d="M332 634h5v5h-5z"/>
<path fill="#fbfafa" d="M337 634h5v5h-5z"/>
<path fill="#fbfafa" d="M342 634h5v5h-5z"/>
<path fill="#fbfafa" d="M347 634h5v5h-5z"/>
<path fill="#fbfafa" d="M352 634h5v5h-5z"/>
<path fill="#fbfafa" d="M357 634h5v5h-5z"/>
<path fill="#fbfafa" d="M362 634h5v5h-5z"/>
<path fill="#fbfafa" d="M367 634h5v5h-5z"/>
<path fill="#fbfafa" d="M372 634h5v5h-5z"/>
<path fill="#fbfafa" d="M377 634h5v5h-5z"/>
<path fill="#fbfafa" d="M382 634h5v5h-5z"/>
<path fill="#fbfafa" d="M387 634h5v5h-5z"/>
<path fill="#fbfafa" d="M392 634h5v5h-5z"/>
<path fill="#fbfafa" d="M397 634h5v5h-5z"/>
<path fill="#fbfafa" d="M402 634h5v5h-5z"/>
<path fill="#fbfafa" d="M407 634h5v5h-5z"/>
<path fill="#fbfafa" d="M412 634h5v5h-5z"/>
<path fill="#fbfafa" d="M417 634h5v5h-5z"/>
<path fill="#fbfafa" d="M422 634h5v5h-5z"/>
<path fill="#fbfafa" d="M427 634h5v5h-5z"/>
<path fill="#fbfafa" d="M432 634h5v5h-5z"/>
<path fill="#fbfafa" d="M437 634h5v5h-5z"/>
<path fill="#fbfafa" d="M442 634h5v5h-5z"/>
<path fill="#fbfafa" d="M447 634h5v5h-5z"/>
<path fill="#fbfafa" d="M452 634h5v5h-5z"/>
<path fill="#fbfafa" d="M457 634h5v5h-5z"/>
<path fill="#fbfafa" d="M462 634h5v5h-5z"/>
<path fill="#fbfafa" d="M467 634h5v5h-5z"/>
<path fill="#fbfafa" d="M472 634h5v5h-5z"/>
<path fill="#fbfafa" d="M477 634h5v5h-5z"/>
<path fill="#fbfafa" d="M482 634h5v5h-5z"/>
<path fill="#fbfafa" d="M487 634h5v5h-5z"/>
<path fill="#fbfafa" d="M492 634h5v5h-5z"/>
<path fill="#fbfafa" d="M497 634h5v5h-5z"/>
<path fill="#fbfafa" d="M502 634h5v5h-5z"/>
<path fill="#fbfafa" d="M507 634h5v5h-5z"/>
<path fill="#fbfafa" d="M512 634h5v5h-5z"/>
<path fill="#fbfafa" d="M517 634h5v5h-5z"/>
<path fill="#fbfafa" d="M522 634h5v5h-5z"/>
<path fill="#fbfafa" d="M527 634h5v5h-5z"/>
<path fill="#fbfafa" d="M532 634h5v5h-5z"/>
<path fill="#fbfafa" d="M537 634h5v5h-5z"/>
<path fill="#fbfafa" d="M542 634h5v5h-5z"/>
<path fill="#fbfafa" d="M547 634h5v5h-5z"/>
<path fill="#fbfafa" d="M552 634h5v5h-5z"/>
<path fill="#fbfafa" d="M557 634h5v5h-5z"/>
<path fill="#fbfafa" d="M562 634h5v5h-5z"/>
<path fill="#fbfafa" d="M567 634h5v5h-5z"/>
<path fill="#fbfafa" d="M572 634h5v5h-5z"/>
<path fill="#fbfafa" d="M577 634h5v5h-5z"/>
<path fill="#fbfafa" d="M582 634h5v5h-5z"/>
<path fill="#fbfafa" d="M587 634h5v5h-5z"/>
<path fill="#fbfafa" d="M592 634h5v5h-5z"/>
<path fill="#fbfafa" d="M597 634h5v5h-5z"/>
<path fill="#fbfafa" d="M602 634h5v5h-5z"/>
<path fill="#fbfafa" d="M607 634h5v5h-5z"/>
<path fill="#fbfafa" d="M612 634h5v5h-5z"/>
<path fill="#fbfafa" d="M617 634h5v5h-5z"/>
<path fill="#fbfafa" d="M622 634h5v5h-5z"/>
<path fill="#fbfafa" d="M627 634h5v5h-5z"/>
<path fill="#fbfafa" d="M632 634h5v5h-5z"/>
<path fill="#fbfafa" d="M637 634h5v5h-5z"/>
<path fill="#fbfafa" d="M642 634h5v5h-5z"/>
<path fill="#fbfafa" d="M647 634h5v5h-5z"/>
<path fill="#fbfafa" d="M652 634h5v5h-5z"/>
<path fill="#fbfafa" d="M657 634h5v5h-5z"/>
<path fill="#fbfafa" d="M662 634h5v5h-5z"/>
<path fill="#fbfafa" d="M667 634h5v5h-5z"/>
<path fill="#fbfafa" d="M672 634h5v5h-5z"/>
<path fill="#fbfafa" d="M677 634h5v5h-5z"/>
<path fill="#fbfafa" d="M682 634h5v5h-5z"/>
<path fill="#fbfafa" d="M687 634h5v5h-5z"/>
<path fill="#fbfafa" d="M692 634h5v5h-5z"/>
<path fill="#fbfafa" d="M697 634h5v5h-5z"/>
<path fill="#fbfafa" d="M702 634h5v5h-5z"/>
<path fill="#fbfafa" d="M707 634h5v5h-5z"/>
<path fill="#fbfafa" d="M712 634h5v5h-5z"/>
<path fill="#fbfafa" d="M717 634h5v5h-5z"/>
<path fill="#fbfafa" d="M722 634h5v5h-5z"/>
<path fill="#fbfafa" d="M727 634h5v5h-5z"/>
<path fill="#fbfafa" d="M732 634h5v5h-5z"/>
<path fill="#fbfafa" d="M737 634h5v5h-5z"/>
<path fill="#fdfefe" d="M317 644h5v5h-5z"/>
<path fill="#edf4f0" d="M322 644h5v5h-5z"/>
<path fill="#eaf0ed" d="M327 644h5v5h-5z"/>
<path fill="#f6f7f6" d="M332 644h5v5h-5z"/>
<path fill="#fafafa" d="M337 644h5v5h-5z"/>
<path fill="#fefefe" d="M662 644h5v5h-5z"/>
<path fill="#fefefe" d="M667 644h5v5h-5z"/>
<path fill="#fdfdfe" d="M672 644h5v5h-5z"/>
<path fill="#fefefe" d="M682 644h5v5h-5z"/>
<path fill="#fefefe" d="M314 649h3v5h-3z"/>
<path fill="#eaf3ee" d="M317 649h5v5h-5z"/>
<path fill="#74b18f" d="M322 649h5v5h-5z"/>
<path fill="#70ae8c" d="M327 649h5v5h-5z"/>
<path fill="#d3e4db" d="M332 649h5v5h-5z"/>
<path fill="#edf2ef" d="M337 649h5v5h-5z"/>
<path fill="#fdfdfd" d="M342 649h5v5h-5z"/>
<path fill="#fefefe" d="M347 649h5v5h-5z"/>
<path fill="#fefefe" d="M352 649h5v5h-5z"/>
<path fill="#f8f6f5" d="M357 649h5v5h-5z"/>
<path fill="#dbdbdb" d="M362 649h5v5h-5z"/>
<path fill="#e9ebed" d="M367 649h5v5h-5z"/>
<path fill="#f3f3f3" d="M372 649h5v5h-5z"/>
<path fill="#f5f5f4" d="M377 649h5v5h-5z"/>
<path fill="#eae9e8" d="M382 649h5v5h-5z"/>
<path fill="#ebedef" d="M387 649h5v5h-5z"/>
<path fill="#f6f5f3" d="M392 649h5v5h-5z"/>
<path fill="#dddedf" d="M397 649h5v5h-5z"/>
<path fill="#f5f6f8" d="M402 649h5v5h-5z"/>
<path fill="#f7f7f6" d="M407 649h5v5h-5z"/>
<path fill="#e6e5e4" d="M412 649h5v5h-5z"/>
<path fill="#eceeef" d="M417 649h5v5h-5z"/>
<path fill="#f5f5f6" d="M422 649h5v5h-5z"/>
<path fill="#f7f7f8" d="M427 649h5v5h-5z"/>
<path fill="#fdfdfd" d="M432 649h5v5h-5z"/>
<path fill="#fdfdfd" d="M437 649h5v5h-5z"/>
<path fill="#fdfdfd" d="M442 649h5v5h-5z"/>
<path fill="#fdfdfd" d="M447 649h5v5h-5z"/>
<path fill="#fdfdfd" d="M452 649h5v5h-5z"/>
<path fill="#fdfdfd" d="M457 649h5v5h-5z"/>
<path fill="#fdfdfd" d="M462 649h5v5h-5z"/>
<path fill="#fdfdfd" d="M467 649h5v5h-5z"/>
<path fill="#fdfdfd" d="M472 649h5v5h-5z"/>
<path fill="#fdfdfd" d="M477 649h5v5h-5z"/>
<path fill="#fdfdfd" d="M482 649h5v5h-5z"/>
<path fill="#fdfdfd" d="M487 649h5v5h-5z"/>
<path fill="#fdfdfd" d="M492 649h5v5h-5z"/>
<path fill="#fdfdfd" d="M497 649h5v5h-5z"/>
<path fill="#fdfdfd" d="M502 649h5v5h-5z"/>
<path fill="#fdfdfd" d="M507 649h5v5h-5z"/>
<path fill="#fdfdfd" d="M512 649h5v5h-5z"/>
<path fill="#fdfdfd" d="M517 649h5v5h-5z"/>
<path fill="#fdfdfd" d="M522 649h5v5h-5z"/>
<path fill="#fdfdfd" d="M527 649h5v5h-5z"/>
<path fill="#fdfdfd" d="M532 649h5v5h-5z"/>
<path fill="#fdfdfd" d="M537 649h5v5h-5z"/>
<path fill="#fdfdfd" d="M542 649h5v5h-5z"/>
<path fill="#fdfdfd" d="M547 649h5v5h-5z"/>
<path fill="#fdfdfd" d="M552 649h5v5h-5z"/>
<path fill="#fdfdfd" d="M557 649h5v5h-5z"/>
<path fill="#fdfdfd" d="M562 649h5v5h-5z"/>
<path fill="#fdfdfd" d="M567 649h5v5h-5z"/>
<path fill="#fdfdfd" d="M572 649h5v5h-5z"/>
<path fill="#fdfdfd" d="M577 649h5v5h-5z"/>
<path fill="#fdfdfd" d="M582 649h5v5h-5z"/>
<path fill="#fdfdfd" d="M587 649h5v5h-5z"/>
<path fill="#fdfdfd" d="M592 649h5v5h-5z"/>
<path fill="#fdfdfd" d="M597 649h5v5h-5z"/>
<path fill="#fdfdfd" d="M602 649h5v5h-5z"/>
<path fill="#fdfdfd" d="M607 649h5v5h-5z"/>
<path fill="#fdfdfd" d="M612 649h5v5h-5z"/>
<path fill="#fdfdfd" d="M617 649h5v5h-5z"/>
<path fill="#fdfdfd" d="M622 649h5v5h-5z"/>
<path fill="#fdfdfd" d="M627 649h5v5h-5z"/>
<path fill="#fdfdfd" d="M632 649h5v5h-5z"/>
<path fill="#fdfdfd" d="M637 649h5v5h-5z"/>
<path fill="#fdfdfd" d="M642 649h5v5h-5z"/>
<path fill="#fdfdfd" d="M647 649h5v5h-5z"/>
<path fill="#fdfdfd" d="M652 649h5v5h-5z"/>
<path fill="#fcfcfb" d="M657 649h5v5h-5z"/>
<path fill="#e8e7e4" d="M662 649h5v5h-5z"/>
<path fill="#e3e3e2" d="M667 649h5v5h-5z"/>
<path fill="#dbdad9" d="M672 649h5v5h-5z"/>
<path fill="#e4e5e4" d="M677 649h5v5h-5z"/>
<path fill="#e4e3e2" d="M682 649h5v5h-5z"/>
<path fill="#e6e6e6" d="M687 649h5v5h-5z"/>
<path fill="#e1e0df" d="M692 649h5v5h-5z"/>
<path fill="#f2f3f5" d="M697 649h5v5h-5z"/>
<path fill="#fdfdfd" d="M702 649h5v5h-5z"/>
<path fill="#fdfdfd" d="M707 649h5v5h-5z"/>
<path fill="#fdfdfd" d="M712 649h5v5h-5z"/>
<path fill="#fdfdfd" d="M717 649h5v5h-5z"/>
<path fill="#fdfdfd" d="M722 649h5v5h-5z"/>
<path fill="#fdfdfd" d="M727 649h5v5h-5z"/>
<path fill="#fdfdfd" d="M732 649h5v5h-5z"/>
<path fill="#fdfdfd" d="M737 649h5v5h-5z"/>
<path fill="#eeeeee" d="M314 654h3v5h-3z"/>
<path fill="#d6dfda" d="M317 654h5v5h-5z"/>
<path fill="#5d9c79" d="M322 654h5v5h-5z"/>
<path fill="#589975" d="M327 654h5v5h-5z"/>
<path fill="#b8cdc1" d="M332 654h5v5h-5z"/>
<path fill="#d6ded9" d="M337 654h5v5h-5z"/>
<path fill="#eaeaea" d="M342 654h5v5h-5z"/>
<path fill="#eaeaea" d="M347 654h5v5h-5z"/>
<path fill="#e5e6e6" d="M352 654h5v5h-5z"/>
<path fill="#bfc2c3" d="M357 654h5v5h-5z"/>
<path fill="#a4a9ac" d="M362 654h5v5h-5z"/>
<path fill="#a3a8ab" d="M367 654h5v5h-5z"/>
<path fill="#9fa5a8" d="M372 654h5v5h-5z"/>
<path fill="#a2a7a9" d="M377 654h5v5h-5z"/>
<path fill="#9da4a7" d="M382 654h5v5h-5z"/>
<path fill="#a3aaaf" d="M387 654h5v5h-5z"/>
<path fill="#b4b9bb" d="M392 654h5v5h-5z"/>
<path fill="#9da3a7" d="M397 654h5v5h-5z"/>
<path fill="#b5bcbf" d="M402 654h5v5h-5z"/>
<path fill="#a9aeaf" d="M407 654h5v5h-5z"/>
<path fill="#9ea4a7" d="M412 654h5v5h-5z"/>
<path fill="#a1a7aa" d="M417 654h5v5h-5z"/>
<path fill="#a3a9ac" d="M422 654h5v5h-5z"/>
<path fill="#a9b0b4" d="M427 654h5v5h-5z"/>
<path fill="#bfc5c8" d="M432 654h5v5h-5z"/>
<path fill="#c0c6c9" d="M437 654h5v5h-5z"/>
<path fill="#c0c6c9" d="M442 654h5v5h-5z"/>
<path fill="#c0c6c9" d="M447 654h5v5h-5z"/>
<path fill="#c0c6c9" d="M452 654h5v5h-5z"/>
<path fill="#c0c6c9" d="M457 654h5v5h-5z"/>
<path fill="#c0c6c9" d="M462 654h5v5h-5z"/>
<path fill="#c0c6c9" d="M467 654h5v5h-5z"/>
<path fill="#c0c6c9" d="M472 654h5v5h-5z"/>
<path fill="#c0c6c9" d="M477 654h5v5h-5z"/>
<path fill="#c0c6c9" d="M482 654h5v5h-5z"/>
<path fill="#c0c6c9" d="M487 654h5v5h-5z"/>
<path fill="#c0c6c9" d="M492 654h5v5h-5z"/>
<path fill="#c0c6c9" d="M497 654h5v5h-5z"/>
<path fill="#c0c6c9" d="M502 654h5v5h-5z"/>
<path fill="#c0c6c9" d="M507 654h5v5h-5z"/>
<path fill="#c0c6c9" d="M512 654h5v5h-5z"/>
<path fill="#c0c6c9" d="M517 654h5v5h-5z"/>
<path fill="#c0c6c9" d="M522 654h5v5h-5z"/>
<path fill="#c0c6c9" d="M527 654h5v5h-5z"/>
<path fill="#c0c6c9" d="M532 654h5v5h-5z"/>
<path fill="#c0c6c9" d="M537 654h5v5h-5z"/>
<path fill="#c0c6c9" d="M542 654h5v5h-5z"/>
<path fill="#c0c6c9" d="M547 654h5v5h-5z"/>
<path fill="#c0c6c9" d="M552 654h5v5h-5z"/>
<path fill="#c0c6c9" d="M557 654h5v5h-5z"/>
<path fill="#c0c6c9" d="M562 654h5v5h-5z"/>
<path fill="#c0c6c9" d="M567 654h5v5h-5z"/>
<path fill="#c0c6c9" d="M572 654h5v5h-5z"/>
<path fill="#c0c6c9" d="M577 654h5v5h-5z"/>
<path fill="#c0c6c9" d="M582 654h5v5h-5z"/>
<path fill="#c0c6c9" d="M587 654h5v5h-5z"/>
<path fill="#c0c6c9" d="M592 654h5v5h-5z"/>
<path fill="#c0c6c9" d="M597 654h5v5h-5z"/>
<path fill="#c0c6c9" d="M602 654h5v5h-5z"/>
<path fill="#c0c6c9" d="M607 654h5v5h-5z"/>
<path fill="#c0c6c9" d="M612 654h5v5h-5z"/>
<path fill="#c0c6c9" d="M617 654h5v5h-5z"/>
<path fill="#c0c6c9" d="M622 654h5v5h-5z"/>
<path fill="#c0c6c9" d="M627 654h5v5h-5z"/>
<path fill="#c0c6c9" d="M632 654h5v5h-5z"/>
<path fill="#c0c6c9" d="M637 654h5v5h-5z"/>
<path fill="#c0c6c9" d="M642 654h5v5h-5z"/>
<path fill="#c0c6c9" d="M647 654h5v5h-5z"/>
<path fill="#c0c6c9" d="M652 654h5v5h-5z"/>
<path fill="#c0c6c9" d="M657 654h5v5h-5z"/>
<path fill="#b6babc" d="M662 654h5v5h-5z"/>
<path fill="#b0b4b6" d="M667 654h5v5h-5z"/>
<path fill="#a7acad" d="M672 654h5v5h-5z"/>
<path fill="#a7acaf" d="M677 654h5v5h-5z"/>
<path fill="#b0b6b8" d="M682 654h5v5h-5z"/>
<path fill="#acb1b3" d="M687 654h5v5h-5z"/>
<path fill="#a8acae" d="M692 654h5v5h-5z"/>
<path fill="#b4bbbf" d="M697 654h5v5h-5z"/>
<path fill="#c0c6c9" d="M702 654h5v5h-5z"/>
<path fill="#c0c6c9" d="M707 654h5v5h-5z"/>
<path fill="#c0c6c9" d="M712 654h5v5h-5z"/>
<path fill="#c0c6c9" d="M717 654h5v5h-5z"/>
<path fill="#c0c6c9" d="M722 654h5v5h-5z"/>
<path fill="#c0c6c9" d="M727 654h5v5h-5z"/>
<path fill="#c0c6c9" d="M732 654h5v5h-5z"/>
<path fill="#c0c6c9" d="M737 654h5v5h-5z"/>
<path fill="#fbfbfa" d="M261 247h53v5h-53z"/>
<path fill="#fbfbfa" d="M261 290h53v5h-53z"/>
<path fill="#fbfbfa" d="M261 333h53v5h-53z"/>
<path fill="#fbfbfa" d="M261 376h53v5h-53z"/>
<path fill="#fbfbfa" d="M261 419h53v5h-53z"/>
<path fill="#fbfbfa" d="M261 462h53v5h-53z"/>
<path fill="#fbfbfa" d="M261 505h53v5h-53z"/>
<path fill="#fbfbfa" d="M261 548h53v5h-53z"/>
<path fill="#fbfbfa" d="M261 591h53v5h-53z"/>
<path fill="#fbfbfa" d="M261 634h53v5h-53z"/>
<path fill="#e4e1de" d="M15 62h5v5h-5z"/>
<path fill="#dfe0e2" d="M20 62h5v5h-5z"/>
<path fill="#efebe7" d="M30 62h5v5h-5z"/>
<path fill="#eceff1" d="M35 62h5v5h-5z"/>
<path fill="#dedad5" d="M45 62h5v5h-5z"/>
<path fill="#e6e6e4" d="M50 62h5v5h-5z"/>
<path fill="#e9ebed" d="M55 62h5v5h-5z"/>
<path fill="#e6e5e3" d="M80 62h5v5h-5z"/>
<path fill="#aeaaa5" d="M15 67h5v5h-5z"/>
<path fill="#a4a6a8" d="M20 67h5v5h-5z"/>
<path fill="#c3bfbb" d="M25 67h5v5h-5z"/>
<path fill="#b5a7a0" d="M30 67h5v5h-5z"/>
<path fill="#a5adb6" d="M35 67h5v5h-5z"/>
<path fill="#e6ebf0" d="M40 67h5v5h-5z"/>
<path fill="#a8a197" d="M45 67h5v5h-5z"/>
<path fill="#a59c91" d="M50 67h5v5h-5z"/>
<path fill="#a9adb8" d="M55 67h5v5h-5z"/>
<path fill="#d6d5d4" d="M60 67h5v5h-5z"/>
<path fill="#b4b0b6" d="M65 67h5v5h-5z"/>
<path fill="#c7c5c3" d="M70 67h5v5h-5z"/>
<path fill="#c8c6c4" d="M75 67h5v5h-5z"/>
<path fill="#a9aaab" d="M80 67h5v5h-5z"/>
<path fill="#bfbbb9" d="M85 67h5v5h-5z"/>
<path fill="#d4d5d9" d="M90 67h5v5h-5z"/>
<path fill="#c0beba" d="M15 72h5v5h-5z"/>
<path fill="#bcbdbc" d="M20 72h5v5h-5z"/>
<path fill="#b9b5b1" d="M25 72h5v5h-5z"/>
<path fill="#b5aaa6" d="M30 72h5v5h-5z"/>
<path fill="#b1b0b2" d="M35 72h5v5h-5z"/>
<path fill="#dfe8ee" d="M40 72h5v5h-5z"/>
<path fill="#c1bfbd" d="M45 72h5v5h-5z"/>
<path fill="#f0e4d4" d="M50 72h5v5h-5z"/>
<path fill="#a3a6b3" d="M55 72h5v5h-5z"/>
<path fill="#cbc6c1" d="M60 72h5v5h-5z"/>
<path fill="#7d7886" d="M65 72h5v5h-5z"/>
<path fill="#c2c5c6" d="M70 72h5v5h-5z"/>
<path fill="#c4c0bd" d="M75 72h5v5h-5z"/>
<path fill="#bdbbb9" d="M80 72h5v5h-5z"/>
<path fill="#b9b5b3" d="M85 72h5v5h-5z"/>
<path fill="#c9cbd0" d="M90 72h5v5h-5z"/>
<path fill="#3a3a3a" d="M56 4h5v5h-5z"/>
<path fill="#3a3a3a" d="M61 4h5v5h-5z"/>
<path fill="#3a3a3a" d="M66 4h5v5h-5z"/>
<path fill="#3a3a3a" d="M71 4h5v5h-5z"/>
<path fill="#3a3a3a" d="M76 4h5v5h-5z"/>
<path fill="#3a3a3a" d="M81 4h5v5h-5z"/>
<path fill="#ffffff" d="M56 9h5v5h-5z"/>
<path fill="#dde89a" d="M61 9h5v5h-5z"/>
<path fill="#d8e58e" d="M66 9h5v5h-5z"/>
<path fill="#d8e58e" d="M71 9h5v5h-5z"/>
<path fill="#dde89a" d="M76 9h5v5h-5z"/>
<path fill="#ffffff" d="M81 9h5v5h-5z"/>
<path fill="#e3eeb0" d="M56 14h5v5h-5z"/>
<path fill="#f2f5d8" d="M61 14h5v5h-5z"/>
<path fill="#cfc68f" d="M66 14h5v5h-5z"/>
<path fill="#bdd0d6" d="M71 14h5v5h-5z"/>
<path fill="#eef3d0" d="M76 14h5v5h-5z"/>
<path fill="#dfeaa6" d="M81 14h5v5h-5z"/>
<path fill="#e3eeb4" d="M56 19h5v5h-5z"/>
<path fill="#efd0b4" d="M61 19h5v5h-5z"/>
<path fill="#c4a83c" d="M66 19h5v5h-5z"/>
<path fill="#5db0a3" d="M71 19h5v5h-5z"/>
<path fill="#ecd3b8" d="M76 19h5v5h-5z"/>
<path fill="#e3edb5" d="M81 19h5v5h-5z"/>
<path fill="#f3f6e0" d="M56 24h5v5h-5z"/>
<path fill="#f3dfd0" d="M61 24h5v5h-5z"/>
<path fill="#dca36c" d="M66 24h5v5h-5z"/>
<path fill="#d89a60" d="M71 24h5v5h-5z"/>
<path fill="#efdccb" d="M76 24h5v5h-5z"/>
<path fill="#f1f5e0" d="M81 24h5v5h-5z"/>
<path fill="#ffffff" d="M56 29h5v5h-5z"/>
<path fill="#fbf8f5" d="M61 29h5v5h-5z"/>
<path fill="#ecc9ae" d="M66 29h5v5h-5z"/>
<path fill="#dfb898" d="M71 29h5v5h-5z"/>
<path fill="#faf6f2" d="M76 29h5v5h-5z"/>
<path fill="#ffffff" d="M81 29h5v5h-5z"/>
<path fill="#c8c8c8" d="M56 34h5v5h-5z"/>
<path fill="#c8c8c8" d="M61 34h5v5h-5z"/>
<path fill="#c8c8c8" d="M66 34h5v5h-5z"/>
<path fill="#c8c8c8" d="M71 34h5v5h-5z"/>
<path fill="#c8c8c8" d="M76 34h5v5h-5z"/>
<path fill="#c8c8c8" d="M81 34h5v5h-5z"/>
</svg>

<!--/MOSAIC-->

<div id="botline" class="abs"></div>
<div id="botdark" class="abs"></div>
</body>
</html>
